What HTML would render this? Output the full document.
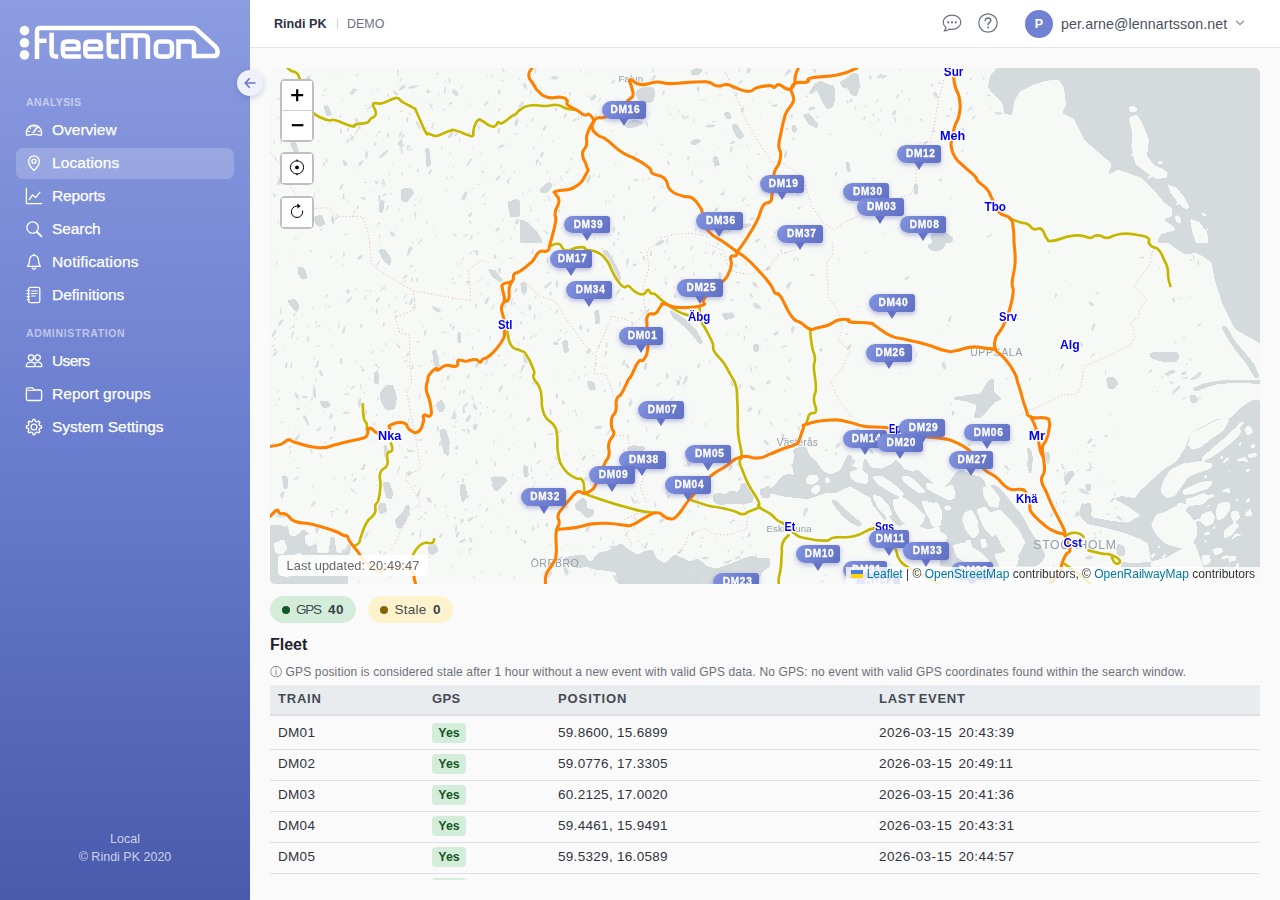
<!DOCTYPE html>
<html lang="en"><head><meta charset="utf-8"><title>FleetMon - Locations</title>
<style>
*{box-sizing:border-box}
html,body{margin:0;padding:0}
body{width:1280px;height:900px;overflow:hidden;background:#fafafa;font-family:"Liberation Sans",sans-serif;position:relative;color:#333}
.abs{position:absolute}
#sidebar{position:absolute;left:0;top:0;width:250px;height:900px;background:linear-gradient(180deg,#8c9ce1 0%,#6a7dce 50%,#4a5aad 100%)}
.sec{position:absolute;left:26px;font-size:10.5px;font-weight:bold;letter-spacing:1.05px;color:rgba(255,255,255,.55);line-height:12px;white-space:nowrap}
.nav{position:absolute;left:16px;width:218px;height:31px;border-radius:7px;color:#fff;font-size:15.5px;line-height:31px;white-space:nowrap}
.nav.active{background:rgba(255,255,255,.2)}
.nav svg{position:absolute;left:9px;top:6.5px;width:18px;height:18px;fill:none;stroke:#fff;stroke-width:1.3;stroke-linecap:round;stroke-linejoin:round}
.nav span{position:absolute;left:36px;top:-1px;-webkit-text-stroke:.25px #fff}
.foot{position:absolute;left:0;width:250px;text-align:center;font-size:12.5px;color:rgba(255,255,255,.72);line-height:14px}
#collapse{position:absolute;left:237px;top:70px;width:26px;height:26px;border-radius:50%;background:#eef0fb;box-shadow:0 2px 6px rgba(60,70,140,.25)}
#header{position:absolute;left:250px;top:0;width:1030px;height:48px;background:#fff;border-bottom:1px solid #e2e5ef}
#header .t{position:absolute;white-space:nowrap;line-height:16px;top:16px;font-size:13.5px}
#map{position:absolute;left:270px;top:68px;width:990px;height:516px;border-radius:5px;overflow:hidden;background:#f7f9f7}
#map svg.base{position:absolute;left:0;top:0}
.mk{position:absolute;height:17.6px;border-radius:9px 3px 3px 9px;background:linear-gradient(120deg,#8293de 0%,#6f7fd1 50%,#6070c4 100%);box-shadow:0 2px 5px rgba(70,80,170,.38);color:#fff;font-weight:bold;font-size:10.1px;line-height:18.4px;text-align:center;letter-spacing:.7px;padding-left:3.2px;-webkit-text-stroke:.3px #fff}
.mk:after{content:"";position:absolute;left:50%;top:17.3px;margin-left:-5px;border-left:5.3px solid transparent;border-right:5.3px solid transparent;border-top:8px solid #6473c7}
.lbar{position:absolute;left:10.3px;width:33.6px;border:2px solid rgba(0,0,0,.25);border-radius:5px;background-clip:padding-box;background:#fff}
.lbar div{width:29.6px;height:29px;position:relative;background:#fff;overflow:hidden}
</style><style>
.th{position:absolute;top:5.8px;font-size:13px;font-weight:bold;letter-spacing:1px;color:#454b54;line-height:16px;white-space:nowrap}
.td{position:absolute;font-size:13.5px;line-height:16px;color:#30343c;white-space:nowrap;letter-spacing:.3px}
.row{position:absolute;left:0;width:990px;height:31px;border-bottom:1px solid #dcdfe4}
.yes{position:absolute;left:162px;top:4.4px;width:34px;height:20px;border-radius:4px;background:#d4edda;color:#155724;font-weight:bold;font-size:12.4px;line-height:20px;text-align:center}
</style></head><body>
<div id="sidebar">
<svg class="abs" style="left:0;top:0" width="250" height="80" viewBox="0 0 250 80"><g fill="#fff"><circle cx="24.5" cy="30.6" r="4.8"/><circle cx="24.5" cy="42.8" r="4.8"/><circle cx="24.5" cy="54.9" r="4.8"/></g>
<g fill="none" stroke="#fff" stroke-width="4.5" stroke-linejoin="round">
<path d="M37,58.9 V31.4 Q37,28.1 40.3,28.1 H193 Q195.2,28.1 196.8,29.6 L215.4,46.6 Q217.5,48.5 217.5,51.2 V52.6 Q217.5,56.1 214,56.1 H194"/>
<path d="M37,40.8 H46.6"/>
<path d="M51.6,32.8 V52.6 Q51.6,56.6 55.6,56.6 H58.2"/>
<path d="M80.9,56.5 H67 Q62.9,56.5 62.9,52.4 V45.6 Q62.9,41.5 67,41.5 H74.4 Q78.5,41.5 78.5,45.6 V48.9 H63"/>
<path d="M103.3,56.5 H89.4 Q85.3,56.5 85.3,52.4 V45.6 Q85.3,41.5 89.4,41.5 H96.8 Q100.9,41.5 100.9,45.6 V48.9 H85.4"/>
<path d="M108.8,32.8 V52.6 Q108.8,56.6 112.8,56.6 H118.8 M108.8,41.4 H118.8"/>
<path d="M123.3,58.9 V35.5 H143.8 Q147.9,35.5 147.9,39.6 V58.9 M135.6,35.5 V58.9" stroke-linejoin="miter"/>
<rect x="155.9" y="41.5" width="16.1" height="15.1" rx="4"/>
<path d="M178.5,58.9 V41.5 H189.9 Q194,41.5 194,45.6 V58.35" stroke-linejoin="miter"/>
</g></svg>
<div class="sec" style="top:96px;letter-spacing:.4px">ANALYSIS</div>
<div class="sec" style="top:327px;letter-spacing:.65px">ADMINISTRATION</div>
<div class="nav" style="top:114.5px"><svg viewBox="0 0 18 18"><path d="M1.6,13.6 A7.6,7.6 0 1 1 16.4,13.6 Q16.2,14.6 15.2,14.3 Q9,12.6 2.8,14.3 Q1.8,14.6 1.6,13.6Z"/><path d="M9,4.6v1.3M4.6,6.4l.9,.9M13.4,6.4l-.5,.5M3.2,10.4h1.3M13.5,10.4h1.3" stroke-width="1.2"/><path d="M8.3,11.6 L12,6.6" stroke-width="1.6"/></svg><span style="letter-spacing:0px">Overview</span></div>
<div class="nav active" style="top:147.5px"><svg viewBox="0 0 18 18"><path d="M9,16.6 C9,16.6 3.6,11.6 3.6,7.3 A5.4,5.4 0 0 1 14.4,7.3 C14.4,11.6 9,16.6 9,16.6Z"/><circle cx="9" cy="7.2" r="2.1"/></svg><span style="letter-spacing:0.11px">Locations</span></div>
<div class="nav" style="top:180.5px"><svg viewBox="0 0 18 18"><path d="M1.4,1.2 V16.6 H16.8"/><path d="M4.2,12.6 L7.6,8 L10.6,10.6 L15,5.2"/></svg><span style="letter-spacing:-0.16px">Reports</span></div>
<div class="nav" style="top:213.5px"><svg viewBox="0 0 18 18"><circle cx="7.6" cy="7.6" r="5.7"/><path d="M11.9,11.9 L16.4,16.4" stroke-width="2"/></svg><span style="letter-spacing:-0.08px">Search</span></div>
<div class="nav" style="top:246.5px"><svg viewBox="0 0 18 18"><path d="M9,2.3 C5.9,2.3 4.5,4.7 4.5,7.6 C4.5,10.6 3.5,12.1 2.6,13.3 H15.4 C14.5,12.1 13.5,10.6 13.5,7.6 C13.5,4.7 12.1,2.3 9,2.3Z"/><path d="M9,1.2v1"/><path d="M7.3,14.9 A1.75,1.75 0 0 0 10.7,14.9" /></svg><span style="letter-spacing:0.18px">Notifications</span></div>
<div class="nav" style="top:279.5px"><svg viewBox="0 0 18 18"><rect x="3.6" y="1.4" width="11.2" height="15.2" rx="1.7"/><path d="M6.6,5h5.6M6.6,7.5h5.6M6.6,10h3.6" stroke-width="1.1"/><path d="M2,4.6h2.4M2,7.6h2.4M2,10.6h2.4M2,13.6h2.4" stroke-width="1.2"/></svg><span style="letter-spacing:0px">Definitions</span></div>
<div class="nav" style="top:345.5px"><svg viewBox="0 0 18 18"><circle cx="6" cy="5.6" r="2.7"/><circle cx="12.6" cy="5.6" r="2.7"/><path d="M1.2,14.6 C1.2,11.6 3.2,10.2 6,10.2 C8.8,10.2 10.2,11.8 10.2,14.6Z"/><path d="M10.6,10.6 C11.2,10.3 11.9,10.2 12.6,10.2 C15.4,10.2 16.9,11.6 16.9,14.6 H11.8"/></svg><span style="letter-spacing:-0.64px">Users</span></div>
<div class="nav" style="top:378.5px"><svg viewBox="0 0 18 18"><path d="M1.4,5 V13.9 Q1.4,15.5 3,15.5 H15 Q16.6,15.5 16.6,13.9 V6.6 Q16.6,5 15,5 H9.2 L7.6,2.9 H3 Q1.4,2.9 1.4,4.5Z"/><path d="M1.4,5.4 H9" stroke-width="1"/></svg><span style="letter-spacing:0.04px">Report groups</span></div>
<div class="nav" style="top:411.5px"><svg viewBox="0 0 18 18"><path d="M7.71,3.24 L8.01,1.46 L9.99,1.46 L10.29,3.24 L12.16,4.02 L13.63,2.97 L15.03,4.37 L13.98,5.84 L14.76,7.71 L16.54,8.01 L16.54,9.99 L14.76,10.29 L13.98,12.16 L15.03,13.63 L13.63,15.03 L12.16,13.98 L10.29,14.76 L9.99,16.54 L8.01,16.54 L7.71,14.76 L5.84,13.98 L4.37,15.03 L2.97,13.63 L4.02,12.16 L3.24,10.29 L1.46,9.99 L1.46,8.01 L3.24,7.71 L4.02,5.84 L2.97,4.37 L4.37,2.97 L5.84,4.02Z"/><circle cx="9" cy="9" r="2.9"/></svg><span style="letter-spacing:-0.03px">System Settings</span></div>
<div class="foot" style="top:832px">Local</div><div class="foot" style="top:850px">&copy; Rindi PK 2020</div>
</div>
<div id="collapse"><svg width="26" height="26" viewBox="0 0 26 26" fill="none" stroke="#6675c9" stroke-width="1.6" stroke-linecap="round" stroke-linejoin="round"><path d="M18,13 H8.5 M12.3,8.8 L8.2,13 L12.3,17.2"/></svg></div>
<div id="header">
<div class="t" style="left:24px;font-weight:bold;color:#2b3245;font-size:12.6px;letter-spacing:0" id="h1">Rindi PK</div>
<div class="abs" style="left:86.5px;top:17.5px;width:1px;height:11.5px;background:#cdd1e2"></div>
<div class="t" style="left:97px;color:#6b7083;font-size:12.5px;letter-spacing:0" id="h2">DEMO</div>
<svg class="abs" style="left:691px;top:12px" width="22" height="22" viewBox="0 0 22 22" fill="none" stroke="#6b7280" stroke-width="1.25" stroke-linejoin="round"><path d="M11,3.2 C5.9,3.2 2.2,6.3 2.2,10.2 C2.2,12.3 3.3,14.1 5,15.4 C4.8,16.9 4.1,18.1 3.2,19 C5.1,18.9 6.8,18.3 8,17.1 C9,17.3 10,17.4 11,17.4 C16.1,17.4 19.8,14.2 19.8,10.2 C19.8,6.3 16.1,3.2 11,3.2Z"/><g fill="#6b7280" stroke="none"><circle cx="7.2" cy="10.4" r="1.05"/><circle cx="11" cy="10.4" r="1.05"/><circle cx="14.8" cy="10.4" r="1.05"/></g></svg>
<svg class="abs" style="left:727px;top:12px" width="22" height="22" viewBox="0 0 22 22" fill="none" stroke="#6b7280" stroke-width="1.25"><circle cx="11" cy="11" r="9.2"/><path d="M8.3,8.6 C8.3,6.9 9.5,6 11,6 C12.6,6 13.8,7 13.8,8.4 C13.8,10.3 11.1,10.5 11.1,12.8" stroke-width="1.5" stroke-linecap="round"/><circle cx="11.1" cy="15.6" r="1" fill="#6b7280" stroke="none"/></svg>
<div class="abs" style="left:775px;top:9.5px;width:28px;height:28px;border-radius:50%;background:#7080d2;color:#fff;font-weight:bold;font-size:12.5px;line-height:28px;text-align:center">P</div>
<div class="t" style="left:811px;color:#4b4f5c;font-size:14.2px;letter-spacing:.12px" id="h3">per.arne@lennartsson.net</div>
<svg class="abs" style="left:985px;top:18px" width="10" height="10" viewBox="0 0 10 10" fill="none" stroke="#7a7f8c" stroke-width="1.1" stroke-linecap="round" stroke-linejoin="round"><path d="M1.5,3.2 L5,6.6 L8.5,3.2"/></svg>
</div>
<div id="map">
<svg class="base" width="990" height="516" viewBox="270 68 990 516">
<rect x="270" y="68" width="990" height="516" fill="#f7f9f7"/>
<defs><filter id="goo" x="-2%" y="-2%" width="104%" height="104%" color-interpolation-filters="sRGB"><feGaussianBlur in="SourceGraphic" stdDeviation="1.1" result="b"/><feColorMatrix in="b" mode="matrix" values="1 0 0 0 0  0 1 0 0 0  0 0 1 0 0  0 0 0 14 -6.5"/></filter></defs>
<g fill="#d5dadd" stroke="none" filter="url(#goo)">
<path d="M1020,68 L1260,68 L1260,345 L1256,340.7 L1244.6,334.8 L1234.8,328.9 L1223.1,305.5 L1215.3,282.1 L1211.4,262.5 L1203.6,256.7 L1195.8,252.8 L1186,254.7 L1176.3,248.9 L1168.4,243 L1156.7,243 L1160.6,234 L1176.3,230.1 L1170.4,224.3 L1162.6,219.4 L1172.3,216.4 L1172.3,208.6 L1164.5,202.8 L1152.8,189.1 L1141,177.4 L1129.4,173.5 L1117.7,169.6 L1107.9,175.4 L1111.8,163.7 L1098,152 L1084.5,140.3 L1078.6,128.5 L1073.7,118.8 L1062,113 L1066,105 L1064,87.5 L1059,79.7 L1045.4,80.7 L1031.7,85.6 L1020,91.4 L1014.1,101.2 L1012.2,114.9 L1004.4,113.9 L1002.4,103.2 L994.6,95.3 L987.8,87.5 L990,76 L996.6,68Z"/>
<path d="M1030,420 L1060,430 L1100,500 L1150,560 L1200,620 L1228,690 L1200,690 L1160,620 L1110,560 L1070,500 L1040,450Z" transform="translate(1020,243) scale(0.19531)"/>
<path d="M880,745 L940,720 L1010,705 L1100,700 L1240,700 L1240,722 L1100,716 L1010,723 L950,741 L900,762Z" transform="translate(1020,243) scale(0.19531)"/>
<path d="M660,565 L700,555 L760,560 L800,555 L820,580 L800,610 L750,612 L700,600 L670,590Z" transform="translate(1020,243) scale(0.19531)"/>
<path d="M870,775 L900,780 L915,805 L890,825 L870,810Z" transform="translate(1020,243) scale(0.19531)"/>
<path d="M440,690 L480,685 L505,720 L480,750 L450,745Z" transform="translate(1020,243) scale(0.19531)"/>
<path d="M195,130 L230,80 L260,65 L300,85 L330,90 L335,160 L320,205 L290,210 L260,160 L240,110 L215,135Z" transform="translate(770,68) scale(0.19531)"/>
<path d="M355,70 L390,55 L420,25 L455,30 L460,100 L445,145 L415,140 L400,105 L370,100Z" transform="translate(770,68) scale(0.19531)"/>
<path d="M165,240 L200,230 L250,290 L240,310 L200,290Z" transform="translate(770,68) scale(0.19531)"/>
<path d="M110,295 L130,288 L140,320 L125,335 L110,320Z" transform="translate(770,68) scale(0.19531)"/>
<path d="M385,480 L405,478 L415,530 L395,535Z" transform="translate(770,68) scale(0.19531)"/>
<path d="M735,600 L755,590 L760,640 L740,655Z" transform="translate(770,68) scale(0.19531)"/>
<path d="M820,850 L900,840 L940,870 L930,896 L830,896Z" transform="translate(770,68) scale(0.19531)"/>
<path d="M590,120 L620,100 L680,95 L695,130 L680,175 L640,180 L600,160Z" transform="translate(520,68) scale(0.19531)"/>
<path d="M530,300 L560,270 L600,265 L640,280 L600,300 L560,310Z" transform="translate(520,68) scale(0.19531)"/>
<path d="M0,770 L40,790 L90,840 L120,896 L0,896Z" transform="translate(520,68) scale(0.19531)"/>
<path d="M870,15 L900,0 L940,5 L920,35 L880,40Z" transform="translate(520,68) scale(0.19531)"/>
<path d="M1040,230 L1070,220 L1085,260 L1060,265Z" transform="translate(520,68) scale(0.19531)"/>
<path d="M1080,290 L1110,285 L1150,350 L1120,370 L1095,330Z" transform="translate(520,68) scale(0.19531)"/>
<path d="M870,375 L900,362 L935,370 L900,395 L875,392Z" transform="translate(520,68) scale(0.19531)"/>
<path d="M100,620 L150,580 L170,600 L140,640 L105,640Z" transform="translate(520,68) scale(0.19531)"/>
<path d="M985,455 L1010,450 L1025,500 L995,505Z" transform="translate(520,68) scale(0.19531)"/>
<path d="M270,190 L300,195 L320,245 L290,250Z" transform="translate(270,68) scale(0.19531)"/>
<path d="M795,410 L815,405 L825,500 L800,510Z" transform="translate(270,68) scale(0.19531)"/>
<path d="M670,620 L720,610 L740,640 L700,690 L670,680Z" transform="translate(270,68) scale(0.19531)"/>
<path d="M560,680 L585,675 L580,740 L560,745Z" transform="translate(270,68) scale(0.19531)"/>
<path d="M225,760 L265,750 L285,800 L255,815 L230,800Z" transform="translate(270,68) scale(0.19531)"/>
<path d="M1215,690 L1260,670 L1280,680 L1280,760 L1230,765Z" transform="translate(270,68) scale(0.19531)"/>
<path d="M100,380 L130,375 L150,430 L125,440Z" transform="translate(270,68) scale(0.19531)"/>
<path d="M560,770 L590,730 L630,725 L650,790 L640,850 L600,860 L570,820Z" transform="translate(270,243) scale(0.19531)"/>
<path d="M830,550 L850,540 L865,600 L870,640 L845,640 L835,600Z" transform="translate(270,243) scale(0.19531)"/>
<path d="M140,120 L175,125 L195,180 L165,190 L145,160Z" transform="translate(270,243) scale(0.19531)"/>
<path d="M85,295 L130,285 L150,320 L140,360 L110,330Z" transform="translate(270,243) scale(0.19531)"/>
<path d="M550,35 L590,30 L620,80 L615,120 L585,95Z" transform="translate(270,243) scale(0.19531)"/>
<path d="M1110,130 L1150,140 L1195,190 L1180,205 L1140,175Z" transform="translate(270,243) scale(0.19531)"/>
<path d="M850,820 L880,800 L900,840 L880,870 L860,860Z" transform="translate(270,243) scale(0.19531)"/>
<path d="M250,805 L300,810 L315,840 L270,845Z" transform="translate(270,243) scale(0.19531)"/>
<path d="M530,660 L555,655 L560,720 L535,725Z" transform="translate(270,243) scale(0.19531)"/>
<path d="M960,455 L975,450 L980,510 L960,520Z" transform="translate(270,243) scale(0.19531)"/>
<path d="M420,30 L450,40 L480,90 L510,150 L520,195 L500,190 L470,140 L440,90Z" transform="translate(520,243) scale(0.19531)"/>
<path d="M760,335 L800,360 L860,400 L900,440 L940,510 L920,520 L880,470 L830,420 L780,380Z" transform="translate(520,243) scale(0.19531)"/>
<path d="M0,200 L30,205 L40,250 L10,260Z" transform="translate(520,243) scale(0.19531)"/>
<path d="M215,500 L245,495 L250,560 L225,565Z" transform="translate(520,243) scale(0.19531)"/>
<path d="M340,705 L380,710 L390,750 L355,755Z" transform="translate(520,243) scale(0.19531)"/>
<path d="M380,345 L405,340 L410,410 L385,420Z" transform="translate(520,243) scale(0.19531)"/>
<path d="M1195,515 L1225,520 L1220,560 L1195,555Z" transform="translate(520,243) scale(0.19531)"/>
<path d="M1030,360 L1090,355 L1105,380 L1050,395Z" transform="translate(520,243) scale(0.19531)"/>
<path d="M930,790 L1000,780 L1080,770 L1100,730 L1130,690 L1150,700 L1145,760 L1190,800 L1150,815 L1120,850 L1080,896 L1040,896 L1060,830 L1000,810 L940,800Z" transform="translate(770,243) scale(0.19531)"/>
<path d="M805,10 L840,0 L900,0 L890,30 L850,45 L815,35Z" transform="translate(770,243) scale(0.19531)"/>
<path d="M0,545 L60,550 L100,570 L140,600 L170,570 L210,600 L240,650 L240,690 L300,690 L310,610 L330,605 L340,690 L380,690 L400,640 L420,650 L400,720 L400,850 L0,850Z" transform="translate(270,418) scale(0.19531)"/>
<path d="M575,330 L610,325 L630,380 L625,420 L595,410Z" transform="translate(270,418) scale(0.19531)"/>
<path d="M550,440 L590,430 L600,480 L560,495Z" transform="translate(270,418) scale(0.19531)"/>
<path d="M640,520 L680,480 L700,440 L720,450 L700,520 L670,570 L645,560Z" transform="translate(270,418) scale(0.19531)"/>
<path d="M865,60 L900,55 L920,120 L915,200 L890,180Z" transform="translate(270,418) scale(0.19531)"/>
<path d="M970,340 L1000,335 L1010,400 L985,440 L975,400Z" transform="translate(270,418) scale(0.19531)"/>
<path d="M1130,300 L1200,300 L1220,320 L1160,380 L1140,360Z" transform="translate(270,418) scale(0.19531)"/>
<path d="M810,650 L850,645 L865,680 L830,705 L810,690Z" transform="translate(270,418) scale(0.19531)"/>
<path d="M60,290 L90,300 L95,360 L70,370Z" transform="translate(270,418) scale(0.19531)"/>
<path d="M580,140 L600,135 L605,200 L585,205Z" transform="translate(270,418) scale(0.19531)"/>
<path d="M215,720 L260,705 L330,700 L360,740 L400,690 L450,680 L480,660 L520,640 L540,660 L600,700 L640,680 L680,675 L700,720 L740,745 L790,700 L830,715 L870,735 L910,720 L960,760 L1010,770 L1080,745 L1140,720 L1190,705 L1230,720 L1280,715 L1280,760 L1240,790 L1215,850 L500,850 L490,790 L420,780 L370,775 L340,760 L300,770 L250,750Z" transform="translate(520,418) scale(0.19531)"/>
<path d="M985,400 L1010,380 L1050,390 L1080,370 L1120,380 L1130,340 L1160,330 L1180,370 L1200,400 L1190,435 L1140,440 L1080,440 L1020,445 L990,430Z" transform="translate(520,418) scale(0.19531)"/>
<path d="M1225,380 L1260,350 L1280,345 L1280,410 L1240,410Z" transform="translate(520,418) scale(0.19531)"/>
<path d="M280,440 L320,405 L345,430 L340,460 L380,470 L375,500 L340,515 L310,480 L285,470Z" transform="translate(520,418) scale(0.19531)"/>
<path d="M545,150 L580,140 L640,145 L640,165 L590,170 L555,175Z" transform="translate(520,418) scale(0.19531)"/>
<path d="M15,240 L40,245 L45,300 L20,310Z" transform="translate(520,418) scale(0.19531)"/>
<path d="M0,300 L60,312 L100,270 L140,222 L190,210 L215,232 L200,160 L215,110 L205,60 L250,40 L290,45 L310,100 L350,130 L390,190 L440,215 L500,190 L540,110 L555,85 L580,110 L570,160 L640,190 L650,110 L670,130 L690,170 L760,180 L820,150 L850,120 L880,150 L900,180 L960,200 L980,180 L1010,210 L1060,250 L1100,290 L1150,330 L1200,350 L1250,340 L1250,560 L1150,530 L1050,560 L1000,540 L930,510 L870,540 L840,520 L800,470 L760,440 L720,400 L690,360 L650,340 L600,310 L560,290 L520,310 L480,330 L420,330 L370,345 L300,370 L200,360 L130,350 L60,330 L0,340Z" transform="translate(760,440) scale(0.16000)"/>
<path d="M440,370 L480,380 L540,440 L600,490 L640,520 L625,545 L570,520 L520,480 L470,420Z" transform="translate(760,440) scale(0.16000)"/>
<path d="M690,365 L715,375 L760,440 L795,495 L780,505 L740,450 L700,400Z" transform="translate(760,440) scale(0.16000)"/>
<path d="M0,330 L20,300 L60,260 L100,200 L130,185 L200,215 L250,230 L280,260 L290,300 L330,280 L360,290 L400,330 L440,380 L470,420 L500,450 L530,500 L560,560 L600,620 L640,680 L660,720 L640,760 L600,790 L0,790Z" transform="translate(940,440) scale(0.16000)"/>
<path d="M655,75 L680,70 L690,120 L670,145 L655,120Z" transform="translate(940,440) scale(0.16000)"/>
<path d="M540,40 L570,60 L580,110 L575,190 L560,220 L545,160 L550,100Z" transform="translate(940,440) scale(0.16000)"/>
<path d="M780,230 L830,190 L845,210 L800,270 L780,290Z" transform="translate(940,440) scale(0.16000)"/>
<path d="M870,430 L900,400 L940,390 L950,440 L930,490 L890,500Z" transform="translate(940,440) scale(0.16000)"/>
<path d="M905,275 L940,270 L945,310 L915,320Z" transform="translate(940,440) scale(0.16000)"/>
<path d="M978,0 L940,0 L880,40 L830,90 L760,95 L700,130 L640,160 L615,230 L570,300 L500,345 L440,400 L390,445 L365,480 L300,470 L262,482 L330,520 L395,565 L425,605 L430,700 L445,790 L520,770 L600,725 L660,700 L700,815 L700,900 L978,900Z" transform="translate(1060,400) scale(0.20450)"/>
<path d="M395,565 L330,600 L250,590 L160,575 L125,515 L105,500 L95,560 L130,605 L220,625 L300,645 L380,675 L430,700 L425,605Z" transform="translate(1060,400) scale(0.20450)"/>
<path d="M280,700 L315,715 L320,760 L285,765 L275,730Z" transform="translate(1060,400) scale(0.20450)"/>
<path d="M300,790 L360,800 L445,790 L445,900 L300,900Z" transform="translate(1060,400) scale(0.20450)"/>
<path d="M20,370 L50,345 L70,350 L45,400 L25,420Z" transform="translate(1060,400) scale(0.20450)"/>
<path d="M130,415 L150,412 L152,445 L132,448Z" transform="translate(1060,400) scale(0.20450)"/>
</g>
<g fill="#d9dee0" stroke="none"><path d="M445.3,331.2 L444.5,332.3 L442.8,333.2 L441.3,333.1 L442.0,331.9 L444.0,330.9Z M575.6,371.8 L575.4,372.5 L574.5,373.4 L573.7,373.6 L574.0,372.7 L575.0,371.8Z M565.8,185.8 L565.2,187.3 L564.5,188.4 L563.3,189.4 L563.7,188.0 L564.7,186.3Z M640.6,105.9 L641.1,105.8 L641.7,107.3 L641.3,108.6 L641.1,110.1 L640.6,108.5 L640.2,107.5 L640.2,105.8Z M822.7,579.5 L822.9,580.2 L822.6,581.7 L821.7,582.5 L821.2,582.2 L821.5,581.0 L822.1,580.0Z M442.3,146.4 L442.5,147.8 L442.2,149.6 L441.5,150.4 L441.1,150.2 L441.1,149.1 L441.4,147.4Z M507.7,447.9 L508.4,447.8 L510.0,449.0 L510.4,450.1 L509.1,449.5 L508.0,448.6Z M654.0,196.2 L654.9,196.8 L654.6,198.6 L653.5,199.1 L652.9,198.2 L653.2,196.6Z M405.1,86.3 L405.6,87.4 L403.6,89.0 L401.4,89.9 L398.8,90.7 L398.4,89.4 L400.2,87.7 L401.8,85.0 L405.1,84.4Z M392.9,561.6 L392.7,562.7 L392.7,563.2 L392.3,563.8 L391.8,564.6 L391.6,564.3 L391.8,563.6 L392.0,563.0 L392.3,562.5Z M378.8,199.8 L379.6,200.6 L380.0,202.4 L379.6,203.0 L379.0,202.4 L378.2,200.7Z M377.7,467.4 L377.5,468.7 L377.0,469.8 L376.1,471.4 L375.7,470.9 L376.1,469.5 L376.9,467.7Z M576.3,409.9 L576.3,410.5 L576.0,411.4 L575.0,412.6 L574.7,411.9 L574.6,411.4 L574.6,410.2 L575.9,409.3Z M376.6,308.4 L377.5,309.1 L377.8,311.3 L377.4,312.9 L376.8,314.5 L376.2,312.9 L375.6,311.4 L375.8,309.3Z M534.3,249.3 L534.2,250.3 L533.3,251.7 L532.0,253.7 L531.1,253.7 L530.8,252.8 L532.0,250.7 L533.8,248.8Z M714.8,162.1 L714.0,162.2 L712.8,162.1 L711.7,161.5 L710.8,160.8 L712.2,161.0 L713.1,160.9 L714.3,161.5Z M480.3,278.9 L480.5,279.3 L480.2,280.3 L479.8,281.3 L479.2,281.7 L479.1,281.0 L479.3,280.0 L479.8,279.4Z M1117.2,507.0 L1117.1,507.8 L1117.1,508.6 L1116.4,508.9 L1115.6,509.5 L1115.8,508.6 L1116.0,507.9 L1116.6,506.9Z M405.6,143.5 L404.3,145.8 L401.6,148.1 L399.1,148.8 L400.3,146.5 L402.9,144.7Z M750.2,531.4 L750.4,533.1 L750.2,535.7 L748.8,537.3 L747.7,537.5 L747.8,534.9 L749.0,532.7Z M277.8,261.2 L277.3,262.7 L276.5,264.2 L275.6,264.5 L275.3,263.7 L276.7,261.6Z M522.4,310.5 L522.5,311.4 L522.6,312.2 L522.1,313.0 L521.6,313.7 L521.0,314.0 L520.6,313.1 L521.4,311.9 L521.8,311.2Z M282.1,214.1 L282.8,214.2 L283.6,215.0 L283.6,215.8 L283.8,216.7 L283.2,216.8 L282.4,215.8 L282.0,214.8Z M472.1,345.6 L472.8,346.8 L473.2,347.9 L473.6,349.6 L472.9,349.5 L472.3,349.9 L471.8,348.2 L472.1,347.1Z M494.8,440.2 L495.2,440.6 L494.6,442.0 L494.3,443.1 L493.7,443.5 L493.1,443.8 L493.4,442.6 L493.6,441.4 L494.3,440.5Z M1017.5,314.6 L1018.1,315.2 L1018.1,316.6 L1018.0,319.0 L1016.8,320.7 L1015.7,320.3 L1016.0,317.7 L1016.2,316.3 L1016.6,313.6Z M701.7,460.0 L701.4,461.2 L700.9,462.4 L700.0,463.0 L700.1,461.9 L700.7,460.9Z M426.1,329.0 L426.3,330.6 L426.5,332.1 L425.7,334.1 L424.7,336.2 L424.2,335.0 L424.2,333.4 L424.1,331.4 L425.2,330.4Z M772.6,258.9 L772.7,259.3 L772.0,260.1 L771.3,260.2 L771.5,259.4 L772.2,258.5Z M1199.8,394.5 L1200.3,397.3 L1200.4,400.6 L1200.0,401.4 L1199.5,400.3 L1199.4,397.1Z M360.1,197.3 L362.1,197.4 L363.3,196.9 L365.4,197.7 L365.2,198.7 L366.4,200.1 L364.1,199.7 L362.5,199.6 L361.6,198.6Z M730.2,379.6 L731.7,380.3 L733.6,382.1 L734.3,385.1 L733.3,386.0 L732.0,386.5 L730.5,383.6 L730.3,381.6Z M499.9,90.2 L501.2,90.0 L500.6,92.3 L499.7,93.9 L498.3,95.2 L498.2,93.1 L498.1,91.5 L499.0,89.3Z M1030.8,376.8 L1030.7,378.3 L1030.0,380.4 L1029.2,381.0 L1028.9,380.0 L1029.7,377.4Z M541.9,134.9 L542.2,135.6 L541.5,136.4 L541.0,136.8 L540.2,137.0 L540.4,135.9 L541.2,134.9Z M308.6,100.0 L308.9,100.3 L309.2,101.1 L309.0,102.2 L308.7,102.8 L308.4,102.1 L308.2,101.1 L308.4,100.3Z M340.9,128.3 L341.6,129.0 L342.0,132.3 L341.4,134.0 L340.8,134.5 L340.2,132.2 L340.1,128.7Z M670.0,257.0 L669.9,258.0 L669.8,259.1 L668.9,259.8 L668.3,260.6 L667.5,261.0 L667.8,259.7 L668.4,258.4 L669.2,257.5Z M472.9,403.6 L474.2,403.0 L476.2,405.7 L477.2,407.8 L477.1,409.4 L475.8,410.3 L473.3,407.7 L472.9,405.3Z M607.2,255.7 L607.7,256.2 L608.2,257.0 L608.3,257.9 L608.0,258.1 L607.6,258.3 L607.1,257.4 L607.1,256.5Z M294.3,329.8 L293.8,332.5 L293.4,334.3 L292.4,337.2 L290.9,338.4 L291.4,335.5 L291.5,333.6 L292.8,331.9Z M477.0,459.0 L477.4,460.1 L477.5,462.0 L477.0,464.1 L476.2,464.8 L475.5,464.1 L475.8,461.8 L476.1,459.5Z M407.6,448.5 L408.1,448.9 L408.1,449.9 L407.7,450.3 L407.2,450.2 L407.1,448.9Z M972.4,77.6 L972.3,78.3 L971.4,79.5 L969.8,80.4 L969.4,80.0 L969.6,79.3 L970.5,78.3 L971.7,77.7Z M1097.0,536.2 L1096.6,537.5 L1095.7,538.8 L1094.7,539.7 L1094.4,539.1 L1094.5,538.1 L1095.9,536.7Z M493.3,74.1 L493.7,74.7 L492.8,76.1 L491.9,77.6 L491.3,77.1 L491.9,75.6 L492.5,74.1Z M848.2,333.3 L848.1,334.0 L846.9,335.2 L845.9,335.1 L845.1,334.9 L846.1,333.8 L848.0,332.5Z M356.6,491.8 L356.9,492.2 L356.9,493.2 L356.6,494.5 L356.1,494.7 L356.1,493.7 L356.1,493.0 L356.3,492.3Z M546.8,124.2 L546.8,125.8 L546.1,128.2 L544.3,130.4 L542.9,131.1 L542.9,129.8 L542.9,128.8 L543.7,127.0 L544.9,126.1Z M559.7,208.2 L560.1,209.3 L560.1,211.8 L559.0,213.2 L558.7,211.1 L558.9,208.8Z M1049.1,372.3 L1049.1,373.0 L1049.0,373.5 L1048.8,373.9 L1048.5,374.5 L1048.2,374.3 L1048.0,373.9 L1048.3,373.1 L1048.6,372.5Z M499.7,573.9 L500.0,574.1 L500.0,574.7 L499.7,575.4 L499.1,575.8 L498.8,575.5 L498.9,574.8 L498.9,574.1 L499.4,573.5Z M779.8,249.1 L780.7,249.7 L781.8,250.3 L782.2,251.7 L781.2,251.6 L780.3,251.3 L779.7,250.1Z M581.9,115.5 L582.3,115.9 L582.1,117.5 L581.5,118.2 L580.7,119.0 L581.0,117.2 L581.3,115.5Z M609.2,457.0 L609.9,457.1 L610.4,458.5 L610.0,459.4 L609.4,459.8 L608.6,458.8 L608.9,457.7Z M457.7,308.5 L458.0,308.9 L457.4,310.1 L456.7,311.0 L456.6,310.4 L456.5,309.7 L457.2,308.9Z M1163.5,375.7 L1163.3,376.6 L1163.2,377.5 L1162.3,378.4 L1161.4,378.8 L1161.5,378.0 L1161.6,377.4 L1161.8,376.4 L1162.6,376.2Z M752.4,281.9 L754.2,282.1 L756.3,283.3 L757.3,285.6 L758.1,287.7 L756.4,287.4 L755.2,287.0 L753.5,285.8 L752.4,283.8Z M640.2,95.1 L640.7,96.0 L640.7,97.3 L640.2,97.6 L639.7,97.2 L639.7,96.0Z M424.6,402.0 L425.0,402.3 L424.9,403.2 L424.2,403.1 L423.8,403.0 L423.8,402.4 L424.2,401.9Z M640.8,251.5 L641.1,252.1 L641.7,252.4 L641.4,253.1 L640.8,253.1 L640.3,253.2 L639.7,253.0 L639.7,252.2 L640.4,252.1Z M665.2,517.5 L664.9,519.2 L662.3,522.2 L659.7,522.7 L659.1,521.8 L660.6,519.6 L663.9,516.8Z M552.5,543.5 L551.8,544.4 L550.9,545.3 L550.2,545.3 L550.6,544.7 L551.7,543.5Z M353.2,214.7 L353.4,215.6 L353.6,216.5 L352.9,217.1 L352.2,217.2 L352.2,216.1 L352.7,215.5Z M721.9,84.5 L722.5,85.4 L721.5,87.8 L719.6,89.1 L719.0,88.0 L718.9,86.2 L720.8,83.8Z M512.2,346.3 L513.3,347.0 L513.8,349.3 L513.6,350.3 L512.8,349.5 L512.0,347.7Z M674.8,294.1 L675.8,295.1 L676.6,296.2 L676.5,297.9 L675.3,298.4 L674.0,297.0 L673.7,295.1Z M746.0,262.9 L746.4,262.9 L746.4,263.8 L746.1,264.7 L745.7,266.0 L745.4,264.9 L745.1,264.6 L745.1,263.5 L745.6,262.3Z M406.8,302.3 L407.4,302.8 L407.0,303.8 L406.2,304.2 L405.4,304.1 L404.9,303.5 L405.5,302.6 L406.2,302.3Z M382.8,507.4 L383.0,507.7 L382.6,508.5 L382.0,508.6 L381.6,508.5 L381.7,507.8 L382.4,507.0Z M637.8,499.8 L637.9,500.9 L637.1,502.6 L635.7,503.9 L635.2,503.1 L635.7,501.6 L636.8,500.0Z M441.3,318.8 L441.2,319.3 L440.9,319.9 L440.3,320.1 L439.8,319.9 L439.7,319.5 L440.3,319.1 L440.7,318.9Z M326.2,442.9 L326.1,443.5 L325.2,443.5 L324.6,443.3 L323.8,443.0 L324.0,442.4 L324.7,442.2 L325.4,442.0 L326.0,442.4Z M447.5,333.1 L447.0,333.6 L446.0,333.6 L445.1,333.4 L445.1,332.9 L445.8,332.4 L447.2,332.5Z M768.3,299.3 L768.6,299.5 L769.0,300.3 L768.8,301.2 L768.4,301.4 L767.9,300.5 L768.1,299.5Z M356.5,288.0 L356.2,288.7 L356.1,289.3 L355.3,289.6 L354.5,290.1 L354.5,289.6 L354.5,289.1 L355.2,288.4 L356.0,287.9Z M1115.6,482.5 L1114.6,482.3 L1113.2,481.7 L1113.1,481.1 L1113.6,480.9 L1115.3,481.8Z M706.9,235.7 L707.5,235.6 L707.8,236.5 L707.9,237.3 L707.5,237.9 L706.7,238.0 L706.5,236.9 L706.4,235.9Z M625.5,534.5 L626.3,534.9 L626.9,535.7 L627.1,536.5 L626.9,536.9 L626.1,536.4 L625.3,535.1Z M276.9,349.8 L276.3,350.6 L275.4,350.9 L273.7,351.4 L273.7,350.3 L273.9,349.4 L275.1,349.1 L276.2,349.2Z M421.0,238.6 L421.6,239.0 L422.1,240.0 L422.2,241.3 L422.2,242.7 L421.5,242.2 L421.1,241.5 L420.8,240.4 L420.7,239.3Z M1077.1,515.2 L1077.1,515.8 L1076.2,516.0 L1075.2,516.2 L1074.9,515.6 L1074.2,515.2 L1075.3,514.9 L1076.1,514.6 L1076.7,514.9Z M1186.1,397.2 L1185.9,397.9 L1184.9,398.7 L1183.5,399.8 L1182.1,400.1 L1182.4,399.1 L1184.3,397.9 L1185.8,396.7Z M935.5,130.7 L934.9,131.6 L932.8,131.4 L931.8,130.4 L933.3,130.0 L934.5,130.2Z M680.4,514.1 L680.5,514.8 L679.3,515.8 L678.6,516.3 L678.3,516.0 L678.3,515.2 L679.5,514.5Z M726.3,131.4 L726.1,131.7 L725.4,132.0 L724.5,132.1 L724.0,131.9 L724.2,131.7 L724.6,131.4 L725.3,131.0 L726.0,131.2Z M344.0,159.9 L345.3,161.1 L346.8,162.3 L347.4,165.0 L346.0,166.0 L344.8,166.1 L343.6,165.2 L343.0,163.3 L342.5,160.6Z M804.1,549.3 L803.4,551.1 L801.6,553.8 L800.5,553.7 L800.3,552.5 L802.7,549.2Z M330.9,255.2 L331.7,256.0 L332.1,257.2 L331.3,257.6 L330.3,257.4 L330.3,256.1Z M281.8,139.2 L282.0,140.4 L281.5,142.3 L280.7,143.5 L279.8,145.0 L279.5,143.9 L280.2,141.9 L280.9,140.4Z M439.7,93.2 L439.6,93.8 L439.4,94.5 L438.8,94.9 L438.5,94.6 L438.5,93.9 L439.1,93.0Z M463.3,519.3 L464.2,520.1 L463.2,521.5 L462.2,522.7 L460.8,523.0 L460.0,522.1 L460.9,520.8 L461.2,519.7 L462.4,518.5Z M1091.6,466.7 L1091.5,467.6 L1090.5,468.7 L1089.4,469.3 L1088.7,469.4 L1089.1,468.5 L1089.4,467.5 L1090.6,466.9Z M629.5,185.1 L629.9,185.6 L629.7,187.4 L629.2,189.7 L628.7,189.8 L628.2,190.3 L627.8,189.5 L628.4,187.1 L629.0,185.9Z M331.0,514.2 L331.7,514.0 L332.7,515.4 L333.1,516.2 L333.0,516.8 L331.9,516.3 L330.8,514.8Z M339.3,319.7 L339.5,322.5 L339.5,325.1 L339.0,328.7 L338.3,328.7 L338.4,324.9 L338.7,322.3Z M660.9,382.6 L660.4,383.9 L658.5,385.2 L656.8,386.4 L656.0,386.1 L656.8,384.9 L657.6,383.8 L659.1,383.1Z M380.5,550.9 L380.5,551.8 L380.1,552.4 L379.4,552.7 L379.0,552.2 L378.8,551.4 L379.6,550.9Z M742.8,549.2 L742.8,551.2 L743.2,552.4 L742.3,553.5 L741.4,554.3 L741.1,553.2 L741.1,551.9 L741.8,550.7Z M887.0,77.1 L886.5,77.2 L885.8,76.9 L884.8,76.4 L884.9,75.7 L885.7,75.9 L886.5,75.9 L887.0,76.6Z M467.8,474.0 L466.9,474.8 L465.8,475.1 L465.1,474.9 L465.3,474.2 L466.7,473.7Z M877.9,99.5 L878.1,100.4 L877.4,102.0 L876.6,102.2 L876.0,102.4 L876.3,101.2 L877.1,99.9Z M474.7,575.5 L475.1,576.3 L474.9,577.2 L474.3,577.9 L473.8,577.6 L473.6,576.8 L474.1,576.1Z M359.6,580.5 L360.2,580.6 L360.1,581.5 L359.9,582.2 L359.4,582.2 L359.0,582.0 L358.8,581.4 L359.0,580.6Z M697.9,503.6 L698.9,504.7 L699.4,506.2 L698.9,508.1 L697.2,507.1 L696.7,504.7Z M417.5,340.9 L418.0,341.6 L417.7,342.5 L417.0,343.1 L416.4,342.4 L416.7,341.2Z M520.2,375.9 L520.8,376.0 L520.5,377.7 L520.1,378.9 L519.6,378.0 L519.7,376.3Z M478.5,119.2 L478.9,119.8 L479.1,120.5 L479.0,121.3 L478.9,122.2 L478.6,122.0 L478.3,121.4 L478.0,120.5 L478.2,119.6Z M325.3,161.6 L325.5,162.9 L325.0,164.2 L324.5,165.8 L323.5,165.7 L322.7,165.8 L322.8,164.5 L323.2,163.3 L324.1,162.7Z M412.4,148.6 L412.2,149.3 L411.4,150.2 L410.0,150.9 L409.6,150.6 L408.4,150.9 L409.3,149.9 L410.6,149.1 L411.3,149.1Z M623.3,298.1 L623.5,298.8 L623.1,299.5 L622.6,299.9 L622.1,300.1 L621.5,299.8 L622.0,298.8 L622.6,297.9Z M468.7,280.6 L469.7,281.0 L469.7,282.7 L468.4,283.5 L467.5,284.6 L466.8,283.9 L466.6,282.8 L466.7,281.4 L467.8,280.6Z M992.1,234.2 L992.2,234.9 L990.1,236.3 L988.4,237.5 L987.1,237.7 L985.8,237.7 L987.8,236.1 L989.3,234.7 L990.7,234.5Z M514.1,443.3 L514.6,443.3 L515.3,443.4 L515.0,444.0 L514.9,444.5 L514.6,444.8 L514.0,444.7 L513.8,444.1 L513.9,443.7Z M444.9,386.6 L445.3,386.9 L445.9,387.3 L445.6,388.1 L445.0,388.6 L444.5,388.0 L443.9,387.9 L444.2,387.2 L444.5,386.8Z M771.2,380.4 L770.5,381.9 L769.4,383.7 L767.0,384.5 L766.3,383.6 L765.6,382.7 L767.6,381.0 L769.5,380.6Z M503.8,79.8 L504.2,80.0 L503.8,80.9 L503.1,81.1 L502.6,81.2 L502.3,80.9 L502.9,80.1 L503.5,79.8Z M356.8,477.7 L356.9,478.6 L355.8,480.6 L353.8,482.1 L352.6,482.1 L352.8,480.8 L354.0,478.9 L355.8,477.8Z M471.6,394.8 L472.6,396.5 L474.1,399.7 L474.2,402.2 L472.6,399.2 L471.6,396.4Z M677.6,415.0 L678.6,416.5 L678.0,419.0 L677.0,420.9 L676.0,419.3 L676.0,415.7Z M794.2,140.7 L793.1,140.6 L792.5,139.2 L791.9,138.1 L792.4,137.6 L793.5,138.2 L794.2,139.5Z M754.4,559.6 L754.6,560.8 L754.2,562.1 L753.2,563.1 L752.6,562.1 L753.4,559.9Z M896.6,110.1 L896.1,111.9 L895.4,114.4 L893.3,114.9 L891.8,114.7 L892.8,112.1 L894.9,110.3Z M508.0,314.4 L508.1,315.1 L507.7,315.8 L507.0,315.8 L506.5,315.9 L506.6,315.4 L506.7,314.7 L507.4,314.2Z M461.9,86.2 L462.2,86.8 L462.4,88.2 L461.7,89.6 L461.2,88.9 L461.2,87.8 L461.3,86.3Z M624.8,215.2 L625.2,216.4 L624.8,219.2 L623.2,219.4 L623.0,217.7 L623.8,215.8Z M420.7,321.6 L420.8,322.1 L420.5,323.0 L419.8,323.4 L419.7,322.6 L420.1,321.5Z M692.8,258.4 L693.3,259.2 L693.4,260.9 L693.4,262.1 L693.1,262.5 L692.8,261.0 L692.6,259.5Z M516.2,116.4 L516.2,117.1 L515.0,118.1 L513.9,118.2 L513.0,117.9 L513.9,116.5 L515.6,116.0Z M294.7,459.2 L294.9,460.1 L295.1,460.7 L294.9,461.7 L294.5,461.5 L294.3,460.7 L294.4,460.1Z M589.6,153.8 L589.9,154.3 L590.1,155.3 L589.7,156.6 L589.1,156.9 L588.7,156.4 L588.9,155.1 L589.1,153.4Z M646.4,426.3 L646.9,427.1 L647.3,428.7 L647.2,431.0 L646.9,432.1 L646.6,431.3 L646.2,431.0 L646.1,429.0 L646.1,427.0Z M859.3,306.4 L859.4,306.7 L858.7,307.1 L857.9,307.5 L857.3,307.3 L857.5,306.8 L857.7,306.4 L858.4,305.9 L859.0,306.1Z M600.3,97.1 L600.7,98.3 L600.6,100.0 L599.9,101.3 L599.2,101.5 L598.6,101.2 L599.1,99.6 L599.5,98.5Z M420.7,201.7 L421.1,202.5 L420.8,203.4 L420.2,203.9 L419.7,203.7 L419.4,202.9 L420.1,202.4Z M517.3,321.1 L517.7,321.4 L517.8,323.1 L517.7,324.4 L517.4,323.9 L517.1,323.1 L517.0,321.8Z M705.8,422.4 L706.1,423.0 L705.1,424.7 L704.1,425.7 L704.3,424.4 L705.2,422.9Z M532.2,335.6 L532.2,336.5 L531.8,337.5 L531.3,338.9 L530.7,339.0 L530.3,338.9 L530.3,338.1 L530.8,337.0 L531.5,335.6Z M1004.3,537.9 L1004.8,538.3 L1005.2,539.1 L1005.3,539.8 L1005.2,540.3 L1004.8,540.7 L1004.2,539.5 L1004.2,538.7Z M308.0,93.3 L310.2,97.0 L311.4,99.3 L312.4,102.3 L312.8,105.4 L311.0,103.4 L309.5,100.1 L308.3,96.7Z M806.4,451.6 L805.7,452.4 L803.0,451.9 L801.3,450.9 L800.8,449.8 L803.4,449.7 L806.2,450.6Z M467.4,191.6 L466.9,194.7 L465.2,199.5 L461.8,200.6 L461.9,196.9 L464.7,191.8Z M358.6,204.9 L358.6,206.2 L358.9,207.5 L357.9,209.0 L357.1,209.3 L356.5,208.5 L356.8,206.8 L357.7,205.4Z M342.7,183.5 L343.5,184.2 L342.7,186.2 L342.1,188.3 L340.8,189.0 L339.4,189.3 L340.0,186.9 L340.4,184.9 L341.6,184.5Z M659.1,461.2 L659.8,461.3 L659.3,462.7 L658.1,464.1 L657.2,464.1 L656.5,464.0 L656.7,462.8 L657.6,461.4 L658.9,460.4Z M399.8,466.1 L400.0,467.4 L399.3,469.9 L398.4,472.6 L397.3,474.2 L397.2,472.3 L398.0,469.5 L398.9,466.5Z M660.7,143.5 L661.5,143.6 L662.1,143.9 L663.0,144.6 L662.6,145.1 L662.1,145.4 L661.3,144.9 L660.5,144.1Z M407.6,364.8 L408.2,364.9 L408.5,366.0 L408.4,366.7 L408.1,366.9 L407.7,367.4 L407.3,366.3 L407.5,365.6Z M449.4,77.1 L450.0,78.7 L450.6,80.7 L450.1,82.5 L449.7,83.8 L449.1,82.7 L448.7,80.7 L448.7,78.0Z M481.3,182.6 L480.4,183.6 L479.8,184.2 L478.8,185.1 L477.7,185.5 L477.7,184.9 L478.2,184.2 L479.3,183.5 L480.5,182.7Z M568.3,506.6 L568.2,507.3 L567.5,508.1 L566.2,508.5 L566.6,507.3 L567.7,506.1Z M329.2,119.9 L330.2,120.8 L331.0,122.3 L331.0,123.6 L330.6,124.2 L329.6,122.8 L329.1,121.2Z M503.3,218.5 L503.7,219.2 L503.3,220.2 L502.5,221.0 L502.1,220.1 L502.5,218.8Z M656.1,268.7 L656.2,269.3 L655.7,270.2 L654.9,271.0 L654.8,270.3 L654.7,269.6 L655.5,268.6Z M614.2,541.4 L614.4,542.4 L613.5,543.5 L612.3,543.7 L612.3,542.8 L612.4,542.2 L613.2,541.2Z M779.0,332.3 L777.7,333.9 L775.5,335.7 L773.3,335.1 L774.3,333.1 L777.2,331.6Z M822.2,348.2 L822.8,349.0 L822.5,350.5 L821.2,351.7 L820.1,351.7 L820.0,350.7 L819.3,350.0 L820.0,348.6 L821.3,348.1Z M499.2,227.9 L499.8,229.0 L497.6,231.0 L495.3,231.7 L495.6,230.0 L496.4,228.8 L498.2,227.0Z M402.6,172.1 L402.9,172.8 L402.9,173.6 L402.6,174.7 L401.7,174.8 L401.7,173.5 L401.7,172.1Z M658.5,404.0 L658.4,404.9 L657.3,406.4 L656.2,406.9 L655.9,405.9 L657.7,403.8Z M627.7,436.1 L628.2,436.6 L627.9,438.1 L627.3,438.6 L626.8,438.1 L627.1,436.5Z M837.4,172.4 L838.3,172.5 L837.0,174.5 L836.1,176.7 L835.3,176.2 L834.7,176.2 L834.5,175.2 L835.3,173.1 L836.8,171.8Z M320.5,491.8 L320.3,492.5 L319.9,493.0 L319.2,493.4 L319.2,492.7 L319.9,492.0Z M485.4,161.4 L486.0,161.7 L485.9,162.5 L485.4,162.8 L484.9,162.6 L484.8,161.7Z M633.9,312.5 L633.6,313.1 L632.7,313.7 L631.4,313.5 L629.7,313.6 L629.5,312.9 L630.5,312.1 L632.3,312.2 L633.8,311.9Z M518.1,218.8 L519.5,220.4 L518.1,223.3 L516.6,224.5 L514.9,224.6 L515.3,222.0 L516.2,219.7Z M529.5,188.5 L529.9,189.1 L529.7,190.5 L529.2,191.8 L528.9,190.5 L529.1,189.2Z M892.4,510.7 L892.8,511.0 L892.3,511.9 L891.7,512.3 L891.3,512.3 L891.2,511.9 L891.3,511.2 L892.0,510.7Z M1192.6,394.7 L1193.2,395.0 L1192.8,396.4 L1192.5,398.0 L1191.5,399.0 L1190.9,398.4 L1190.7,397.3 L1191.0,395.6 L1192.0,394.4Z M777.2,169.0 L777.8,168.8 L778.9,169.8 L779.2,170.5 L778.5,170.6 L777.0,169.6Z M716.5,121.8 L715.1,122.3 L713.7,122.6 L712.4,122.1 L711.7,121.5 L712.2,120.9 L713.8,120.9 L714.8,121.3Z M774.0,236.9 L773.6,237.3 L773.1,237.7 L772.2,237.9 L771.6,237.8 L771.9,237.4 L772.2,237.1 L772.8,236.7 L773.7,236.6Z M638.8,540.1 L639.2,540.3 L638.9,541.4 L638.2,542.1 L637.7,542.6 L637.6,542.1 L637.5,541.7 L637.8,541.0 L638.3,540.1Z M560.9,265.2 L561.1,265.8 L561.1,267.3 L560.2,268.4 L559.9,267.5 L559.5,266.7 L560.3,265.5Z M687.6,375.0 L687.4,378.6 L686.2,381.8 L684.0,384.4 L683.7,381.4 L685.3,377.1Z M557.1,279.6 L557.7,281.3 L558.4,283.3 L558.1,286.7 L557.0,288.6 L556.3,286.5 L555.5,285.9 L555.8,283.4 L556.1,280.7Z M782.8,229.6 L784.0,230.9 L785.0,232.7 L785.5,234.5 L785.4,236.0 L783.7,233.6 L782.5,230.8Z M613.0,255.7 L613.5,256.6 L611.7,259.1 L609.8,261.2 L608.1,262.1 L606.9,262.1 L608.2,259.8 L609.9,257.6 L612.3,254.9Z M630.9,398.3 L631.2,398.8 L631.2,399.5 L630.5,399.8 L629.9,399.9 L629.5,399.5 L629.3,398.9 L629.8,398.4 L630.3,398.4Z M335.0,423.9 L335.3,426.5 L335.9,428.3 L335.3,431.4 L334.2,431.3 L333.6,430.1 L333.6,428.0 L334.1,426.3Z M1008.4,378.6 L1008.0,378.9 L1007.2,379.3 L1005.9,379.4 L1005.4,379.0 L1006.3,378.6 L1007.0,378.3 L1008.2,378.2Z M436.2,404.5 L436.6,404.9 L436.2,406.3 L435.4,407.3 L434.9,407.5 L434.8,406.8 L435.0,405.7 L435.7,404.7Z M418.0,340.4 L418.4,340.4 L418.9,341.0 L419.3,341.7 L419.9,343.0 L419.1,342.7 L418.5,342.4 L417.9,341.5 L417.6,340.5Z M531.2,466.3 L531.6,465.3 L531.7,468.2 L531.9,470.1 L531.9,472.5 L531.4,472.1 L530.9,470.6 L530.8,468.2 L530.8,466.1Z M461.3,305.6 L462.2,305.3 L461.6,306.8 L460.7,307.8 L460.1,308.1 L459.2,308.6 L459.3,307.5 L460.3,306.2 L461.1,304.9Z M389.2,150.2 L386.2,153.6 L383.8,155.9 L379.6,158.5 L379.5,156.6 L382.1,153.7 L386.2,150.2Z M298.5,467.3 L298.6,467.9 L297.3,468.7 L296.4,468.6 L296.1,468.2 L296.6,467.4 L298.4,466.5Z M614.6,226.6 L615.1,227.5 L614.9,230.2 L614.0,233.0 L613.4,231.7 L612.9,230.0 L613.7,226.3Z M457.7,261.6 L457.9,263.0 L457.8,264.9 L457.3,266.1 L457.0,264.7 L457.1,262.5Z M458.5,481.0 L459.2,481.1 L459.0,482.3 L458.3,483.1 L457.8,482.8 L457.4,482.6 L457.5,481.8 L457.9,481.0Z M338.9,195.0 L339.0,195.4 L338.4,196.0 L337.9,196.2 L337.3,196.5 L337.5,196.0 L337.9,195.4 L338.5,195.0Z M523.0,95.6 L523.2,95.9 L522.8,96.5 L522.6,96.9 L522.2,97.4 L522.1,97.0 L522.0,96.7 L522.3,96.2 L522.7,95.6Z M878.8,118.3 L879.3,119.1 L879.3,120.1 L878.7,121.0 L878.0,120.8 L877.5,119.9 L877.9,118.6Z M318.9,452.8 L319.6,453.4 L320.6,454.1 L322.2,456.6 L322.0,457.4 L322.4,458.9 L320.9,457.2 L319.7,454.9 L318.4,452.7Z M701.9,544.3 L701.4,545.7 L701.3,546.6 L700.5,547.4 L699.5,548.3 L699.4,547.3 L699.3,546.7 L699.9,545.6 L700.8,544.8Z M485.5,193.0 L485.1,194.3 L484.4,195.5 L483.3,196.8 L481.8,198.0 L481.7,196.8 L483.4,194.8 L484.5,193.5Z M518.2,116.4 L518.6,119.3 L518.2,123.0 L516.5,126.6 L515.3,125.8 L514.6,124.8 L514.3,121.8 L516.3,119.7Z M960.7,127.2 L962.1,127.9 L963.5,128.4 L964.8,130.3 L964.7,131.7 L963.0,130.6 L962.0,129.8 L960.4,128.3Z M334.1,529.0 L335.0,528.8 L336.5,532.1 L336.4,533.9 L334.9,532.0 L333.4,529.6Z M434.1,225.3 L433.9,226.6 L433.0,227.6 L432.2,228.3 L432.2,227.4 L433.1,226.4Z M429.2,496.7 L429.9,497.3 L430.5,498.8 L430.3,499.8 L429.9,500.4 L429.3,499.0 L429.3,498.0Z M574.8,248.7 L575.3,249.5 L574.8,250.7 L574.1,250.6 L573.6,250.2 L574.0,249.2Z M314.0,386.2 L314.7,386.1 L315.3,388.1 L315.5,390.0 L314.9,390.4 L314.2,390.0 L313.4,388.5 L313.2,386.3Z M396.1,227.7 L396.1,228.6 L396.1,229.4 L395.7,230.0 L395.4,229.9 L395.3,229.2 L395.5,228.0Z M328.0,294.1 L328.4,294.4 L328.0,295.6 L327.1,296.9 L326.1,297.4 L325.6,297.1 L326.3,295.8 L326.7,294.7 L327.4,294.4Z M815.9,107.9 L813.3,109.6 L810.3,111.1 L808.0,109.5 L809.6,107.2 L813.5,106.2Z M733.7,299.2 L732.8,300.1 L731.5,301.0 L730.1,300.6 L730.1,299.7 L731.0,298.9 L732.4,298.9Z M539.1,523.4 L539.2,524.4 L538.8,527.0 L537.6,528.0 L537.5,526.1 L538.3,523.7Z M634.2,579.5 L634.7,579.8 L634.3,580.4 L634.0,581.0 L633.4,580.8 L633.2,580.3 L633.2,580.0 L633.1,579.4 L633.7,579.0Z M321.0,427.6 L321.0,428.8 L318.8,430.8 L317.1,431.2 L316.5,430.7 L317.4,429.0 L320.0,426.9Z M1079.1,512.0 L1080.1,512.9 L1079.3,515.5 L1077.0,516.2 L1074.6,517.1 L1075.2,514.6 L1076.1,512.6 L1078.2,510.4Z M278.9,350.2 L277.0,353.0 L275.6,355.4 L273.7,355.8 L271.7,356.3 L274.0,353.4 L276.3,351.7Z M1073.5,339.6 L1072.7,341.3 L1069.9,341.9 L1068.9,341.4 L1069.3,340.4 L1071.2,339.7Z M378.7,397.4 L379.0,398.2 L378.8,399.4 L378.2,400.4 L377.6,400.3 L377.7,399.1 L377.9,397.6Z M566.5,171.6 L566.9,172.1 L566.8,173.3 L566.4,174.0 L566.0,174.6 L565.9,173.8 L565.7,173.1 L566.0,171.9Z M742.6,145.1 L742.1,145.2 L741.4,145.0 L740.7,144.7 L740.1,144.3 L740.0,143.9 L740.7,143.9 L741.7,144.4 L742.5,144.8Z M400.2,329.7 L400.2,330.3 L399.5,330.9 L398.8,331.4 L398.6,330.9 L398.9,330.3 L399.5,330.0Z M594.7,118.3 L594.8,118.8 L594.6,119.6 L594.0,119.7 L593.7,119.5 L593.9,119.0 L594.2,118.7Z M286.8,362.1 L287.3,363.2 L287.6,365.3 L286.7,368.3 L285.7,367.9 L284.9,367.5 L285.4,364.9 L285.9,362.3Z M298.8,476.5 L298.1,477.7 L296.4,479.5 L294.7,479.5 L293.2,479.4 L295.5,477.6 L297.7,476.3Z M624.8,359.3 L625.1,360.2 L625.3,362.2 L623.9,364.0 L622.5,366.0 L622.0,364.3 L623.2,361.5 L624.0,359.7Z M808.2,227.8 L809.2,228.7 L807.6,230.7 L805.9,232.2 L804.2,232.6 L803.1,231.8 L804.7,229.9 L805.2,228.2 L806.8,228.0Z M403.4,328.5 L403.6,329.0 L403.0,329.7 L402.4,330.2 L402.0,330.2 L401.8,329.9 L402.3,329.1 L402.9,328.8Z M1196.2,387.2 L1196.5,387.8 L1196.5,388.5 L1195.9,388.9 L1195.3,388.8 L1195.1,388.0 L1195.5,387.4Z M792.0,114.1 L792.5,115.2 L792.7,116.5 L792.6,118.8 L791.4,118.4 L790.4,118.2 L790.6,116.2 L791.1,114.7Z M458.7,531.4 L459.7,532.0 L458.4,535.1 L457.4,537.6 L456.2,538.2 L455.7,537.0 L456.0,534.2 L457.6,531.7Z M573.2,558.1 L573.3,558.7 L572.7,559.3 L571.9,559.6 L571.2,559.6 L570.9,559.2 L570.9,558.5 L571.9,558.0 L572.9,557.7Z M734.9,577.0 L735.2,577.9 L734.2,579.3 L732.7,580.2 L731.3,580.3 L730.1,579.8 L731.0,578.2 L732.7,577.4 L734.4,575.9Z M285.7,96.2 L286.4,96.5 L287.1,97.1 L286.9,97.6 L286.3,97.6 L285.7,96.9Z M845.0,442.7 L845.3,443.1 L845.0,443.5 L844.8,444.2 L844.3,444.1 L844.1,443.7 L843.9,443.3 L844.1,442.7 L844.6,442.7Z M818.4,115.7 L818.7,116.4 L817.7,117.3 L816.8,118.3 L816.3,117.8 L816.2,117.2 L816.9,116.5 L817.5,116.1Z M872.6,123.1 L871.9,123.3 L870.8,123.2 L869.9,122.8 L869.2,122.3 L870.0,122.2 L871.0,122.4 L872.2,122.6Z M456.6,453.4 L457.1,453.8 L456.8,454.4 L456.3,455.1 L455.7,454.5 L455.4,453.8 L455.9,453.1Z M692.1,462.5 L692.5,463.0 L692.7,463.6 L692.3,464.2 L691.8,464.4 L691.3,464.2 L691.5,463.4 L691.6,462.8Z M746.9,144.0 L747.3,144.4 L747.6,145.0 L747.5,145.9 L747.3,146.6 L746.9,146.7 L746.6,145.9 L746.5,145.1 L746.7,144.6Z M638.9,501.2 L639.4,502.2 L639.3,503.5 L639.0,504.5 L638.5,503.7 L638.5,502.3Z M290.6,327.8 L290.8,328.2 L290.7,328.8 L290.1,329.1 L289.7,328.7 L289.6,328.1 L290.1,327.5Z M787.0,196.6 L786.2,197.3 L784.9,197.6 L783.6,197.7 L782.1,197.4 L781.7,196.5 L783.4,196.0 L784.8,195.8 L786.1,196.0Z M1173.2,297.6 L1174.0,298.4 L1174.7,299.1 L1175.1,300.6 L1175.1,302.5 L1173.9,301.4 L1172.8,301.6 L1172.0,299.6 L1172.3,297.8Z M532.3,78.6 L532.6,79.6 L531.9,80.6 L531.1,80.7 L530.6,80.4 L530.4,79.5 L531.3,78.8Z M1188.0,378.0 L1187.2,378.9 L1184.8,378.7 L1182.1,378.7 L1182.9,377.8 L1184.5,377.2 L1187.5,377.1Z M590.4,186.8 L590.7,187.2 L590.5,187.8 L590.0,188.2 L589.4,188.3 L589.4,187.7 L589.5,187.1 L590.0,186.8Z M297.3,336.8 L297.8,337.5 L297.7,339.0 L297.5,340.3 L297.0,340.7 L296.7,339.9 L296.7,338.9 L296.8,337.8Z M613.9,194.8 L614.4,195.4 L614.8,196.0 L614.5,196.6 L614.0,197.3 L613.4,196.9 L613.2,196.0 L613.3,195.2Z M1120.0,543.8 L1120.7,545.4 L1120.6,547.6 L1119.7,547.6 L1118.8,547.4 L1119.3,545.6Z M348.4,547.7 L348.7,548.3 L348.1,549.5 L346.7,549.9 L345.7,550.0 L345.7,549.3 L345.3,548.5 L346.6,547.5 L348.2,546.8Z M489.3,284.0 L489.3,284.5 L489.0,285.1 L488.1,285.5 L487.0,285.9 L486.9,285.3 L487.3,284.6 L488.2,284.0 L488.9,283.9Z M370.2,290.1 L370.9,290.6 L371.3,291.2 L371.0,291.9 L370.4,292.1 L369.9,291.8 L369.4,291.3 L369.7,290.7Z M902.3,90.1 L902.6,90.5 L902.3,91.7 L901.9,93.0 L901.3,93.0 L900.9,92.7 L901.3,91.3 L901.7,89.8Z M365.5,531.1 L363.8,532.3 L362.0,533.3 L359.1,534.1 L359.9,532.9 L361.2,531.7 L364.6,530.3Z M839.6,443.3 L841.1,443.4 L839.7,446.2 L837.8,447.6 L836.6,448.2 L835.0,448.7 L835.6,446.6 L836.7,443.9 L838.4,443.7Z M318.1,524.2 L318.7,526.5 L320.1,528.4 L318.3,530.7 L317.1,532.9 L315.7,532.4 L315.4,530.1 L315.5,527.8 L316.6,526.1Z M427.0,88.6 L428.4,89.7 L429.1,92.1 L428.0,93.7 L426.7,92.2 L426.5,90.4Z M953.0,452.0 L952.2,452.8 L951.4,453.5 L950.0,454.1 L950.4,453.4 L951.0,452.8 L952.1,452.1Z M281.6,156.0 L282.5,156.4 L282.0,158.5 L281.5,160.2 L280.6,160.5 L279.4,160.6 L279.7,157.9 L280.6,155.5Z M704.8,71.3 L705.9,72.1 L706.7,72.4 L707.7,73.8 L707.7,74.4 L707.2,74.2 L706.8,74.3 L705.8,73.3 L704.8,72.0Z M791.4,439.2 L790.9,440.3 L790.3,441.0 L789.4,442.2 L788.6,442.3 L788.8,441.3 L789.4,440.2 L790.3,439.9Z M295.4,313.1 L296.0,313.7 L294.6,315.5 L293.1,316.4 L293.0,315.4 L293.2,314.2 L294.8,312.7Z M554.7,183.2 L555.2,183.2 L555.1,184.1 L555.1,185.0 L554.6,185.6 L554.1,185.6 L553.9,184.8 L553.7,183.9 L554.1,182.9Z M359.4,398.7 L361.0,398.4 L361.1,403.2 L361.0,406.4 L359.9,407.6 L358.6,407.1 L358.0,403.3 L358.4,400.3Z M360.0,384.3 L360.5,383.8 L361.3,386.0 L361.9,388.2 L361.5,389.0 L360.7,388.3 L360.0,386.3 L359.8,384.9Z M347.0,289.2 L348.8,289.3 L349.8,292.1 L348.6,293.7 L346.6,293.4 L346.1,290.6Z M410.3,471.3 L411.6,471.5 L411.2,473.7 L410.1,475.5 L409.0,475.4 L407.6,475.2 L408.3,472.8 L409.3,471.2Z M731.5,464.3 L732.4,465.6 L732.1,468.9 L730.4,470.2 L728.3,471.8 L729.0,467.8 L730.0,464.7Z M339.4,302.9 L339.8,303.2 L340.0,303.9 L339.5,304.6 L339.1,304.2 L338.8,303.7 L338.9,302.8Z M793.6,326.5 L794.9,326.6 L794.0,329.5 L793.3,333.0 L791.4,334.3 L791.4,331.0 L790.7,328.6 L792.4,325.9Z M277.9,265.8 L278.1,266.0 L277.7,266.5 L277.3,266.7 L276.6,267.1 L276.6,266.6 L276.5,266.2 L277.1,265.8 L277.5,265.8Z M403.9,133.9 L404.3,135.0 L403.3,137.8 L402.1,138.6 L401.6,137.2 L402.9,134.2Z M913.6,445.8 L914.9,446.9 L916.6,448.7 L916.5,451.4 L916.0,453.2 L914.4,452.7 L913.2,449.8 L913.0,447.3Z M593.7,545.3 L594.1,545.9 L594.2,547.3 L593.6,548.4 L593.1,548.0 L592.7,547.1 L593.1,545.7Z M1020.5,580.3 L1020.0,581.0 L1019.7,581.4 L1019.0,582.0 L1018.4,581.7 L1018.1,581.2 L1018.7,580.7 L1019.1,580.4 L1019.6,580.3Z M296.4,317.9 L296.7,318.7 L296.5,319.6 L296.1,320.1 L295.7,319.6 L296.0,318.6Z M840.1,258.4 L840.2,258.9 L839.7,259.7 L839.0,260.0 L838.1,260.6 L838.2,259.9 L838.8,258.9 L839.6,258.5Z M729.0,550.1 L729.7,550.8 L728.7,552.0 L728.1,552.7 L727.5,552.5 L727.4,551.5 L728.2,550.3Z M347.0,233.4 L346.8,234.1 L345.5,235.5 L344.4,235.4 L344.5,234.3 L346.4,233.1Z M1064.1,499.9 L1064.8,499.8 L1064.6,502.1 L1063.9,503.3 L1063.2,503.5 L1063.2,501.7 L1063.5,500.2Z M715.7,125.6 L713.8,127.1 L708.4,127.8 L705.0,126.7 L707.3,124.7 L713.4,124.6Z M597.5,176.3 L597.6,176.6 L597.4,177.3 L596.9,177.7 L596.5,177.8 L596.0,178.0 L596.1,177.4 L596.6,176.7 L597.0,176.4Z M941.4,176.8 L941.8,177.1 L941.6,177.8 L941.5,178.5 L941.1,178.2 L940.9,178.0 L940.8,177.6 L940.9,177.0Z M343.5,98.3 L343.9,98.5 L343.4,99.4 L342.9,99.7 L342.3,99.8 L342.6,98.9 L343.2,98.2Z M566.4,454.2 L565.9,454.8 L565.1,454.8 L564.3,454.6 L564.4,454.1 L564.9,453.5 L566.0,453.7Z M311.1,75.6 L310.0,77.4 L309.6,79.2 L307.6,79.7 L305.6,80.2 L306.1,78.5 L307.6,76.8 L309.5,75.6Z M570.0,91.8 L570.6,92.5 L570.7,94.2 L570.1,95.5 L569.4,96.7 L569.0,95.5 L569.0,94.0 L569.3,92.3Z M586.4,476.3 L586.4,478.0 L586.5,479.8 L585.2,482.4 L584.5,481.6 L583.5,481.8 L584.0,479.0 L585.4,477.3Z M1001.2,556.4 L999.6,555.7 L997.8,554.6 L995.8,552.8 L996.5,552.6 L996.7,551.9 L998.9,553.4 L1000.4,555.0Z M453.2,277.0 L453.7,278.1 L452.9,279.8 L451.9,280.7 L451.6,279.8 L451.4,278.9 L452.2,277.7Z M369.4,530.8 L369.9,531.1 L370.1,531.6 L370.3,532.3 L369.7,532.5 L369.2,532.0 L369.0,531.2Z M654.2,533.8 L654.5,534.3 L653.1,534.6 L651.6,534.8 L651.6,534.3 L652.1,533.9 L652.9,533.4 L654.3,533.4Z M500.4,439.0 L500.8,439.2 L500.6,440.0 L500.3,440.5 L500.0,441.0 L499.7,440.6 L499.6,440.2 L499.7,439.7 L500.0,439.1Z M1089.2,462.8 L1089.6,462.6 L1090.8,464.0 L1091.7,466.0 L1092.8,468.4 L1092.2,468.8 L1090.8,467.5 L1089.7,464.9 L1088.5,462.8Z M880.9,109.5 L881.6,109.3 L881.6,110.2 L881.5,110.8 L881.1,111.6 L880.7,110.7 L880.1,110.3 L880.6,109.8Z M754.9,553.0 L755.7,553.9 L756.6,555.8 L757.1,557.7 L757.4,559.6 L756.3,557.7 L755.5,556.1 L754.7,553.8Z M288.2,335.7 L288.6,336.0 L288.7,336.6 L288.3,337.3 L287.7,336.9 L287.7,335.8Z M275.7,194.6 L276.2,194.7 L276.0,195.6 L275.5,196.1 L274.9,196.8 L274.5,196.1 L274.6,195.1 L275.3,194.7Z M305.4,182.9 L306.8,183.7 L307.8,185.1 L307.8,186.1 L306.8,185.8 L305.3,184.3Z M465.3,390.5 L465.1,391.8 L464.5,393.1 L463.1,393.5 L462.6,393.0 L462.0,392.4 L462.8,391.3 L464.1,390.3Z M1038.6,430.8 L1038.1,432.8 L1034.1,432.2 L1032.9,430.0 L1033.3,428.7 L1035.4,427.5 L1038.7,428.9Z M420.4,530.1 L420.8,532.1 L421.0,534.3 L420.9,536.4 L420.7,539.2 L420.2,537.9 L419.6,537.2 L419.9,534.4 L419.9,531.3Z M291.4,439.8 L290.8,440.4 L290.1,440.9 L289.3,440.9 L288.8,440.9 L288.6,440.6 L288.9,440.2 L289.7,439.8 L290.4,439.9Z M673.4,396.8 L672.9,398.1 L672.0,399.6 L670.5,401.5 L669.1,402.2 L669.4,401.1 L669.9,400.0 L670.9,398.7 L672.6,396.6Z M740.6,556.1 L740.4,557.1 L739.1,558.5 L736.7,559.6 L736.2,558.9 L734.9,558.9 L735.3,557.6 L737.7,556.7 L739.3,556.1Z M542.2,302.3 L542.2,303.0 L541.8,303.4 L541.4,303.6 L540.8,303.7 L540.6,303.3 L540.7,302.7 L541.0,302.3 L541.6,302.3Z M900.3,372.6 L900.9,372.8 L901.6,373.0 L901.7,373.7 L901.6,374.3 L901.1,374.4 L900.6,373.8 L899.9,373.1Z M780.2,567.1 L779.9,567.8 L779.5,568.4 L778.8,569.0 L778.2,568.9 L778.1,568.4 L777.9,567.9 L778.8,567.5 L779.3,567.4Z M543.1,152.2 L544.0,152.7 L543.5,154.7 L542.2,156.7 L540.6,157.7 L540.0,156.6 L540.0,155.2 L541.0,153.5 L542.1,152.2Z M1175.2,342.4 L1176.0,342.8 L1176.1,343.8 L1176.0,344.6 L1175.4,344.2 L1174.9,343.2Z M426.8,221.2 L427.5,221.6 L427.9,222.8 L427.5,223.6 L426.9,224.2 L426.1,223.1 L426.1,221.5Z M332.2,537.8 L332.7,537.5 L333.0,539.0 L333.3,540.5 L332.6,539.9 L332.0,539.3 L331.6,537.7Z M624.0,363.5 L624.6,363.9 L623.8,364.9 L623.1,365.3 L622.9,364.5 L623.3,363.3Z M415.0,197.9 L415.1,198.3 L415.2,198.8 L414.7,199.4 L414.3,200.1 L414.0,199.8 L414.2,199.1 L414.3,198.5 L414.7,198.0Z M478.7,250.4 L477.9,251.2 L474.3,251.9 L472.4,251.5 L473.8,250.5 L477.5,249.9Z M470.2,551.5 L470.4,552.2 L470.2,553.5 L469.5,553.6 L468.7,554.1 L469.2,552.8 L469.6,552.1Z M1175.1,371.2 L1175.6,372.8 L1171.5,374.1 L1168.8,375.3 L1165.6,375.5 L1164.5,374.0 L1167.4,372.0 L1170.5,370.0 L1174.2,369.8Z M308.3,324.5 L308.3,325.3 L308.5,326.0 L308.0,326.6 L307.5,327.1 L307.0,327.1 L306.8,326.4 L307.3,325.5 L307.7,325.1Z M766.8,450.4 L767.4,450.9 L768.1,451.6 L767.9,452.8 L767.5,453.2 L767.2,453.3 L766.7,453.0 L766.2,452.0 L766.2,450.8Z M600.5,520.6 L600.9,521.0 L601.0,522.2 L600.8,523.4 L600.2,523.8 L599.8,523.2 L599.8,522.1 L599.9,520.8Z M400.0,444.4 L400.5,444.7 L400.4,445.6 L400.2,446.5 L399.5,446.9 L399.1,446.5 L399.0,445.9 L399.1,445.2 L399.4,444.3Z M867.0,107.0 L866.7,107.3 L865.5,106.8 L864.2,106.3 L864.2,105.8 L864.7,105.6 L865.8,105.9 L867.1,106.5Z M697.4,207.9 L697.1,208.5 L696.3,209.1 L695.7,208.8 L695.8,208.1 L696.7,207.8Z M302.8,314.8 L303.0,315.2 L302.3,316.6 L301.6,317.6 L301.4,317.2 L301.5,316.3 L302.3,314.8Z M1072.9,542.0 L1073.5,541.9 L1074.5,542.9 L1075.3,543.8 L1075.2,544.3 L1075.5,545.3 L1074.5,544.9 L1073.4,543.7 L1072.5,542.4Z M951.3,403.7 L951.7,403.9 L951.6,404.4 L951.7,405.3 L951.0,405.7 L950.4,405.3 L950.5,404.5 L950.2,403.8 L950.9,403.6Z M379.6,194.5 L380.0,195.1 L380.3,195.8 L380.2,197.0 L379.5,197.0 L378.9,196.6 L379.0,195.7 L379.0,194.8Z M427.1,126.8 L427.0,127.8 L426.5,129.4 L425.5,130.5 L425.2,129.9 L425.5,128.7 L426.4,126.6Z M624.8,363.5 L626.1,363.8 L628.1,364.7 L629.3,367.0 L629.0,368.1 L628.0,368.6 L625.7,366.9 L625.4,365.0Z M910.0,98.0 L910.2,99.0 L909.9,100.0 L909.2,100.2 L908.6,100.3 L908.6,99.4 L909.1,98.3Z M740.2,282.7 L739.8,283.5 L738.0,283.2 L736.3,283.2 L735.4,282.3 L736.7,281.7 L738.2,281.4 L739.8,281.9Z M738.2,462.6 L738.2,463.9 L738.3,465.0 L737.5,465.5 L736.9,465.5 L736.7,464.4 L737.4,463.2Z M300.3,540.9 L300.0,541.5 L299.4,542.2 L298.5,542.5 L298.1,542.4 L297.6,542.3 L297.9,541.8 L298.8,541.4 L299.4,541.1Z M295.0,299.6 L294.6,300.0 L294.1,300.2 L293.6,300.3 L293.0,300.2 L292.8,299.8 L293.2,299.3 L293.9,299.1 L294.5,299.2Z M380.7,550.5 L381.2,550.5 L381.1,552.5 L380.7,553.6 L380.3,554.5 L379.9,553.9 L379.7,552.3 L380.2,550.2Z M618.5,231.7 L619.4,232.7 L619.8,234.5 L618.9,235.2 L618.1,235.8 L617.8,234.3 L617.7,232.8Z M631.4,495.7 L632.9,498.0 L634.1,500.4 L634.8,503.8 L633.7,504.1 L632.1,501.2 L631.0,497.5Z M549.0,271.8 L549.3,272.2 L547.8,272.9 L547.0,272.9 L546.6,272.6 L547.5,271.9 L548.6,271.4Z M613.8,106.8 L614.0,107.3 L613.5,108.9 L612.8,110.9 L611.8,112.3 L611.2,112.4 L611.8,110.3 L612.6,108.6 L613.2,107.5Z M351.2,134.8 L351.5,135.1 L351.6,135.7 L351.5,136.4 L350.9,136.6 L350.3,136.2 L350.1,135.4 L350.5,134.6Z M628.8,328.6 L629.3,329.6 L630.0,332.3 L629.5,334.4 L628.9,333.5 L628.2,332.4 L628.4,329.8Z M524.6,539.6 L525.3,540.0 L525.9,541.2 L525.8,542.8 L525.1,543.4 L524.4,543.7 L523.9,542.6 L523.3,541.3 L523.8,540.0Z M937.8,81.3 L938.4,81.2 L939.4,82.1 L940.0,82.8 L940.7,83.8 L940.0,83.9 L939.4,83.9 L938.6,82.9 L938.2,82.2Z M336.6,508.1 L337.1,508.2 L337.7,509.0 L337.6,510.1 L336.9,509.7 L336.3,509.4 L335.9,508.2Z M1088.8,545.0 L1089.7,544.9 L1089.4,546.7 L1089.1,547.9 L1088.4,547.8 L1088.1,546.7 L1088.1,545.2Z M315.2,562.0 L316.3,563.3 L315.4,566.0 L314.0,566.8 L313.5,565.1 L313.6,562.6Z M703.1,451.1 L702.7,451.1 L702.3,449.7 L702.4,448.4 L702.8,448.6 L703.1,448.5 L703.3,449.5 L703.4,450.5Z M1116.0,492.7 L1115.7,493.8 L1115.4,494.7 L1114.8,495.7 L1114.0,496.3 L1113.9,495.7 L1113.7,495.2 L1114.4,493.9 L1115.4,492.6Z M1158.2,391.5 L1157.8,391.7 L1156.9,392.0 L1156.2,391.5 L1156.2,391.0 L1157.1,390.9 L1158.2,390.9Z M939.4,330.3 L939.4,330.7 L938.9,331.0 L938.1,331.2 L938.3,330.7 L938.5,330.2 L939.2,330.0Z M314.2,357.4 L314.8,357.5 L315.1,358.2 L314.9,359.0 L314.4,359.5 L313.8,359.1 L313.3,358.4 L313.8,357.7Z M767.5,338.6 L767.4,339.1 L766.2,340.4 L765.4,340.4 L765.9,339.5 L767.1,338.1Z M472.9,157.5 L470.7,161.5 L468.2,165.2 L465.6,166.6 L467.4,163.2 L469.8,159.2Z M563.4,260.4 L563.8,260.6 L563.2,262.1 L562.7,262.7 L562.1,263.1 L562.6,261.8 L562.9,260.9Z M374.6,442.7 L374.0,442.9 L373.1,442.7 L372.4,442.1 L373.1,441.7 L374.5,442.1Z M454.2,425.8 L454.7,425.8 L454.6,427.0 L454.2,428.0 L453.8,427.9 L453.6,427.6 L453.3,426.8 L453.7,425.5Z M495.8,410.3 L495.4,411.0 L494.6,411.9 L493.3,412.4 L491.9,412.6 L492.4,411.5 L493.8,410.4 L495.0,410.3Z M670.4,494.0 L670.0,495.6 L670.1,496.8 L669.0,498.1 L667.5,499.0 L667.1,497.8 L667.3,496.6 L667.7,495.0 L669.0,494.8Z M636.5,264.0 L636.6,265.2 L634.4,266.5 L632.7,266.1 L632.7,265.2 L633.2,263.7 L635.4,263.5Z M282.1,319.5 L283.8,320.1 L281.2,324.0 L278.9,326.1 L278.3,324.6 L278.8,322.3 L280.6,319.9Z M533.1,348.1 L533.2,348.3 L533.1,348.8 L532.5,349.2 L532.1,349.2 L532.0,349.1 L532.0,348.7 L532.4,348.2 L532.8,348.1Z M456.1,525.1 L456.8,526.6 L456.9,528.6 L457.1,530.5 L456.4,531.6 L455.7,531.2 L454.8,530.7 L455.1,528.5 L455.4,527.0Z M314.7,192.3 L315.1,192.6 L314.9,194.1 L314.3,194.8 L313.9,195.1 L313.5,194.9 L313.8,193.8 L314.1,192.6Z M372.4,114.8 L371.7,115.9 L370.4,117.3 L369.3,117.7 L370.1,116.5 L371.2,115.3Z M642.5,255.7 L644.0,256.1 L645.2,259.2 L645.0,260.7 L643.6,260.5 L642.2,257.3Z M1094.7,323.5 L1095.7,324.5 L1094.3,327.4 L1092.9,330.4 L1091.1,330.8 L1091.7,328.1 L1092.2,326.4 L1093.3,323.1Z M559.2,77.7 L556.2,79.6 L552.1,79.3 L550.8,77.8 L551.8,76.2 L556.3,75.7Z M768.5,345.2 L768.5,345.7 L768.3,346.3 L767.7,346.6 L767.2,346.8 L766.8,346.7 L767.1,346.1 L767.5,345.6 L768.1,345.0Z M275.0,338.0 L275.8,338.5 L275.2,339.5 L274.3,339.8 L273.9,338.9 L274.4,338.1Z M272.0,250.3 L272.4,251.0 L272.6,251.8 L272.1,252.1 L271.6,251.9 L271.3,250.8Z M452.5,233.3 L454.3,233.6 L455.9,235.3 L456.8,236.8 L455.1,236.4 L453.8,235.1Z M715.9,166.5 L715.9,167.4 L715.1,168.3 L714.1,169.0 L714.4,167.9 L715.1,167.1Z M666.5,281.3 L667.2,281.8 L667.5,282.7 L666.7,283.1 L665.8,283.0 L665.7,281.9Z M536.0,67.8 L536.8,68.9 L535.8,71.7 L534.9,73.8 L533.9,73.9 L534.3,71.3 L534.8,68.8Z M678.7,375.0 L680.4,376.2 L681.6,378.8 L681.3,379.8 L680.4,379.3 L679.4,377.5Z M744.1,106.6 L744.3,108.3 L743.7,110.1 L742.5,111.7 L741.1,112.2 L740.4,111.1 L741.6,109.0 L742.7,106.7Z M379.6,222.7 L380.3,223.1 L379.2,224.5 L378.1,224.6 L376.7,225.3 L377.0,224.2 L378.1,223.2 L379.1,222.5Z M552.3,465.5 L552.7,465.7 L552.2,467.4 L551.4,468.5 L551.3,467.7 L551.2,466.9 L551.8,465.8Z M792.9,189.6 L793.5,190.4 L793.5,191.9 L792.3,193.1 L791.3,193.6 L790.7,193.0 L789.9,192.3 L791.2,191.0 L791.9,190.2Z M763.8,190.3 L764.1,190.5 L763.0,191.4 L762.1,192.2 L761.2,192.6 L761.9,191.6 L762.5,190.9 L763.3,190.4Z M474.6,422.4 L474.8,422.9 L474.8,423.4 L474.6,423.9 L474.1,423.9 L474.0,423.3 L474.1,422.5Z M917.0,352.3 L917.5,353.4 L916.4,356.5 L915.6,357.7 L915.1,356.6 L916.1,353.0Z M471.9,212.1 L471.9,213.4 L471.8,215.2 L470.0,217.1 L468.6,217.1 L468.1,215.7 L469.2,213.5 L470.7,212.7Z M1090.2,494.0 L1086.0,494.5 L1080.4,492.0 L1078.8,488.8 L1082.6,488.6 L1086.3,490.8Z M1193.4,254.2 L1194.1,255.4 L1194.3,258.6 L1194.4,261.7 L1193.8,261.5 L1193.2,258.9 L1193.0,255.8Z M655.4,75.2 L656.0,76.4 L654.4,79.2 L652.3,80.8 L651.1,80.2 L652.6,77.6 L654.1,75.1Z M551.8,308.1 L551.6,309.0 L550.3,309.8 L549.2,310.2 L550.0,309.2 L550.8,308.5Z M683.1,549.4 L682.6,550.7 L680.9,552.4 L678.6,554.1 L678.0,553.4 L677.8,552.9 L678.2,552.0 L679.6,551.0 L681.9,549.2Z M1095.6,444.8 L1095.8,445.4 L1094.8,446.3 L1093.6,446.9 L1092.4,447.1 L1091.9,446.5 L1092.3,445.4 L1093.9,444.8 L1095.1,444.4Z M691.0,569.9 L692.0,571.7 L690.8,577.2 L689.5,579.8 L688.6,577.7 L689.4,571.3Z M432.2,306.9 L433.4,305.6 L436.5,307.4 L439.5,308.7 L441.0,310.9 L439.9,312.2 L437.5,312.3 L434.6,310.6 L432.6,308.7Z M329.2,305.5 L329.6,306.1 L328.3,307.9 L327.7,307.9 L327.4,307.4 L328.5,305.7Z M702.2,577.9 L703.3,578.6 L704.0,581.3 L704.3,583.8 L703.3,584.1 L702.2,581.8 L701.8,579.5Z M514.0,257.0 L512.7,257.9 L511.5,258.5 L509.8,259.3 L509.4,258.9 L509.4,258.3 L511.1,257.5 L512.2,257.3Z M777.4,104.9 L777.2,105.5 L776.2,106.7 L773.7,106.7 L772.0,106.5 L771.5,105.6 L773.6,104.7 L775.4,104.3 L777.4,104.1Z M972.2,444.4 L970.8,445.5 L969.0,446.2 L967.1,445.7 L967.2,444.4 L968.6,443.3 L970.5,443.7Z M405.0,275.6 L405.4,276.2 L405.9,276.9 L405.5,277.7 L405.0,277.4 L404.4,277.0 L404.6,276.2Z M319.9,370.3 L321.3,370.4 L322.7,372.9 L322.8,375.4 L322.1,376.4 L320.9,376.0 L319.9,374.0 L319.0,371.4Z M390.5,575.5 L391.1,575.3 L391.0,576.7 L390.6,577.9 L390.0,578.3 L389.9,577.3 L389.8,576.4 L390.2,575.8Z M683.2,114.5 L684.2,115.2 L684.0,117.3 L682.9,117.9 L682.1,117.9 L682.0,116.6 L682.1,114.9Z M662.2,547.9 L662.7,548.3 L663.1,549.3 L662.9,550.2 L662.7,550.8 L662.4,551.2 L661.9,550.7 L661.6,549.5 L661.8,548.5Z M534.1,363.8 L534.0,364.2 L533.3,364.9 L532.2,365.8 L531.6,365.6 L531.3,365.3 L532.1,364.6 L532.7,363.7 L533.5,363.8Z M311.3,250.3 L311.9,250.4 L311.7,251.4 L311.1,252.2 L310.4,252.2 L310.3,251.5 L310.2,250.7 L310.8,250.0Z M724.6,463.5 L723.1,463.6 L721.8,463.2 L721.2,462.2 L722.2,461.9 L723.4,462.5Z M616.2,546.6 L613.9,547.7 L609.6,547.7 L608.7,546.7 L610.1,545.9 L613.9,545.6Z M421.8,83.6 L422.4,84.4 L422.9,85.3 L422.8,85.8 L422.3,85.5 L421.9,84.5Z M481.2,292.7 L481.4,293.2 L480.5,294.7 L479.5,295.4 L479.4,294.9 L479.6,294.0 L480.6,293.0Z M398.2,72.9 L398.9,73.7 L399.2,75.0 L399.0,75.9 L398.7,76.1 L398.2,76.3 L397.7,75.1 L397.7,73.6Z M344.1,264.0 L344.2,264.4 L344.4,265.1 L343.8,265.8 L343.2,266.0 L343.0,265.4 L343.4,264.6 L343.7,264.0Z M578.6,448.8 L579.1,449.6 L579.2,450.3 L578.5,450.8 L577.9,450.2 L578.0,449.5Z M388.9,204.6 L388.6,206.9 L386.9,209.9 L385.3,211.2 L386.0,208.9 L387.2,206.0Z M631.4,400.2 L632.8,400.9 L632.0,404.1 L629.9,406.9 L628.3,405.4 L628.8,402.5 L630.1,400.5Z M786.4,150.5 L787.4,151.8 L787.0,154.8 L786.2,156.6 L785.0,159.0 L784.1,157.2 L784.1,154.3 L785.1,151.7Z M540.3,86.6 L540.7,86.9 L541.2,87.7 L541.2,88.8 L541.2,89.6 L540.9,89.8 L540.4,89.4 L539.9,88.0 L539.9,86.8Z M411.3,246.1 L412.5,248.7 L410.7,252.1 L409.3,254.7 L406.9,255.5 L407.7,251.3 L408.8,247.5Z M406.9,455.7 L406.8,457.1 L405.3,458.2 L404.3,458.6 L403.9,457.7 L405.5,456.4Z M280.4,125.0 L281.9,128.1 L282.9,131.2 L282.7,133.7 L281.9,134.6 L280.4,132.1 L280.1,128.1Z M671.4,112.9 L671.5,113.7 L670.7,114.9 L669.8,115.5 L668.9,115.8 L669.2,114.8 L669.5,113.9 L670.4,113.5Z M1187.4,363.4 L1187.9,363.9 L1187.6,364.8 L1186.9,365.3 L1186.2,365.1 L1186.0,364.2 L1186.8,363.6Z M469.8,133.4 L470.1,133.6 L469.6,134.6 L468.8,135.8 L467.8,136.7 L468.2,135.6 L468.2,135.1 L468.7,134.0 L469.5,133.4Z M418.5,506.7 L418.3,507.5 L417.6,508.3 L417.0,508.4 L417.1,507.7 L417.6,506.9Z M770.2,476.9 L769.7,477.6 L767.9,478.1 L766.1,478.2 L765.5,477.7 L766.8,477.2 L767.8,477.0 L769.1,476.7Z M413.0,298.6 L413.4,299.9 L411.3,303.8 L409.0,305.5 L409.6,302.4 L411.6,298.2Z M465.2,428.6 L465.2,429.7 L465.1,430.9 L464.3,431.8 L463.8,431.8 L463.4,431.3 L463.4,430.2 L464.3,429.1Z M710.9,362.7 L709.8,362.6 L708.8,362.2 L708.6,361.5 L708.1,360.5 L709.5,361.0 L710.3,361.8Z M418.5,85.5 L416.3,87.3 L412.0,88.8 L409.9,88.4 L407.1,88.0 L410.9,85.9 L415.3,85.3Z M552.5,500.5 L552.5,501.1 L551.8,502.0 L550.9,502.6 L550.5,502.1 L551.0,501.2 L551.8,500.5Z M646.0,105.1 L646.3,104.7 L646.7,106.0 L646.9,107.1 L646.8,107.8 L646.6,108.2 L646.1,107.5 L646.0,106.2 L645.7,105.0Z M466.0,538.8 L465.6,540.3 L463.0,542.1 L460.6,543.0 L459.5,542.7 L458.9,541.8 L461.7,540.0 L464.6,538.4Z M349.8,487.1 L352.0,488.4 L354.7,491.4 L354.6,492.7 L353.2,492.2 L351.3,489.7Z M660.8,186.9 L660.8,187.5 L660.0,187.7 L659.0,187.8 L658.8,187.1 L659.6,186.5 L660.4,186.5Z M1099.0,292.1 L1098.7,292.8 L1097.7,293.9 L1096.3,294.5 L1095.4,294.7 L1095.6,294.0 L1096.8,292.6 L1098.7,291.8Z M445.9,189.6 L446.8,189.7 L447.0,190.5 L446.9,191.2 L446.1,191.2 L445.9,190.4Z M652.0,68.5 L652.9,68.4 L654.1,70.7 L653.8,71.7 L653.8,73.2 L652.5,71.3 L651.9,69.6Z M612.8,310.7 L613.0,311.4 L612.9,312.0 L612.6,312.6 L612.0,312.5 L611.8,311.7 L612.1,310.9Z M463.4,233.7 L463.7,234.4 L463.7,235.5 L463.3,235.9 L462.9,235.5 L463.0,234.5Z M422.7,324.5 L422.9,325.2 L422.8,326.3 L422.4,327.3 L421.9,327.5 L422.1,326.1 L422.2,325.0Z M533.0,79.9 L533.7,80.6 L533.7,83.2 L533.0,85.0 L532.5,87.2 L531.6,87.8 L531.2,85.7 L531.8,83.2 L532.3,81.8Z M545.0,573.7 L545.0,574.7 L544.9,575.5 L544.1,575.5 L543.6,575.0 L544.0,573.9Z M419.0,491.1 L419.9,491.4 L419.6,493.8 L418.9,496.0 L417.9,497.2 L417.2,496.3 L417.0,495.1 L417.1,493.2 L418.1,492.5Z M626.1,111.3 L626.3,112.1 L626.3,113.0 L626.1,113.7 L625.9,114.7 L625.6,114.5 L625.4,113.8 L625.4,112.8 L625.7,112.0Z M395.8,314.8 L396.5,315.8 L396.5,317.3 L396.0,318.3 L395.3,317.5 L395.1,315.8Z M725.0,191.9 L724.2,193.7 L722.0,196.0 L720.7,195.3 L720.5,193.8 L723.2,192.0Z M482.2,386.8 L482.6,387.1 L481.8,387.8 L481.1,388.7 L480.3,388.8 L480.2,388.3 L480.2,387.7 L481.0,386.8 L481.7,386.8Z M1117.0,516.7 L1117.3,515.5 L1120.3,516.9 L1122.1,518.9 L1122.9,520.6 L1121.6,521.1 L1118.7,519.3 L1116.0,517.3Z M409.8,165.7 L409.6,166.2 L409.5,166.7 L408.8,167.3 L408.3,167.3 L408.0,167.2 L408.1,166.7 L408.8,166.1 L409.3,165.9Z M632.2,321.3 L632.6,321.4 L633.0,323.4 L633.0,325.9 L632.7,327.5 L632.3,326.5 L631.6,326.5 L631.7,323.6 L631.8,321.5Z M690.9,498.5 L691.2,499.4 L690.7,500.6 L690.0,500.7 L689.7,500.2 L690.2,499.3Z M720.0,271.7 L721.4,273.6 L722.2,277.2 L720.4,280.1 L718.2,280.6 L718.1,276.5 L718.1,273.0Z M739.7,131.7 L738.8,132.5 L738.5,133.2 L737.5,133.3 L736.1,133.9 L735.6,133.4 L736.5,132.4 L737.8,131.8 L738.8,131.6Z M973.2,108.4 L973.4,108.8 L973.5,109.3 L973.2,109.8 L972.8,110.3 L972.4,110.0 L972.1,109.6 L972.4,108.9 L972.8,108.7Z M585.7,455.5 L586.0,457.1 L584.5,459.3 L583.0,461.0 L582.2,460.4 L582.1,458.4 L584.2,455.5Z M867.9,251.7 L866.7,252.5 L866.0,253.1 L864.6,253.4 L863.7,253.2 L864.7,252.5 L865.6,252.0 L867.2,251.4Z M559.7,522.1 L560.2,522.8 L560.5,524.3 L560.0,525.7 L559.2,526.1 L558.7,524.3 L559.1,522.6Z M730.3,472.5 L730.7,472.7 L730.6,473.7 L730.4,474.7 L729.9,474.1 L730.0,472.8Z M933.9,92.1 L935.4,91.5 L937.0,94.1 L938.4,95.9 L938.2,97.5 L937.7,99.2 L935.8,97.2 L933.8,95.9 L933.3,93.6Z M500.5,354.9 L500.1,355.7 L498.8,356.5 L497.5,356.5 L497.1,355.9 L498.0,354.8 L499.7,354.6Z M452.1,175.4 L452.4,176.3 L451.5,177.2 L450.8,177.0 L450.7,176.3 L451.2,175.7Z M786.8,231.3 L786.3,232.5 L785.4,233.9 L784.5,234.1 L784.4,233.2 L785.8,231.4Z M504.7,144.9 L504.6,146.2 L501.6,147.3 L498.6,148.7 L498.1,147.5 L499.3,146.3 L500.6,144.8 L502.8,144.8Z M626.1,263.6 L627.0,264.4 L627.7,265.7 L628.1,267.3 L627.5,267.3 L626.7,266.3 L626.5,265.0Z M550.3,176.9 L550.4,177.7 L550.5,178.5 L550.1,180.0 L549.5,180.8 L549.3,180.1 L549.2,179.5 L549.4,178.3 L549.9,177.1Z M751.8,99.2 L752.2,99.1 L752.9,99.3 L753.5,99.7 L753.5,100.2 L753.4,100.5 L752.9,100.6 L752.4,100.1 L752.2,99.8Z M1114.2,432.1 L1114.0,432.6 L1113.3,432.5 L1112.8,432.2 L1112.5,431.7 L1112.8,431.3 L1113.6,431.5 L1113.9,431.7Z M718.5,147.2 L718.3,148.1 L718.1,148.8 L717.6,149.6 L717.1,149.8 L716.9,149.3 L717.4,148.4 L717.9,147.5Z M338.9,215.7 L338.7,217.1 L336.8,219.0 L335.0,220.0 L334.5,219.4 L335.3,217.7 L337.3,216.6Z M522.3,321.2 L522.5,322.5 L521.6,324.3 L520.3,324.3 L519.9,323.1 L521.0,321.1Z M415.5,450.5 L414.0,451.4 L411.0,452.0 L408.3,451.9 L406.9,451.4 L407.7,450.6 L410.8,450.1 L412.7,450.4Z M481.8,276.4 L482.2,277.1 L482.1,278.6 L482.0,280.2 L481.5,279.5 L481.4,278.5 L481.3,276.8Z M753.3,303.5 L754.4,302.3 L757.7,304.0 L760.4,306.3 L761.6,308.7 L759.1,308.5 L757.8,308.9 L754.7,307.7 L753.1,305.1Z M459.8,138.0 L460.2,139.1 L460.4,140.6 L459.8,141.7 L459.1,141.7 L458.9,140.3 L459.0,138.5Z M530.7,206.9 L531.6,207.0 L531.1,208.2 L530.5,208.8 L530.1,208.4 L529.9,207.8 L530.0,206.5Z M454.7,325.4 L454.6,326.6 L454.9,327.7 L453.7,328.8 L452.7,329.9 L451.8,329.8 L452.3,328.1 L452.5,326.4 L453.8,325.8Z M568.2,412.4 L568.6,412.9 L568.8,413.6 L568.5,414.2 L568.4,414.7 L568.1,414.6 L567.9,414.2 L567.7,413.6 L568.0,413.2Z M731.7,147.7 L732.9,146.6 L732.4,149.7 L731.5,151.7 L730.8,152.5 L730.1,153.0 L729.7,151.7 L730.2,149.2 L731.1,146.5Z M316.4,320.9 L317.2,321.0 L317.1,322.7 L316.6,323.6 L316.0,324.8 L315.6,323.7 L315.1,322.5 L315.8,321.4Z M320.1,344.9 L319.9,345.4 L317.9,346.5 L315.0,347.8 L315.9,346.7 L317.3,345.6 L319.4,344.8Z M747.1,164.8 L747.7,165.5 L748.2,167.1 L748.1,168.4 L748.0,169.8 L747.4,168.5 L746.9,167.4 L746.6,165.4Z M367.8,531.5 L368.1,533.1 L367.1,535.9 L366.1,537.6 L364.9,539.8 L364.1,539.6 L364.6,537.3 L365.1,534.8 L366.4,532.9Z M779.9,187.2 L781.1,189.8 L781.7,192.8 L782.2,196.9 L781.0,197.4 L779.8,193.4 L779.3,189.4Z M389.1,304.0 L389.6,304.9 L389.6,307.0 L389.0,307.8 L388.6,307.9 L388.3,306.8 L388.7,305.6Z M729.6,333.9 L728.4,334.8 L726.6,335.3 L725.3,335.3 L726.5,334.5 L728.0,334.0Z M488.4,100.9 L489.1,101.4 L487.3,103.6 L485.0,105.4 L483.9,105.4 L483.7,104.4 L485.9,102.2 L487.7,100.7Z M433.4,103.1 L433.0,103.9 L433.0,104.4 L432.4,105.1 L431.8,105.3 L431.3,105.1 L431.5,104.4 L432.2,103.8 L432.7,103.6Z M1159.9,266.8 L1160.1,267.2 L1160.2,267.9 L1159.7,268.6 L1159.3,269.2 L1158.8,269.6 L1159.1,268.4 L1159.3,267.7 L1159.6,266.5Z M654.6,90.4 L654.9,91.0 L654.8,91.7 L654.6,92.5 L654.2,92.1 L653.7,91.7 L654.0,90.7Z M800.1,427.5 L800.2,427.9 L799.9,428.6 L798.9,428.9 L798.4,428.6 L798.4,428.2 L798.2,427.7 L799.1,427.4 L799.7,427.4Z M662.7,457.1 L662.8,459.2 L663.0,461.2 L661.9,463.1 L660.7,465.2 L660.0,463.8 L660.7,460.6 L661.6,457.8Z M318.8,360.5 L318.8,362.6 L318.6,364.4 L317.9,366.4 L316.5,368.2 L315.6,367.3 L315.2,365.7 L316.5,363.8 L317.3,361.1Z M555.3,456.6 L556.4,456.7 L556.9,458.4 L556.7,459.8 L555.4,459.2 L554.4,457.5Z M1077.6,450.2 L1077.9,451.0 L1077.5,452.4 L1076.8,452.3 L1076.6,451.8 L1077.0,450.6Z M784.5,85.1 L785.4,85.0 L788.0,86.5 L790.1,88.1 L789.8,88.5 L789.7,89.0 L787.3,87.7 L785.0,86.1Z M698.3,88.1 L698.8,88.3 L698.8,89.5 L698.5,90.5 L698.0,91.8 L697.4,91.2 L697.1,89.4 L697.8,88.4Z M536.3,295.9 L536.3,296.8 L535.7,298.0 L535.1,298.1 L534.8,297.6 L535.5,296.0Z M695.5,573.3 L696.0,573.5 L696.4,574.1 L696.6,574.8 L696.8,575.5 L696.3,575.4 L695.9,575.4 L695.6,574.6 L695.1,573.6Z M500.2,175.2 L499.9,176.8 L499.3,178.5 L497.7,179.7 L495.7,181.7 L495.6,180.3 L495.9,178.8 L497.4,177.2 L498.9,175.5Z M454.0,573.0 L454.4,573.0 L454.3,573.7 L454.2,574.4 L453.8,574.8 L453.5,574.3 L453.4,573.6 L453.6,573.0Z M1200.7,371.7 L1201.8,373.1 L1199.1,377.2 L1196.8,378.4 L1194.7,378.8 L1195.7,375.1 L1198.7,372.3Z M444.1,108.3 L444.7,108.9 L444.3,109.7 L443.9,110.7 L443.3,110.2 L443.1,109.5 L443.3,108.6Z M318.7,189.2 L319.1,189.7 L319.4,191.2 L319.1,192.1 L318.6,191.6 L318.5,189.8Z M876.6,543.4 L876.5,544.2 L876.6,544.8 L876.0,545.6 L875.4,545.5 L875.2,544.9 L875.6,544.2 L876.0,543.7Z M506.2,364.8 L506.2,365.8 L504.1,367.0 L503.1,366.0 L503.8,364.9 L505.4,364.1Z M321.1,324.8 L320.0,326.3 L317.3,327.3 L315.0,327.7 L317.2,326.2 L319.0,325.2Z M408.3,418.0 L408.9,418.1 L409.3,419.6 L409.6,420.9 L409.3,421.7 L408.9,422.3 L408.4,421.0 L408.0,419.9 L407.9,418.4Z M620.4,288.6 L620.9,290.1 L619.0,292.8 L617.5,294.4 L615.3,296.2 L615.8,293.6 L617.0,291.5 L618.7,289.1Z M1169.6,375.5 L1169.0,376.2 L1167.7,376.3 L1166.8,376.3 L1167.4,375.8 L1168.7,375.3Z M347.8,412.3 L347.9,413.3 L346.2,414.1 L344.6,414.1 L343.3,414.1 L342.7,413.3 L343.8,412.4 L345.4,411.6 L347.1,411.6Z M591.7,284.9 L592.0,285.7 L592.2,287.0 L591.6,288.7 L590.6,289.6 L590.2,288.2 L590.4,286.6 L590.9,284.3Z M590.6,94.7 L590.2,95.8 L588.9,97.1 L587.9,97.5 L587.4,97.4 L588.3,96.3 L589.2,95.5Z M557.9,309.1 L558.0,310.3 L557.3,312.5 L555.9,314.3 L555.7,312.9 L555.8,311.6 L556.8,309.7Z M416.2,120.8 L418.7,123.6 L420.4,126.7 L421.5,130.8 L418.7,128.1 L416.1,123.8Z M425.4,420.7 L425.1,420.9 L424.6,421.0 L424.0,421.0 L423.8,420.7 L423.6,420.4 L424.1,420.1 L424.8,420.1 L425.4,420.3Z M427.0,511.2 L426.8,512.4 L425.8,513.5 L424.7,513.9 L424.2,513.4 L424.8,512.4 L425.9,511.3Z M704.3,537.0 L703.4,537.7 L703.0,538.4 L701.9,538.3 L701.3,538.2 L700.9,537.9 L701.6,537.4 L702.4,537.0 L703.0,537.1Z M697.8,497.2 L698.5,497.6 L698.2,499.2 L698.0,500.5 L697.4,500.8 L696.9,500.2 L696.8,499.0 L697.2,498.1Z M790.4,281.4 L791.7,282.8 L789.8,286.9 L787.8,289.2 L786.7,288.1 L786.2,285.5 L788.5,282.7Z M566.3,296.7 L565.9,297.6 L564.4,298.6 L563.2,298.5 L563.6,297.4 L565.3,296.6Z M564.7,92.2 L565.6,92.0 L565.8,93.3 L565.1,93.7 L564.3,93.5 L564.3,92.7Z M440.8,98.4 L441.0,98.8 L440.9,99.6 L440.4,99.8 L440.1,99.7 L440.1,99.2 L440.4,98.5Z M407.4,292.4 L406.8,294.8 L405.2,298.1 L404.3,298.5 L403.9,297.6 L405.8,294.3Z M295.6,238.3 L296.2,238.4 L296.8,238.8 L296.8,239.7 L296.1,240.1 L295.5,239.9 L295.3,239.3 L294.9,238.6Z M384.3,179.7 L384.2,181.0 L382.7,183.2 L381.1,184.9 L380.8,184.1 L381.8,182.3 L383.1,180.2Z M615.0,79.9 L615.2,80.7 L614.1,82.1 L612.5,83.9 L611.8,83.2 L611.0,82.6 L612.7,80.7 L614.4,79.2Z M560.5,463.0 L559.7,463.8 L557.7,464.2 L556.5,463.9 L557.6,463.1 L559.4,462.7Z M756.1,366.1 L756.7,366.6 L756.5,367.9 L756.0,369.2 L755.4,368.6 L754.9,367.8 L755.4,366.5Z M368.6,112.0 L368.4,112.5 L367.6,112.7 L367.1,112.3 L366.4,111.9 L366.7,111.4 L367.6,111.5 L368.4,111.5Z M557.2,393.2 L557.7,394.1 L558.0,395.5 L557.9,397.0 L557.4,399.0 L556.3,399.6 L555.8,397.3 L555.7,395.2 L556.3,393.3Z M642.5,178.0 L643.0,178.7 L643.5,179.2 L643.4,180.2 L643.1,180.6 L642.7,180.5 L642.3,180.1 L642.3,179.4 L642.3,178.7Z M399.3,84.7 L399.7,84.8 L399.5,85.8 L399.1,86.2 L398.7,86.4 L398.7,85.6 L398.9,84.8Z M1107.6,434.6 L1107.5,435.5 L1106.3,436.7 L1104.9,437.1 L1104.1,436.5 L1105.2,435.2 L1106.9,434.2Z M584.9,365.7 L585.7,366.1 L585.4,367.9 L584.7,368.3 L584.1,367.9 L584.3,366.4Z M689.8,458.9 L691.3,460.9 L690.3,466.5 L687.9,467.3 L686.9,464.8 L687.3,459.3Z M571.3,225.9 L571.8,226.7 L572.2,228.0 L571.7,228.9 L571.1,228.7 L570.9,227.8 L570.7,226.4Z M739.3,333.7 L739.4,334.1 L739.2,334.6 L738.8,335.1 L738.1,335.5 L737.7,334.9 L737.5,334.2 L738.4,333.9 L738.9,333.1Z M760.3,408.8 L760.7,410.8 L759.8,413.7 L758.4,415.7 L757.9,413.6 L758.8,410.1Z M442.3,440.0 L442.6,440.7 L441.3,441.9 L440.4,442.6 L439.0,442.9 L440.2,441.1 L441.4,440.2Z M326.4,88.0 L326.2,89.1 L325.5,90.3 L324.5,92.0 L324.0,91.8 L324.0,91.0 L324.5,89.6 L325.7,88.2Z M516.7,302.4 L516.1,303.2 L514.0,304.1 L512.7,304.7 L511.0,305.3 L510.3,305.1 L511.8,304.0 L513.7,303.3 L515.9,302.3Z M698.4,294.0 L698.8,294.5 L699.2,295.3 L698.8,296.2 L698.5,297.7 L698.0,296.7 L697.1,296.7 L697.1,295.0 L697.6,293.7Z M825.7,574.8 L825.8,575.1 L825.6,575.7 L824.9,576.1 L824.2,576.5 L824.2,576.2 L824.3,575.7 L824.8,574.9 L825.4,574.8Z M413.4,364.9 L413.6,365.8 L413.4,367.4 L412.4,368.9 L411.8,369.0 L410.9,369.0 L411.9,366.8 L412.8,364.3Z M576.2,413.2 L576.8,413.7 L577.3,415.3 L577.3,416.8 L576.7,416.5 L576.1,415.5 L575.7,413.7Z M442.1,379.7 L442.4,380.1 L442.6,381.4 L442.4,382.4 L442.1,382.7 L441.6,381.6 L441.6,379.7Z M456.4,432.5 L456.5,433.0 L455.9,433.5 L455.3,433.7 L455.0,433.6 L454.5,433.5 L454.8,433.1 L455.3,432.7 L455.8,432.5Z M282.8,495.0 L283.7,495.3 L283.5,497.3 L282.4,498.8 L281.5,498.3 L281.1,496.8 L282.0,495.2Z M509.4,200.6 L509.8,201.1 L509.8,202.2 L508.8,202.2 L508.4,201.4 L508.9,200.8Z M590.3,72.4 L589.7,73.0 L589.0,73.5 L588.1,73.8 L587.5,73.7 L588.1,73.2 L588.6,72.8 L589.5,72.4Z M455.0,409.1 L455.4,412.9 L456.7,414.8 L455.8,419.2 L454.0,419.5 L452.9,419.1 L451.1,418.6 L452.5,414.6 L453.5,412.6Z M603.6,248.1 L603.6,249.0 L602.6,249.6 L601.7,249.7 L601.5,248.7 L602.8,248.1Z M533.7,485.5 L534.3,485.7 L533.7,486.7 L533.3,487.3 L532.7,488.1 L532.5,487.6 L532.2,487.1 L532.6,486.2 L533.2,485.1Z M317.2,206.2 L317.1,207.7 L316.7,208.9 L316.1,210.1 L316.1,208.9 L316.5,207.1Z M327.9,123.4 L328.1,123.6 L328.1,124.1 L328.2,124.8 L327.9,125.3 L327.6,124.9 L327.5,124.5 L327.4,124.0 L327.5,123.3Z M850.7,167.5 L850.6,168.3 L849.7,169.4 L848.8,169.7 L848.5,169.2 L848.9,168.4 L849.8,167.7Z M453.0,282.2 L453.7,282.3 L454.6,282.6 L455.5,283.7 L455.4,284.5 L454.5,284.3 L453.7,283.5 L452.6,282.7Z M649.6,177.3 L650.4,177.1 L649.6,178.5 L649.1,179.9 L648.4,179.9 L648.0,179.8 L648.2,178.9 L648.5,177.8 L649.2,177.5Z M1091.8,438.9 L1093.1,439.5 L1090.3,442.8 L1088.1,443.6 L1086.3,443.7 L1088.4,440.7 L1090.8,438.3Z M562.5,345.2 L562.5,345.6 L562.3,346.0 L562.0,346.4 L561.6,346.5 L561.5,346.3 L561.4,346.0 L561.8,345.5 L562.3,344.9Z M664.6,89.8 L664.8,91.3 L664.2,93.7 L662.6,95.7 L662.1,93.5 L663.3,90.4Z M469.3,374.5 L470.0,374.6 L468.9,377.4 L467.5,378.5 L465.9,380.5 L466.8,378.1 L467.3,376.5 L468.9,373.9Z M501.6,67.5 L503.4,69.6 L505.3,72.0 L504.3,72.8 L503.2,72.5 L502.0,70.0Z M326.8,104.3 L327.5,104.5 L328.2,104.9 L328.4,105.6 L328.4,106.0 L327.9,106.0 L327.4,105.6 L326.9,105.0Z M534.7,441.1 L535.8,442.5 L536.2,447.0 L535.4,449.2 L534.3,447.4 L534.0,442.8Z M719.0,207.5 L718.3,209.2 L717.1,211.2 L715.2,211.2 L714.3,211.1 L714.2,210.3 L715.0,208.6 L717.5,207.3Z M590.3,525.1 L590.3,526.9 L588.9,529.7 L587.2,530.5 L585.2,532.2 L585.5,530.3 L586.6,528.0 L588.6,525.6Z M485.8,202.7 L485.9,203.2 L485.1,204.5 L484.0,204.9 L483.5,204.8 L483.7,204.2 L484.2,203.5 L485.0,202.8Z M552.9,281.4 L550.0,284.8 L546.1,288.2 L543.3,288.3 L545.4,285.5 L548.9,282.6Z M476.1,418.1 L476.2,419.3 L476.0,420.2 L475.6,420.6 L475.1,420.4 L475.6,419.1Z M494.1,253.7 L495.3,255.1 L496.4,256.1 L496.5,258.1 L495.8,258.7 L495.2,259.0 L494.2,258.9 L493.2,256.9 L494.1,255.9Z M413.2,265.8 L413.3,266.6 L411.4,267.1 L410.0,267.1 L409.3,266.7 L409.8,266.0 L411.0,265.0 L412.8,265.2Z M379.0,196.1 L379.8,196.1 L380.4,198.3 L380.0,200.1 L380.1,202.9 L379.2,201.2 L378.6,200.3 L378.2,198.6 L377.9,195.8Z M316.8,530.3 L317.4,531.3 L317.9,532.2 L317.9,533.0 L317.6,533.2 L316.9,532.7 L316.7,531.3Z M354.5,386.2 L354.7,386.5 L354.9,387.1 L354.6,387.7 L354.3,387.9 L354.0,387.8 L353.9,387.0 L354.1,386.3Z M493.8,304.0 L494.0,304.9 L493.5,306.8 L492.6,307.9 L491.7,309.7 L491.1,309.7 L491.6,307.8 L492.3,306.5 L493.1,304.4Z M553.4,433.5 L553.5,434.1 L550.4,435.0 L547.1,435.5 L548.1,434.5 L549.8,433.5 L553.1,432.9Z M1066.7,471.4 L1066.0,472.6 L1065.2,473.5 L1064.0,474.7 L1063.5,474.4 L1063.6,473.7 L1064.3,472.5 L1065.7,471.4Z M300.4,408.8 L299.6,410.1 L297.1,410.3 L295.5,409.8 L295.9,408.9 L296.9,408.1 L299.3,407.8Z M301.8,212.7 L302.2,213.0 L302.0,214.2 L301.3,215.5 L300.4,216.4 L300.2,215.7 L299.9,215.0 L300.6,213.5 L301.4,212.6Z M1169.8,371.5 L1169.6,372.0 L1169.4,372.5 L1168.8,372.6 L1168.4,372.3 L1168.3,371.9 L1168.5,371.5 L1168.9,371.3 L1169.5,370.9Z M667.1,373.2 L668.1,373.1 L668.2,375.6 L667.8,378.7 L666.6,379.4 L665.8,377.9 L666.0,375.4 L666.0,372.2Z M698.5,86.6 L699.7,87.1 L699.7,89.3 L699.0,91.5 L697.4,91.4 L696.8,89.2 L696.9,86.3Z M490.9,335.6 L491.1,336.4 L490.7,338.0 L490.0,339.4 L489.3,340.3 L488.4,341.1 L489.2,338.9 L489.5,337.7 L490.2,335.9Z M751.0,366.6 L751.7,368.1 L751.8,370.0 L751.7,371.9 L751.1,372.1 L750.6,371.6 L750.2,370.0 L750.2,367.4Z M586.4,373.7 L586.4,374.3 L585.8,375.6 L584.9,376.7 L584.6,376.6 L584.3,376.3 L584.9,375.1 L585.7,374.3Z M801.1,206.8 L800.6,208.3 L798.8,209.7 L797.8,208.7 L797.6,207.5 L799.5,206.9Z M786.7,418.7 L786.9,419.0 L786.4,419.9 L785.8,420.8 L785.5,420.5 L785.0,420.8 L785.0,420.2 L785.6,419.2 L786.2,418.8Z M287.1,214.9 L287.4,215.8 L287.5,216.7 L287.3,218.0 L286.7,217.6 L286.5,216.7 L286.7,215.7Z M968.1,92.6 L967.7,93.4 L967.0,94.3 L965.9,94.3 L965.9,93.6 L966.1,92.8 L967.3,92.2Z M812.8,68.4 L814.2,69.1 L815.7,69.6 L816.2,71.4 L816.1,72.6 L815.0,73.3 L813.6,71.3 L813.1,69.9Z M808.4,95.9 L808.1,96.8 L807.0,96.9 L805.7,96.9 L806.4,95.8 L807.7,95.3Z M376.2,142.7 L376.7,143.6 L376.5,145.0 L375.4,145.9 L374.5,145.5 L373.8,144.8 L374.5,143.7 L375.2,142.0Z M465.7,508.2 L466.2,508.8 L466.2,509.6 L466.4,510.6 L465.7,510.7 L465.3,510.8 L464.8,510.4 L464.7,509.5 L465.2,509.0Z M361.8,365.9 L362.2,366.6 L361.9,367.7 L360.8,367.9 L360.5,366.9 L360.8,365.8Z M546.6,243.6 L546.9,244.4 L546.6,246.1 L546.2,247.2 L546.0,246.1 L546.1,244.2Z M776.9,317.3 L776.5,317.6 L775.8,317.8 L775.1,317.5 L775.0,317.1 L775.2,316.8 L775.9,316.7 L776.6,317.0Z M479.5,329.4 L479.5,330.2 L479.5,330.8 L479.2,331.5 L478.6,331.9 L478.3,331.6 L478.4,331.0 L478.4,330.3 L478.9,329.6Z M278.0,176.0 L278.1,176.4 L278.2,177.0 L278.1,177.9 L277.9,178.4 L277.7,178.7 L277.3,178.3 L277.4,176.8 L277.7,176.1Z M495.6,269.1 L496.3,270.2 L496.6,272.1 L496.3,274.6 L495.1,274.7 L494.3,272.4 L494.8,269.9Z M1201.0,323.5 L1201.3,324.4 L1200.0,325.5 L1199.0,326.2 L1197.8,326.4 L1198.4,325.1 L1198.7,324.0 L1199.9,323.7Z M534.5,480.6 L535.2,481.8 L535.4,483.3 L535.2,484.0 L534.7,483.9 L534.5,482.2Z M524.7,355.0 L526.3,353.7 L526.6,357.7 L527.0,360.6 L526.6,364.3 L524.9,362.4 L523.4,361.2 L523.3,358.0 L523.0,354.1Z M469.5,494.7 L469.7,495.4 L469.0,496.7 L468.1,498.3 L467.0,499.2 L466.8,498.4 L466.5,497.6 L467.6,495.5 L468.8,495.0Z M514.6,170.8 L515.1,170.8 L515.3,171.7 L515.2,172.5 L514.7,172.7 L514.3,172.5 L514.1,171.7 L514.1,170.8Z M1189.5,295.9 L1190.1,296.5 L1190.3,296.9 L1190.7,297.4 L1190.5,297.8 L1190.4,298.3 L1189.8,297.8 L1189.5,297.2 L1189.5,296.6Z M683.3,382.4 L684.0,382.5 L683.8,384.7 L683.1,385.5 L682.7,384.2 L682.5,382.5Z M749.7,386.6 L751.5,385.7 L753.7,387.5 L755.8,389.6 L753.3,390.4 L750.4,388.4Z M472.9,547.1 L471.9,548.5 L470.7,549.9 L468.6,551.2 L467.8,550.7 L469.6,548.7 L471.6,547.3Z M342.7,74.5 L342.9,75.3 L342.6,76.4 L342.1,76.4 L342.0,76.0 L342.2,75.3Z M690.3,509.6 L690.0,511.0 L689.4,512.3 L688.4,512.8 L688.6,511.6 L689.3,509.9Z M478.0,361.9 L478.4,363.2 L477.8,364.7 L477.1,365.8 L476.4,365.8 L475.6,365.6 L476.0,363.9 L476.9,362.5Z M650.3,78.8 L650.7,79.1 L650.4,80.2 L650.0,81.1 L649.5,81.2 L649.3,80.7 L649.5,79.9 L649.8,79.3Z M726.6,72.1 L726.7,73.0 L725.7,74.1 L724.5,75.7 L724.4,74.7 L724.9,73.6 L725.8,72.0Z M313.0,395.8 L312.9,398.1 L312.6,400.2 L311.4,401.5 L311.3,399.6 L311.8,397.0Z M385.2,286.1 L385.1,287.1 L383.2,289.1 L381.6,290.7 L380.7,291.0 L380.2,290.6 L382.3,288.3 L384.2,286.2Z M303.2,376.8 L303.6,377.3 L303.8,378.0 L303.7,378.7 L303.3,379.0 L302.9,378.7 L302.6,378.1 L302.9,377.6Z M407.3,274.7 L408.4,274.8 L406.3,276.9 L404.4,278.4 L402.9,279.0 L402.9,277.8 L405.1,275.6 L406.9,274.1Z M793.3,257.7 L794.3,258.2 L794.7,260.8 L794.5,262.5 L793.6,260.6 L792.8,258.7Z M274.0,344.5 L274.6,345.2 L273.6,347.0 L272.5,347.9 L272.4,346.5 L273.1,345.0Z M872.9,453.4 L871.9,453.9 L869.7,451.1 L868.7,448.2 L870.3,448.7 L871.8,450.3 L874.0,453.0Z M1170.6,273.6 L1169.7,274.6 L1166.2,275.5 L1165.6,274.5 L1165.7,273.3 L1169.4,273.0Z M379.5,296.7 L379.7,298.7 L378.6,300.7 L377.0,302.5 L375.9,301.7 L376.3,299.5 L377.8,298.1Z M347.0,508.9 L347.4,510.4 L347.4,512.2 L346.5,513.5 L345.8,513.5 L345.2,513.1 L345.2,511.6 L346.0,510.3Z M705.5,292.9 L704.6,293.0 L703.6,292.6 L703.4,292.0 L703.8,291.6 L705.3,292.0Z M469.2,220.4 L470.5,221.3 L471.5,222.9 L471.6,224.2 L470.4,223.4 L469.0,221.8Z M481.2,170.5 L481.9,170.3 L483.3,171.2 L484.7,172.2 L485.4,173.5 L483.8,172.9 L482.6,172.3 L481.2,171.2Z M401.5,138.3 L402.4,140.7 L402.5,143.9 L400.7,146.9 L399.1,145.6 L397.9,144.9 L397.6,142.2 L399.6,141.0Z M529.8,417.5 L530.1,418.1 L530.3,419.5 L528.6,420.9 L527.0,421.9 L526.4,420.8 L527.2,419.2 L527.9,417.7 L529.3,416.6Z M635.6,517.2 L635.5,518.4 L635.1,520.2 L634.4,520.5 L634.5,519.3 L634.8,518.1Z M366.2,428.3 L366.5,427.8 L367.0,429.4 L367.8,431.0 L367.3,431.0 L366.9,430.9 L366.2,429.8 L366.0,428.6Z M402.1,77.8 L401.8,79.3 L401.6,80.1 L400.9,81.4 L400.3,81.1 L400.0,80.6 L400.2,79.4 L401.1,78.4Z M770.3,421.5 L770.8,421.5 L772.4,423.7 L773.3,425.7 L772.5,425.4 L771.3,424.6 L769.9,421.9Z M378.3,484.2 L378.2,485.0 L377.1,486.1 L376.2,486.5 L375.7,486.3 L376.2,485.3 L377.4,484.5Z M739.5,525.4 L738.9,525.4 L738.3,525.4 L738.0,524.8 L737.7,524.3 L738.3,524.2 L738.9,524.4 L739.3,524.9Z M418.3,168.2 L418.8,169.6 L418.3,171.7 L417.3,172.4 L416.6,171.3 L417.2,169.3Z M602.6,366.6 L603.2,367.1 L603.8,368.1 L603.7,368.8 L602.9,368.7 L602.3,367.3Z M403.5,110.8 L402.3,111.5 L401.2,112.1 L399.7,111.8 L400.1,111.0 L401.1,110.5 L402.2,110.5Z M1144.7,257.7 L1143.8,258.3 L1141.7,258.5 L1140.1,257.8 L1138.4,257.2 L1140.4,256.9 L1141.8,256.8 L1143.5,257.1Z M408.4,471.0 L409.0,471.3 L408.1,473.3 L406.9,474.7 L405.6,475.5 L406.0,473.8 L406.5,472.2 L407.6,471.4Z M364.8,463.7 L365.5,464.6 L365.2,466.2 L364.8,468.0 L363.6,469.9 L362.2,469.7 L362.6,467.1 L362.7,465.3 L363.8,464.3Z M900.6,470.1 L900.2,472.6 L898.9,475.8 L897.0,477.0 L896.5,476.0 L896.3,474.2 L898.7,470.9Z M567.6,170.9 L568.3,171.5 L568.5,172.6 L568.1,173.6 L567.4,173.2 L566.7,172.7 L566.8,171.6Z M624.0,459.8 L624.6,460.0 L624.7,460.7 L624.7,461.5 L624.2,462.0 L623.7,461.5 L623.0,461.3 L623.1,460.6 L623.6,460.2Z M586.2,488.9 L586.7,489.8 L586.7,491.2 L586.4,492.4 L586.0,491.3 L586.0,490.2Z M1079.6,340.8 L1081.1,342.3 L1082.7,344.7 L1082.5,346.7 L1081.9,348.1 L1080.5,345.2 L1078.9,342.4Z M543.6,230.2 L545.6,231.0 L547.4,232.1 L549.2,234.1 L547.8,234.2 L546.2,233.4 L544.7,232.0Z M482.0,525.7 L482.7,526.0 L482.9,526.7 L482.7,527.5 L482.0,527.7 L481.5,527.0 L481.5,526.3Z M476.7,250.7 L477.8,251.2 L478.3,253.6 L477.5,255.0 L476.9,256.3 L476.2,255.2 L475.8,253.6 L475.7,251.4Z M787.5,345.3 L786.0,346.7 L783.7,347.8 L781.6,348.6 L781.2,348.2 L781.0,347.6 L783.2,346.6 L785.3,345.6Z M504.3,239.4 L504.4,239.9 L503.0,241.3 L502.3,241.2 L502.5,240.5 L503.8,239.2Z M984.1,77.0 L984.6,77.6 L984.0,79.4 L983.5,80.4 L983.0,80.4 L983.0,79.2 L983.5,78.1Z M1101.8,529.7 L1101.7,531.1 L1100.4,533.3 L1099.1,534.9 L1099.6,533.1 L1100.8,530.1Z M404.9,387.6 L405.2,387.7 L405.3,388.7 L405.0,389.5 L404.7,390.9 L404.3,390.4 L404.2,389.6 L404.3,388.5 L404.6,387.9Z M373.7,503.5 L374.4,504.7 L374.7,505.8 L374.5,506.6 L374.1,507.4 L373.4,506.1 L373.3,504.5Z M472.6,235.2 L472.9,235.9 L472.1,238.0 L471.1,239.8 L470.3,240.4 L469.7,239.9 L470.9,237.5 L471.8,235.8Z M1006.2,471.5 L1006.9,471.9 L1007.8,472.9 L1008.0,473.8 L1008.0,474.1 L1007.7,474.2 L1006.9,473.5 L1006.2,472.2Z M635.7,518.2 L636.0,519.7 L636.7,521.1 L635.5,522.2 L634.8,521.4 L634.2,520.5 L634.8,519.1Z M393.2,89.5 L395.3,91.2 L397.5,92.7 L398.7,95.6 L396.9,95.0 L395.2,94.6 L393.2,91.4Z M564.0,555.9 L562.3,557.7 L560.4,559.9 L556.7,561.6 L553.9,562.2 L555.4,560.0 L558.9,557.5 L561.5,556.7Z M547.4,195.5 L548.1,195.8 L549.5,198.0 L550.3,200.0 L550.6,201.1 L550.3,201.3 L549.7,201.1 L548.3,198.6 L547.4,196.5Z M366.1,409.6 L366.9,410.0 L367.3,411.9 L366.4,414.9 L365.1,417.1 L364.1,416.4 L364.5,413.5 L364.5,411.6 L365.3,409.2Z M438.0,425.3 L438.7,427.0 L438.8,428.6 L439.1,430.4 L438.3,431.1 L437.4,432.2 L437.0,430.2 L437.2,428.6 L437.1,426.5Z M794.1,85.0 L794.8,85.7 L795.4,86.8 L795.2,87.7 L794.8,87.8 L794.0,87.4 L793.5,85.6Z M414.4,305.9 L414.7,306.3 L414.6,307.5 L413.5,308.3 L412.8,308.7 L411.9,309.1 L411.9,307.9 L412.9,306.4 L413.9,305.5Z M605.6,389.9 L606.0,390.6 L604.7,392.4 L603.8,392.0 L603.4,391.2 L604.8,389.8Z M689.7,155.7 L689.5,157.5 L688.6,160.1 L687.5,159.4 L686.6,158.7 L688.2,156.2Z M777.3,230.1 L777.1,231.0 L776.0,232.0 L775.2,232.9 L774.7,232.9 L774.3,232.8 L774.4,232.1 L775.4,231.4 L776.1,230.9Z M287.2,195.8 L287.2,196.9 L287.1,198.1 L286.3,199.8 L285.5,200.5 L284.9,200.5 L285.4,198.8 L285.7,197.5 L286.4,197.1Z M1101.9,567.7 L1103.5,567.4 L1105.6,568.2 L1106.1,569.8 L1106.1,571.3 L1104.0,570.6 L1102.6,569.4Z M680.5,277.7 L681.1,277.1 L682.3,277.6 L682.0,278.4 L681.6,278.9 L680.6,278.6Z M313.9,387.9 L315.8,390.7 L316.2,395.5 L315.0,399.8 L313.2,395.5 L312.7,391.2Z M516.7,287.9 L517.9,289.1 L516.1,291.7 L514.1,292.8 L514.3,290.4 L515.3,288.4Z M677.9,379.7 L679.4,379.9 L680.2,382.8 L679.6,384.9 L678.7,385.3 L677.2,386.3 L676.7,383.2 L676.8,380.6Z M385.4,343.3 L385.9,342.9 L386.6,343.7 L387.2,344.3 L387.3,345.1 L386.5,345.4 L385.7,344.5 L384.8,343.8Z M589.2,329.0 L589.6,329.8 L589.3,331.0 L588.1,332.0 L586.8,331.7 L587.2,329.9 L588.3,328.2Z M480.1,502.9 L480.8,503.6 L481.0,505.2 L480.4,506.2 L479.7,506.3 L479.3,505.2 L479.6,504.1Z M532.4,476.8 L533.0,477.3 L533.0,478.3 L532.4,478.8 L532.0,479.0 L531.4,478.8 L531.1,477.9 L531.7,476.9Z M882.0,73.8 L881.8,74.9 L881.1,76.9 L878.6,78.6 L877.7,78.1 L877.0,77.3 L879.1,75.0 L881.1,73.5Z M313.7,486.0 L313.5,486.5 L313.3,487.2 L312.4,487.2 L312.0,486.9 L311.8,486.4 L312.3,486.0 L312.7,485.5 L313.2,485.8Z M561.9,430.3 L562.0,430.7 L561.4,431.3 L560.7,431.8 L560.1,431.9 L560.0,431.4 L560.7,430.6 L561.5,430.2Z M476.1,424.2 L477.9,424.3 L477.3,428.0 L475.4,429.6 L474.0,430.6 L473.4,429.1 L472.6,426.4 L474.7,423.5Z M919.9,118.6 L920.5,118.5 L921.5,119.1 L922.5,120.2 L922.4,120.9 L922.2,121.4 L921.3,120.7 L920.2,120.2 L919.5,119.0Z M330.4,206.7 L330.8,207.6 L330.6,208.4 L330.1,208.8 L329.6,208.3 L329.7,207.4Z M393.2,163.1 L393.0,164.0 L393.1,164.6 L392.5,165.2 L391.9,165.5 L392.0,164.7 L392.3,164.1 L392.6,163.4Z M420.4,364.9 L420.4,365.7 L420.5,366.3 L420.3,367.1 L419.6,366.9 L419.3,366.7 L418.7,366.3 L419.0,365.5 L419.6,365.1Z M615.3,241.6 L615.1,243.4 L613.7,246.1 L613.0,245.8 L612.4,245.3 L613.9,242.8Z M502.2,165.0 L502.7,165.5 L501.9,166.8 L501.4,168.4 L501.0,167.6 L500.2,167.8 L500.6,166.2 L501.6,165.1Z M396.8,296.2 L397.2,296.7 L397.5,297.1 L397.4,297.7 L397.1,298.1 L396.7,298.4 L396.3,298.0 L396.4,297.2 L396.3,296.5Z M950.8,115.7 L949.4,116.4 L947.2,117.1 L945.5,116.5 L946.1,115.8 L947.3,115.2 L949.6,114.9Z M470.3,131.9 L471.5,132.5 L469.2,136.0 L467.3,137.3 L466.9,135.2 L469.1,131.5Z M506.1,304.2 L506.7,305.9 L502.9,309.7 L500.5,309.2 L500.5,306.8 L504.5,303.2Z M617.4,320.4 L617.9,320.4 L618.3,320.8 L618.5,321.6 L618.0,322.1 L617.2,321.7 L617.1,320.8Z M315.3,500.4 L315.5,502.9 L313.7,505.5 L311.6,506.9 L311.1,504.7 L313.2,502.1Z M588.8,530.2 L588.7,531.0 L587.9,531.6 L587.3,531.8 L586.6,531.6 L587.2,530.8 L587.9,530.2Z M379.2,242.6 L379.7,242.8 L379.9,244.0 L379.6,244.7 L379.2,243.9 L379.0,243.1Z M667.3,237.7 L667.8,238.0 L668.2,239.7 L667.9,242.4 L667.2,243.7 L666.5,243.6 L666.2,242.0 L666.6,239.9 L666.7,237.5Z M285.0,78.5 L285.4,79.2 L284.3,80.9 L283.4,80.9 L283.5,80.0 L284.2,78.8Z M540.2,384.0 L539.2,385.1 L536.1,385.6 L533.5,384.1 L531.3,383.3 L531.9,382.4 L532.9,381.4 L536.6,381.4 L539.6,382.7Z M467.2,427.7 L468.6,429.4 L469.6,430.8 L469.7,432.7 L469.0,433.3 L468.1,433.0 L467.2,431.6 L466.9,429.7Z M389.0,132.5 L389.2,134.1 L388.5,136.0 L387.3,137.3 L386.4,137.0 L386.4,135.2 L387.6,132.7Z M606.7,350.4 L607.0,351.3 L607.2,353.0 L605.9,354.9 L604.8,357.5 L604.6,355.8 L604.5,354.5 L604.8,352.3 L605.9,351.5Z M300.1,433.4 L299.4,436.6 L297.6,440.3 L294.3,443.7 L293.4,442.1 L295.1,438.4 L297.4,435.5Z M548.6,260.3 L548.6,261.0 L548.6,261.9 L547.9,262.7 L547.6,262.1 L547.7,261.4 L548.0,260.6Z M491.4,530.4 L491.9,530.8 L492.2,531.7 L491.8,532.4 L491.3,533.1 L490.8,532.6 L490.2,531.6 L490.9,530.7Z M291.6,362.0 L292.0,363.5 L292.0,366.1 L291.1,368.5 L290.5,367.7 L290.6,365.6 L290.9,363.6Z M619.4,237.8 L619.4,238.6 L618.5,239.7 L617.8,240.3 L617.0,240.6 L617.2,239.8 L617.7,239.0 L618.5,238.2Z M469.1,334.1 L469.2,334.7 L468.5,335.3 L467.9,335.0 L468.1,334.4 L468.6,333.8Z M366.8,476.6 L366.0,477.7 L365.4,478.8 L364.3,479.4 L363.2,480.0 L363.5,479.2 L364.5,477.9 L365.5,477.5Z M504.5,169.6 L504.8,170.1 L504.8,171.1 L504.3,171.8 L503.9,172.4 L503.6,172.2 L503.2,171.8 L503.4,170.7 L504.0,170.1Z M369.3,377.0 L369.7,377.4 L369.2,378.9 L368.6,379.9 L368.2,379.3 L368.8,377.4Z M1187.3,372.4 L1186.3,373.8 L1183.4,374.9 L1180.9,374.6 L1181.3,373.4 L1182.6,371.9 L1185.7,371.7Z M745.0,335.7 L745.5,335.8 L745.2,338.0 L744.7,339.6 L744.1,341.2 L743.9,340.4 L743.4,339.9 L743.8,337.5 L744.5,336.0Z M898.7,94.0 L899.5,94.1 L898.4,96.4 L897.6,97.6 L896.8,98.6 L895.9,99.2 L896.1,97.6 L896.9,95.5 L897.9,94.5Z M963.7,151.2 L963.3,151.9 L962.1,151.7 L961.3,151.1 L961.4,150.4 L962.5,150.5 L963.4,150.5Z M414.8,532.2 L414.3,533.5 L413.8,534.6 L412.5,535.5 L411.3,535.5 L410.8,534.8 L411.2,533.7 L412.2,532.4 L413.5,532.3Z M368.4,289.9 L368.0,290.4 L367.4,290.7 L366.5,291.0 L366.3,290.6 L366.2,290.2 L367.2,290.0 L367.8,289.8Z M308.9,94.1 L309.0,94.6 L308.7,95.7 L307.8,96.9 L306.9,97.4 L306.9,96.4 L307.6,95.1 L308.3,94.1Z M432.0,126.2 L432.6,127.0 L433.1,127.7 L432.7,128.2 L432.3,128.9 L431.7,128.0 L431.5,126.9Z M446.1,505.4 L446.2,506.5 L445.5,507.6 L444.5,507.7 L444.7,506.7 L445.1,505.8Z M572.2,157.8 L572.1,158.9 L572.0,159.8 L571.3,160.4 L570.5,161.1 L570.1,160.4 L570.4,158.9 L571.4,157.9Z M545.3,557.2 L545.6,557.8 L545.1,559.0 L544.4,560.2 L544.4,559.0 L544.8,557.6Z M1005.0,464.8 L1006.3,465.5 L1007.5,466.6 L1008.3,467.9 L1009.6,470.0 L1008.4,469.9 L1007.1,469.8 L1005.4,467.9 L1004.1,465.5Z M650.6,111.7 L650.1,112.4 L649.2,113.1 L648.3,113.3 L648.2,112.9 L648.8,112.2 L649.7,111.8Z M942.9,362.6 L944.0,361.2 L945.9,364.8 L946.1,367.9 L945.4,369.4 L943.9,369.6 L941.8,366.2 L941.5,362.7Z M727.8,225.4 L727.1,225.9 L726.1,225.8 L725.6,225.1 L725.9,224.7 L726.4,224.1 L727.2,224.7Z M290.3,203.4 L291.0,203.8 L290.7,205.9 L289.5,206.8 L288.3,207.2 L289.0,205.0 L289.4,203.0Z M309.7,130.2 L310.5,130.4 L308.9,132.4 L307.8,134.1 L306.1,135.6 L306.1,134.4 L306.6,133.0 L307.7,131.3 L309.2,129.7Z M298.2,401.7 L298.4,402.3 L298.2,403.1 L297.5,403.9 L297.2,403.0 L297.6,402.0Z M470.3,202.7 L470.4,203.4 L469.9,204.7 L469.1,205.6 L469.3,204.3 L469.7,203.1Z M547.6,171.0 L547.9,171.3 L547.5,172.3 L547.1,173.4 L546.6,173.3 L546.5,172.8 L546.5,171.9 L547.2,170.8Z M741.2,467.3 L741.2,468.0 L741.2,468.6 L740.7,469.4 L740.3,469.5 L739.8,469.3 L740.2,468.2 L740.7,467.4Z M445.8,86.5 L446.1,88.5 L446.2,90.4 L445.7,92.4 L445.0,94.8 L444.5,93.0 L444.1,92.1 L444.4,90.3 L444.7,87.1Z M558.7,343.0 L557.2,345.0 L553.8,345.1 L552.8,343.4 L553.7,341.8 L556.7,341.7Z M378.0,369.8 L378.4,370.6 L377.7,371.7 L376.8,371.3 L376.7,370.6 L377.1,369.8Z M303.7,415.6 L305.6,415.6 L307.8,420.5 L309.5,425.0 L308.0,425.9 L305.5,421.4 L302.7,417.1Z M768.1,205.2 L767.7,206.3 L767.1,207.0 L766.4,207.1 L765.9,206.3 L767.0,205.4Z M686.2,569.5 L686.4,570.5 L686.7,571.7 L685.8,573.0 L685.1,573.8 L684.8,573.3 L684.1,573.0 L684.7,571.1 L685.5,569.6Z M774.9,165.9 L775.1,166.4 L774.3,166.2 L773.9,166.1 L773.6,165.8 L773.2,165.3 L774.0,165.4 L774.6,165.0 L774.9,165.6Z M318.0,560.0 L317.9,560.6 L316.7,561.1 L315.8,561.4 L314.8,561.3 L315.5,560.7 L316.3,560.3 L317.2,559.9Z M385.9,201.1 L385.8,201.9 L384.4,202.9 L383.7,202.7 L383.9,202.0 L385.0,201.3Z M988.6,108.0 L988.2,107.7 L989.8,106.9 L990.7,106.6 L991.5,106.6 L990.2,107.6 L989.1,108.0Z M786.5,377.0 L787.7,376.5 L789.8,378.6 L790.9,380.8 L788.6,379.8 L786.6,378.2Z M909.1,120.4 L908.6,120.8 L908.2,119.8 L907.9,118.8 L908.6,118.9 L909.3,119.1 L909.4,120.0Z M1063.9,363.4 L1064.1,364.9 L1062.8,366.9 L1061.7,368.9 L1060.3,369.5 L1060.5,367.7 L1061.3,366.0 L1062.5,364.1Z M703.3,179.7 L703.6,180.4 L701.6,182.2 L700.1,183.0 L698.3,183.5 L700.2,181.1 L702.5,179.7Z M478.8,232.8 L478.9,233.2 L479.1,233.9 L478.4,233.9 L478.0,233.9 L477.5,233.7 L477.2,233.2 L477.9,232.9 L478.3,232.5Z M326.2,304.6 L326.1,305.9 L326.1,306.7 L325.8,307.6 L325.3,309.1 L325.2,308.1 L324.9,307.8 L325.2,306.4 L325.7,305.5Z M407.6,359.5 L406.5,360.9 L405.3,362.3 L403.6,363.0 L404.1,361.9 L404.3,361.0 L406.1,359.9Z M476.5,515.5 L477.3,515.6 L477.1,516.7 L476.3,517.5 L475.7,517.7 L475.4,517.4 L474.9,516.9 L475.5,516.1 L476.0,515.7Z M384.2,505.4 L384.2,506.1 L383.5,507.0 L382.8,507.7 L382.4,507.5 L382.2,507.1 L382.4,506.0 L383.5,505.5Z M611.6,113.1 L612.1,113.2 L612.6,113.5 L612.4,114.1 L612.1,114.5 L611.6,114.8 L611.0,114.6 L611.1,113.9 L611.3,113.5Z M553.3,375.5 L553.5,376.1 L552.6,376.6 L552.1,376.4 L552.2,375.9 L552.9,375.1Z M397.3,344.6 L399.0,345.3 L400.5,346.9 L400.2,348.4 L398.7,347.8 L397.3,346.4Z M442.4,533.8 L442.3,535.4 L440.9,537.7 L439.5,537.7 L439.1,536.3 L440.8,533.5Z M291.3,445.7 L291.2,446.5 L290.5,447.8 L289.3,448.5 L288.3,448.9 L288.4,448.0 L289.3,446.7 L290.6,445.7Z M353.7,136.2 L354.6,137.0 L353.3,138.9 L352.5,140.7 L351.5,140.2 L350.2,140.6 L350.6,139.0 L351.0,137.2 L352.5,136.0Z M532.9,253.1 L533.3,254.0 L533.7,254.4 L533.7,255.1 L533.6,255.9 L533.2,256.1 L532.9,255.1 L532.6,254.5 L532.5,253.5Z M865.9,116.7 L865.9,117.8 L864.9,119.5 L863.4,119.9 L863.3,118.4 L864.8,116.4Z M1057.3,548.2 L1057.4,548.6 L1057.1,549.1 L1056.6,549.4 L1056.0,549.7 L1055.9,549.3 L1056.0,548.9 L1056.4,548.4 L1057.0,547.9Z M719.6,451.3 L719.2,451.0 L719.0,450.5 L718.9,449.8 L719.0,448.6 L719.6,448.7 L719.8,449.7 L720.2,450.4 L720.1,451.3Z M1088.8,300.9 L1090.7,302.1 L1092.2,302.5 L1094.1,304.6 L1093.2,305.5 L1092.7,306.0 L1091.7,306.5 L1089.9,304.5 L1088.7,302.4Z M1055.6,505.8 L1056.0,505.6 L1056.6,505.5 L1057.4,505.6 L1057.9,506.1 L1057.4,506.4 L1057.2,506.7 L1056.2,506.6 L1055.4,506.2Z M478.3,124.1 L478.9,124.9 L479.6,126.6 L479.5,128.8 L479.4,130.8 L478.8,130.6 L478.2,129.1 L477.6,126.8 L477.8,124.7Z M319.9,527.4 L320.2,528.2 L319.5,529.0 L318.9,528.4 L318.5,527.9 L319.1,527.3Z M289.2,558.8 L289.5,559.6 L289.8,560.8 L289.3,563.2 L288.4,564.7 L287.7,564.2 L287.5,562.5 L288.1,560.7 L288.6,559.1Z M503.2,512.4 L503.0,512.9 L502.5,513.5 L501.8,513.7 L501.2,513.7 L502.0,512.9 L502.8,512.5Z M536.2,334.1 L536.7,334.8 L536.2,336.3 L535.7,337.4 L535.2,337.2 L534.9,336.1 L535.5,334.8Z M532.4,208.9 L532.1,209.9 L531.8,210.9 L530.8,211.6 L530.2,211.7 L530.2,211.0 L530.8,210.1 L531.6,208.9Z M1067.4,564.1 L1066.2,566.1 L1063.2,566.3 L1061.3,566.1 L1059.4,564.8 L1062.2,563.2 L1065.3,562.9Z M573.5,182.6 L574.0,182.8 L573.5,184.4 L572.8,185.3 L572.7,184.1 L573.1,182.5Z M1197.6,375.8 L1198.4,377.6 L1194.7,379.5 L1191.4,380.4 L1190.3,378.8 L1193.4,376.7 L1196.2,374.7Z M856.2,105.8 L856.8,106.0 L856.3,107.6 L855.6,108.7 L854.7,109.5 L854.3,108.7 L854.9,107.1 L855.7,105.8Z M665.1,280.6 L666.5,281.9 L666.8,284.6 L666.7,286.8 L665.6,284.9 L664.8,282.8Z M430.6,90.8 L430.6,91.8 L429.0,93.0 L427.1,93.8 L426.6,93.0 L426.6,92.1 L428.1,91.3 L429.5,90.7Z M515.7,528.7 L516.7,529.6 L517.1,532.9 L516.1,534.5 L515.0,533.1 L515.2,530.2Z M334.8,510.9 L334.2,511.6 L332.5,512.5 L330.6,512.1 L330.2,511.2 L332.4,510.7 L334.0,510.4Z M453.8,298.0 L454.0,298.5 L453.9,299.3 L453.2,299.9 L452.3,300.4 L451.8,299.9 L451.9,299.1 L452.7,298.5 L453.2,298.2Z M708.7,83.4 L708.9,84.1 L709.1,84.8 L708.6,85.5 L708.1,85.8 L707.6,85.8 L707.2,85.2 L707.8,84.5 L708.0,83.4Z M333.1,214.4 L333.9,217.8 L334.6,221.1 L333.2,224.9 L331.9,222.2 L330.8,220.6 L331.6,217.1Z M363.3,181.5 L364.8,181.7 L365.9,181.8 L367.2,182.5 L367.3,183.0 L366.6,183.1 L365.6,182.9 L364.0,182.4Z M304.8,103.5 L305.1,103.6 L305.1,104.3 L304.7,104.9 L304.4,104.9 L304.0,105.3 L304.0,104.6 L304.1,104.1 L304.5,103.7Z M990.5,390.7 L991.5,391.2 L992.8,392.5 L992.8,393.5 L991.7,392.9 L990.5,391.6Z M547.2,522.4 L548.3,523.2 L547.9,525.2 L547.9,527.0 L546.9,527.3 L546.1,526.6 L545.4,525.0 L546.2,523.2Z M648.2,339.8 L648.0,340.2 L647.5,340.5 L646.9,340.5 L646.7,340.2 L646.6,340.0 L646.7,339.7 L647.2,339.5 L647.7,339.6Z M798.8,183.5 L799.1,184.9 L797.1,187.4 L796.0,187.5 L795.8,186.5 L797.3,184.6Z M277.8,220.2 L278.6,221.1 L279.2,223.0 L278.6,223.8 L278.0,222.9 L277.5,221.3Z M612.5,421.0 L612.8,421.0 L613.2,421.6 L613.0,422.5 L613.0,423.4 L612.5,423.3 L612.3,422.5 L612.0,421.8 L612.1,421.0Z M593.9,454.9 L593.8,455.8 L593.0,456.5 L592.0,457.2 L591.4,456.8 L591.7,456.1 L592.2,455.5 L593.1,454.7Z M1093.0,557.1 L1092.9,558.6 L1089.2,559.5 L1085.5,558.9 L1085.7,557.5 L1086.6,556.5 L1089.0,555.3 L1092.1,556.0Z M420.6,528.9 L421.1,529.2 L421.5,529.7 L421.8,530.5 L421.8,531.4 L421.2,530.9 L420.6,530.2 L420.6,529.5Z M722.2,189.0 L723.1,189.6 L724.1,191.3 L724.1,192.1 L723.3,191.6 L722.6,190.2Z M772.3,100.9 L771.4,102.0 L770.6,102.8 L769.3,103.8 L768.6,103.6 L768.9,102.9 L770.0,102.0 L770.9,101.5Z M477.1,302.9 L477.3,304.3 L476.1,307.1 L475.0,307.9 L474.7,306.7 L476.0,303.7Z M624.2,449.1 L624.4,449.9 L624.1,450.9 L623.5,451.8 L623.0,451.4 L622.9,450.9 L622.9,450.3 L623.4,449.7Z M452.9,357.3 L453.3,357.2 L453.8,358.4 L454.0,359.5 L453.7,360.0 L452.9,358.9 L452.8,357.7Z M874.7,113.2 L874.3,114.4 L873.3,116.0 L872.1,115.9 L872.5,114.6 L873.5,113.1Z M547.2,257.3 L548.1,259.0 L548.1,261.8 L547.7,263.9 L546.9,261.9 L546.7,259.5Z M385.5,288.0 L386.0,288.5 L385.1,289.3 L384.4,289.3 L384.2,289.0 L384.1,288.2 L385.0,287.9Z M420.3,487.0 L420.7,487.4 L420.8,488.8 L420.2,489.9 L419.8,491.1 L419.2,491.1 L419.0,490.0 L419.4,488.7 L419.8,488.0Z M597.1,130.0 L598.5,131.6 L599.7,134.5 L599.0,136.5 L597.3,135.6 L596.9,132.1Z M694.2,118.2 L694.6,118.9 L694.5,120.1 L694.4,121.0 L694.0,121.7 L693.5,121.9 L693.3,121.0 L693.2,119.8 L693.7,119.0Z M286.8,517.1 L285.0,518.1 L281.4,517.7 L279.0,517.1 L275.7,516.3 L277.2,515.4 L278.0,514.2 L281.6,515.3 L284.7,515.8Z M469.4,537.5 L470.4,537.2 L471.7,539.8 L472.5,541.8 L472.1,542.7 L471.1,542.5 L469.9,540.8 L469.1,538.8Z M349.9,393.6 L348.9,394.4 L346.8,395.0 L345.4,394.9 L344.2,394.8 L344.1,394.2 L346.5,393.6 L348.2,393.5Z M791.3,359.2 L791.4,359.7 L790.8,360.5 L790.0,361.4 L788.7,362.4 L788.5,361.7 L788.9,360.7 L789.9,359.6 L791.2,358.4Z M668.3,516.3 L667.0,518.1 L665.9,519.5 L664.3,519.8 L663.5,519.2 L664.3,517.6 L666.6,516.0Z M314.6,195.4 L314.9,196.5 L314.5,198.0 L313.8,198.5 L313.6,197.7 L313.9,196.5Z M488.0,75.1 L488.2,75.8 L488.0,76.5 L487.5,76.9 L487.2,76.6 L487.0,76.1 L487.4,75.4Z M540.2,495.7 L539.6,496.7 L538.1,497.7 L536.7,498.3 L535.5,498.4 L536.2,497.4 L537.4,496.4 L539.3,495.4Z M423.3,515.4 L423.0,516.5 L420.9,518.3 L419.6,519.3 L418.7,519.7 L417.1,520.5 L418.8,518.7 L420.2,517.4 L421.4,516.7Z M461.0,389.4 L460.9,391.1 L460.8,392.4 L460.2,393.9 L459.6,395.4 L458.8,396.3 L459.2,393.9 L459.4,391.7 L460.3,390.0Z M397.6,554.6 L397.7,555.1 L397.4,556.0 L396.5,556.3 L395.9,556.5 L395.7,556.3 L395.5,555.8 L396.4,555.2 L397.3,554.2Z M544.4,199.5 L545.1,199.9 L545.7,200.6 L545.6,201.4 L545.0,201.5 L544.5,201.0 L544.2,200.3Z M508.7,351.0 L508.6,351.7 L508.3,352.6 L507.8,352.8 L507.5,352.8 L507.6,352.2 L508.2,351.1Z M614.3,277.0 L614.6,277.9 L613.8,279.0 L613.0,279.4 L612.3,279.2 L612.8,278.2 L613.4,277.4Z M786.7,253.4 L786.4,253.7 L785.2,253.8 L784.3,253.2 L783.7,252.8 L783.0,252.2 L784.2,252.2 L785.5,252.5 L786.8,252.9Z M473.3,517.0 L473.6,518.0 L471.2,520.2 L468.1,521.8 L467.4,521.0 L467.6,519.8 L469.6,517.8 L471.7,517.3Z M338.2,259.6 L337.8,260.4 L337.4,260.9 L336.8,261.2 L336.7,260.7 L336.7,260.1 L337.4,259.7Z M600.1,174.5 L600.2,175.3 L600.3,176.2 L599.8,177.4 L599.2,177.7 L598.7,177.5 L598.9,175.9 L599.5,174.2Z M538.8,261.1 L538.8,261.7 L538.2,262.2 L537.5,263.1 L536.7,262.9 L537.2,262.0 L537.3,261.2 L538.2,260.9Z M612.5,264.7 L613.4,266.2 L613.0,269.4 L611.6,270.1 L610.5,269.2 L611.2,265.7Z M975.3,115.9 L975.5,116.5 L973.6,118.4 L971.0,120.4 L971.9,118.7 L972.3,117.4 L975.3,115.0Z M276.1,329.7 L276.5,330.5 L275.5,333.2 L273.3,336.8 L272.1,336.9 L271.7,336.2 L271.9,334.8 L273.3,331.8 L275.2,329.7Z M429.9,157.6 L429.7,158.1 L428.8,158.6 L427.9,158.5 L427.2,158.6 L427.2,158.3 L427.5,157.9 L428.4,157.6 L429.1,157.6Z M849.9,75.0 L850.0,75.9 L850.4,76.6 L849.7,77.8 L849.3,78.3 L848.6,79.2 L848.7,77.7 L848.8,76.3 L849.4,74.7Z M506.9,179.8 L508.2,180.0 L509.3,181.9 L508.9,184.1 L507.1,182.7 L506.5,181.0Z M324.0,410.6 L324.6,410.3 L324.8,411.0 L324.8,411.5 L324.7,412.1 L324.2,412.1 L323.6,411.9 L323.6,411.3 L323.5,410.7Z M887.1,75.3 L885.3,76.9 L883.8,78.2 L881.4,78.6 L880.8,77.7 L880.4,76.6 L882.7,75.2 L885.1,75.0Z M378.1,88.4 L378.8,88.5 L378.8,89.4 L378.3,89.9 L377.8,89.7 L377.5,89.2 L377.5,88.3Z M338.2,552.4 L339.1,553.4 L338.1,556.3 L336.5,557.4 L335.6,556.9 L335.7,555.0 L337.0,551.8Z M362.1,468.0 L362.4,468.6 L362.2,469.4 L361.4,469.9 L360.7,469.8 L360.7,469.0 L360.7,468.2 L361.4,468.0Z M512.7,297.4 L513.0,298.1 L512.5,300.7 L512.1,303.6 L511.4,304.2 L511.1,303.7 L510.7,303.2 L511.5,300.4 L512.1,298.8Z M906.9,353.7 L906.1,354.5 L903.9,354.0 L902.7,352.3 L903.8,351.6 L905.4,351.1 L907.5,352.6Z M273.7,139.3 L274.3,141.3 L274.8,143.3 L274.0,143.9 L273.4,143.1 L273.3,141.4Z M826.5,103.4 L827.3,104.4 L827.8,105.6 L827.5,106.7 L826.8,105.6 L826.2,104.6Z M644.4,306.1 L645.2,306.6 L645.8,308.3 L645.9,309.7 L645.0,308.8 L644.4,307.3Z M546.6,569.9 L546.6,571.7 L546.1,573.5 L545.3,575.9 L544.1,576.2 L543.0,576.4 L543.4,574.4 L543.9,572.3 L545.3,570.4Z M596.9,362.6 L597.0,363.6 L596.5,364.8 L595.5,365.3 L595.3,364.2 L595.9,362.8Z M492.0,456.9 L492.1,457.6 L492.0,458.7 L491.9,460.2 L491.5,460.4 L491.1,461.1 L491.0,460.0 L491.4,458.6 L491.6,457.4Z M634.3,476.2 L634.1,477.2 L634.1,478.2 L633.1,479.6 L632.5,479.5 L632.3,479.2 L632.4,478.6 L632.8,477.6 L633.5,476.7Z M875.9,350.8 L877.3,351.4 L878.5,352.9 L878.6,353.8 L877.6,353.4 L876.4,352.2Z M576.7,118.3 L576.7,119.6 L574.7,121.4 L573.3,121.4 L572.7,120.2 L575.4,118.4Z M719.2,253.9 L720.0,253.7 L721.1,254.1 L722.1,254.8 L722.1,255.6 L720.6,255.5 L719.7,254.6Z M384.4,323.3 L385.6,323.7 L384.6,325.7 L382.9,327.0 L382.7,325.3 L382.8,324.3 L383.5,322.5Z M611.2,428.2 L610.7,430.1 L609.4,432.2 L608.0,434.3 L606.3,436.0 L607.1,433.6 L608.3,431.5 L609.8,429.1Z M545.7,473.7 L546.2,473.5 L546.9,474.2 L547.7,474.8 L547.4,475.3 L547.0,475.6 L546.2,474.9 L545.8,474.3Z M686.2,464.2 L686.2,465.0 L686.3,465.9 L685.5,466.3 L684.7,467.2 L684.5,466.5 L684.0,466.0 L684.6,464.9 L685.4,464.7Z M571.9,152.9 L572.6,152.7 L573.3,153.4 L573.1,154.0 L572.6,154.2 L572.0,153.6Z M414.8,484.3 L415.2,485.3 L415.2,486.6 L414.3,487.1 L413.7,486.3 L414.1,485.2Z M332.4,345.0 L332.9,345.0 L333.5,346.0 L333.4,347.2 L332.8,346.7 L332.2,346.3 L331.9,345.1Z M670.6,343.1 L671.1,344.0 L671.4,345.5 L671.4,346.6 L671.1,347.1 L670.6,345.9 L670.5,344.3Z M349.2,200.9 L349.7,201.4 L349.1,202.1 L348.4,202.4 L347.6,202.0 L347.7,201.0 L348.6,200.9Z M512.9,473.5 L513.2,473.9 L513.0,475.1 L512.7,476.2 L512.2,476.7 L512.1,476.0 L512.1,474.9 L512.4,473.7Z M691.9,245.7 L692.4,246.3 L692.6,248.0 L691.6,250.1 L690.7,249.7 L690.0,249.3 L690.6,247.4 L691.1,245.7Z M1109.1,515.1 L1108.6,515.6 L1106.4,514.5 L1106.7,513.8 L1107.1,513.1 L1108.8,514.4Z M402.5,356.5 L403.1,356.6 L403.2,357.3 L402.9,357.7 L402.5,357.9 L401.8,357.6 L402.1,356.8Z M792.0,464.2 L792.0,464.7 L791.6,465.2 L791.0,465.8 L790.7,465.3 L790.5,464.9 L790.9,464.4 L791.6,463.6Z M563.4,399.8 L564.1,401.1 L564.7,402.9 L563.6,404.5 L562.3,404.1 L562.1,402.3 L562.6,401.1Z M1152.0,369.2 L1151.9,371.1 L1150.1,372.7 L1149.1,373.0 L1148.5,372.1 L1150.2,370.2Z M414.2,298.1 L414.7,298.9 L415.1,299.8 L415.2,300.7 L414.9,301.2 L414.4,301.2 L414.0,300.0 L414.1,299.2Z M646.4,363.0 L647.7,363.9 L646.9,366.7 L645.9,370.2 L644.0,369.6 L643.9,366.3 L644.7,363.1Z M278.7,388.9 L279.0,390.6 L278.9,392.2 L278.3,393.2 L277.9,392.0 L278.0,390.6Z M602.1,426.8 L601.2,428.7 L596.3,429.0 L594.2,427.3 L597.1,426.1 L600.1,425.7Z M595.8,95.4 L596.8,96.7 L593.8,99.9 L591.1,100.7 L589.7,99.9 L591.0,96.9 L594.8,94.1Z M329.0,329.7 L329.7,330.1 L329.1,330.8 L328.5,331.3 L328.3,330.5 L328.4,329.6Z M326.5,158.5 L327.4,158.8 L327.6,161.1 L327.0,162.9 L326.1,162.3 L325.8,160.9 L325.9,159.6Z M770.4,267.0 L770.7,269.1 L767.6,270.6 L765.1,270.1 L766.3,267.8 L768.6,265.7Z M463.5,428.9 L463.8,429.4 L463.0,430.4 L462.4,431.4 L462.0,431.0 L461.9,430.5 L462.1,429.7 L462.9,428.7Z M814.8,275.0 L814.4,275.8 L812.3,276.3 L810.6,276.1 L810.1,275.5 L810.3,274.7 L812.1,273.9 L814.0,274.3Z M1154.5,244.4 L1155.0,245.4 L1155.4,246.8 L1155.1,248.7 L1154.7,250.6 L1153.9,251.6 L1153.5,249.0 L1153.7,246.9 L1153.8,244.3Z M519.3,395.4 L519.0,396.1 L518.0,396.6 L517.5,396.7 L516.8,396.7 L517.5,396.0 L518.4,395.7Z M799.2,192.4 L799.1,193.4 L798.9,194.5 L797.7,195.4 L797.0,195.5 L796.3,195.6 L796.5,194.7 L797.4,193.6 L798.3,192.8Z M1104.3,479.4 L1104.6,479.7 L1104.9,480.4 L1104.2,481.1 L1103.6,480.8 L1103.1,480.5 L1103.3,479.6 L1103.7,478.8Z M666.7,485.1 L667.0,485.9 L666.9,487.1 L666.4,488.8 L665.4,489.6 L665.4,487.9 L665.3,486.6 L666.0,484.7Z M782.7,92.5 L782.0,93.0 L781.4,93.2 L780.6,93.2 L780.5,92.6 L781.1,92.1 L781.9,92.1Z M290.4,450.5 L290.8,451.0 L291.0,452.5 L290.5,453.9 L289.9,454.1 L289.7,452.4 L290.0,450.9Z M397.1,342.5 L397.5,343.1 L397.6,343.7 L397.5,344.4 L397.1,344.6 L396.6,345.0 L396.6,344.1 L396.3,343.5 L396.8,343.2Z M736.0,519.7 L734.5,520.9 L733.2,521.5 L731.6,521.7 L730.5,521.2 L732.5,520.1 L734.4,519.5Z M734.1,264.6 L735.0,264.4 L736.4,264.8 L737.1,266.4 L737.0,267.6 L735.6,267.2 L734.5,266.6 L733.8,265.5Z M471.2,251.9 L472.0,251.9 L471.3,253.4 L470.6,254.3 L469.9,254.3 L470.0,253.0 L470.7,251.4Z M880.6,133.0 L881.1,133.6 L880.5,135.2 L879.8,136.4 L879.6,135.2 L880.0,133.7Z M595.2,572.4 L595.5,572.9 L595.7,573.7 L595.8,575.1 L595.3,575.8 L594.7,575.7 L594.5,574.7 L594.6,573.7 L594.6,572.3Z M433.7,122.3 L434.5,122.1 L433.7,124.9 L432.4,127.8 L431.4,128.4 L431.1,127.3 L432.4,124.4 L433.1,122.4Z M562.3,329.4 L561.9,330.3 L561.3,331.0 L560.4,331.7 L559.6,331.6 L559.5,330.8 L560.4,329.9 L561.3,329.4Z M451.6,323.3 L452.0,324.4 L450.9,326.6 L449.5,327.4 L449.5,325.8 L450.5,324.1Z M788.4,129.4 L788.3,130.0 L786.9,130.1 L785.7,129.7 L784.8,129.0 L785.7,128.5 L787.1,128.3 L788.9,128.5Z M509.4,526.6 L509.1,527.5 L507.9,528.7 L507.0,528.8 L506.8,527.9 L508.5,526.6Z M1059.4,470.5 L1058.6,471.0 L1057.7,471.3 L1056.2,471.5 L1055.8,470.9 L1056.3,470.3 L1057.6,469.7 L1059.2,469.8Z M932.8,83.8 L933.2,84.4 L932.7,85.5 L931.6,86.7 L931.0,85.9 L930.8,85.2 L931.2,84.2 L932.2,83.1Z M378.8,381.8 L379.0,382.2 L378.4,383.2 L377.7,384.2 L377.3,383.9 L377.8,382.8 L378.2,381.9Z M426.5,496.8 L428.9,498.3 L431.2,500.1 L431.6,502.3 L430.9,503.1 L428.8,501.9 L426.2,498.8Z M1197.6,260.1 L1198.4,259.6 L1198.7,262.0 L1199.5,264.7 L1198.7,265.6 L1197.8,264.0 L1197.3,262.3 L1197.2,260.8Z M526.2,287.8 L526.6,289.2 L526.8,290.3 L527.0,292.1 L526.5,291.4 L526.2,290.4 L526.1,289.2Z M628.3,257.6 L629.0,260.0 L628.5,262.5 L627.2,264.6 L625.5,263.1 L626.9,259.7Z M751.2,225.5 L748.9,226.9 L745.8,228.1 L741.9,227.4 L741.5,225.8 L741.1,223.9 L745.7,223.7 L750.4,223.5Z M702.7,99.8 L702.0,100.3 L700.5,100.4 L698.8,100.5 L699.6,100.0 L700.2,99.4 L702.1,99.4Z M611.0,548.7 L611.8,548.6 L612.6,550.2 L612.6,552.2 L612.3,553.4 L611.5,553.7 L610.6,552.9 L610.2,550.7 L610.5,549.5Z M580.2,500.7 L580.7,501.2 L580.3,501.9 L580.0,502.2 L579.5,502.4 L579.2,501.9 L579.1,501.3 L579.6,500.9Z M534.0,146.6 L534.2,147.2 L533.7,148.8 L533.0,150.5 L532.8,149.9 L532.8,148.7 L533.5,147.3Z M764.8,490.3 L765.5,490.9 L766.3,491.7 L767.0,493.4 L767.1,494.7 L766.6,494.9 L765.7,493.9 L764.6,492.3 L764.3,490.6Z M741.3,383.3 L741.0,386.1 L740.0,389.1 L738.7,389.3 L738.5,387.8 L739.4,385.0Z M499.5,267.8 L501.1,268.7 L500.7,272.0 L499.7,274.3 L498.3,272.5 L498.1,268.8Z M1003.1,113.7 L1000.9,114.2 L999.1,114.8 L996.1,114.2 L995.4,113.2 L994.0,112.2 L996.9,112.1 L999.1,112.2 L1001.5,112.7Z M584.5,224.6 L586.8,225.4 L588.5,229.0 L588.3,231.3 L586.2,230.4 L584.5,227.3Z M461.4,551.2 L461.9,551.5 L461.5,552.4 L460.9,552.8 L460.4,553.0 L459.8,552.9 L460.0,552.2 L460.2,551.3 L460.9,551.2Z M449.5,374.8 L449.4,376.5 L449.6,377.9 L448.7,380.0 L447.6,380.1 L446.3,380.8 L446.9,378.7 L447.0,376.7 L448.3,375.7Z M598.9,521.5 L599.5,522.0 L598.6,523.3 L597.7,523.7 L597.0,523.7 L597.5,522.5 L598.3,521.0Z M760.8,238.7 L759.8,240.1 L758.4,241.2 L756.3,243.0 L755.6,242.2 L754.3,242.0 L755.1,240.6 L757.4,239.3 L759.6,238.4Z M447.9,177.6 L448.1,177.9 L448.3,178.5 L447.8,178.9 L447.3,179.0 L446.7,179.1 L446.8,178.4 L446.9,177.7 L447.5,177.3Z M539.6,161.8 L540.1,162.6 L540.8,163.2 L541.0,164.8 L540.9,166.1 L540.2,165.3 L539.7,164.7 L539.5,163.7 L539.1,162.2Z M948.2,323.8 L948.2,324.7 L948.2,325.6 L947.7,326.6 L947.4,326.4 L947.0,326.5 L947.2,325.3 L947.7,324.4Z M826.4,98.4 L826.8,98.7 L826.7,99.3 L826.6,100.2 L825.9,100.6 L825.3,100.0 L825.5,99.1 L825.7,98.1Z M750.6,66.5 L750.6,68.8 L750.3,71.7 L748.4,72.9 L746.3,73.7 L746.9,70.1 L748.7,65.9Z M568.7,188.3 L569.5,188.6 L569.5,189.8 L569.1,190.4 L568.5,190.7 L568.2,189.9 L568.0,188.9Z M374.9,364.1 L375.7,363.9 L377.0,364.5 L378.1,365.9 L379.4,367.5 L379.0,368.4 L377.1,367.1 L375.8,366.0 L374.6,364.7Z M453.0,89.7 L454.5,89.1 L457.0,91.2 L458.6,94.3 L457.7,96.0 L455.8,95.9 L453.4,93.9 L452.0,91.0Z M510.9,238.0 L511.3,238.3 L511.8,239.3 L512.1,240.3 L512.1,241.1 L511.2,239.6 L510.6,238.2Z M732.6,227.8 L732.3,229.8 L729.6,232.1 L727.0,233.7 L726.1,232.8 L728.0,230.4 L730.1,228.8Z M384.6,407.9 L384.8,408.4 L384.1,409.1 L383.4,409.6 L383.2,409.2 L383.6,408.5 L384.1,408.2Z M526.8,504.2 L527.4,504.2 L528.5,504.7 L528.7,506.3 L528.7,507.7 L527.9,508.1 L526.9,507.1 L526.4,505.7 L526.5,504.7Z M718.5,240.1 L718.9,241.3 L718.6,243.9 L717.8,246.7 L717.3,245.4 L717.3,243.6 L717.8,241.3Z M401.7,130.7 L401.9,133.2 L400.6,136.7 L399.2,137.7 L398.6,136.1 L400.0,132.8Z M294.5,324.5 L294.7,326.4 L293.8,327.9 L292.6,328.2 L291.9,327.1 L292.9,325.6Z M590.4,175.0 L590.8,176.2 L590.2,179.1 L588.5,182.0 L586.6,184.4 L586.8,181.9 L585.7,181.5 L587.4,177.7 L589.3,175.0Z M372.2,89.6 L372.2,90.4 L372.1,91.1 L371.9,91.9 L371.5,92.3 L371.1,92.6 L371.4,91.5 L371.4,90.8 L371.7,90.1Z M951.2,107.2 L951.7,108.3 L951.9,109.4 L951.7,111.1 L950.9,110.4 L950.4,109.5 L950.6,108.0Z M517.4,133.2 L517.4,133.8 L516.5,134.7 L515.6,134.9 L514.7,134.9 L515.6,133.7 L517.0,132.9Z M1169.7,381.2 L1170.9,381.3 L1172.0,381.3 L1172.9,382.3 L1173.7,383.6 L1172.5,383.8 L1171.6,383.8 L1170.8,383.1 L1169.3,382.2Z M665.9,249.6 L666.1,250.3 L665.9,251.6 L665.2,253.1 L664.6,252.8 L664.4,252.2 L664.6,251.1 L665.2,250.2Z M570.0,167.7 L570.1,168.5 L570.5,169.2 L570.0,170.3 L569.3,170.4 L569.0,169.6 L569.1,168.9 L569.4,168.1Z M412.9,241.2 L413.2,241.8 L413.1,242.7 L413.0,243.7 L412.5,244.2 L412.3,243.5 L412.3,242.6 L412.4,241.5Z M684.9,266.1 L685.4,266.5 L683.6,268.7 L681.9,270.0 L681.5,269.7 L680.7,269.6 L682.4,267.6 L683.9,266.5Z M720.5,94.4 L721.0,95.0 L720.4,96.3 L719.6,96.6 L719.0,96.4 L719.3,95.5 L719.8,94.6Z M389.3,117.3 L389.7,118.0 L389.6,119.0 L389.1,119.5 L388.7,119.8 L388.1,119.7 L388.5,118.6 L388.8,117.9Z M288.8,112.5 L289.1,113.1 L289.7,114.0 L289.1,115.2 L288.4,115.1 L288.1,113.9 L288.3,112.9Z M383.1,482.6 L383.1,483.2 L381.8,484.3 L379.4,485.3 L378.8,484.9 L377.4,485.0 L378.5,483.9 L380.9,482.8 L383.1,482.0Z M524.6,313.0 L525.1,313.6 L525.5,314.3 L525.1,315.1 L524.6,315.3 L524.2,315.0 L523.9,314.3 L523.9,313.3Z M445.6,440.3 L445.9,440.5 L445.5,441.6 L444.5,442.4 L443.9,442.8 L444.1,441.9 L444.4,440.9 L445.4,440.0Z M464.2,406.0 L464.7,409.0 L465.1,412.7 L463.2,414.0 L462.5,411.3 L463.0,408.8Z M481.3,412.1 L481.7,413.5 L480.8,415.3 L479.8,416.0 L479.7,414.6 L480.3,413.3Z M742.4,483.6 L742.8,484.0 L741.8,484.4 L740.8,484.2 L740.5,484.0 L740.5,483.7 L740.7,483.3 L741.5,483.3 L742.2,483.3Z M640.5,331.8 L640.0,333.2 L639.3,334.8 L637.6,336.7 L637.2,336.1 L636.8,335.6 L638.1,333.9 L639.5,331.9Z M502.3,385.5 L503.2,386.6 L501.4,389.6 L499.7,392.7 L498.4,392.0 L499.0,388.8 L500.8,385.9Z M488.0,354.9 L489.4,357.3 L487.7,362.8 L484.9,366.2 L484.8,361.4 L486.0,357.3Z M618.1,404.0 L618.9,404.9 L618.1,408.2 L617.2,410.5 L616.5,408.7 L617.2,405.0Z M295.6,122.0 L296.1,121.9 L296.3,122.6 L296.3,123.1 L296.0,123.3 L295.7,123.3 L295.4,122.9 L295.4,122.5Z M280.9,307.3 L281.5,308.9 L281.4,312.3 L280.6,313.7 L279.8,314.9 L279.7,312.0 L280.1,309.6Z M750.9,543.7 L751.2,544.0 L751.4,544.8 L751.7,545.8 L751.4,546.3 L751.1,546.1 L750.9,545.5 L750.6,544.9 L750.8,544.3Z M402.4,219.2 L402.9,220.0 L402.6,220.8 L402.1,221.5 L401.4,221.4 L401.0,220.4 L401.6,219.5Z M451.0,152.7 L451.5,153.0 L450.4,153.9 L449.4,154.5 L448.3,154.8 L449.0,153.8 L449.8,153.1 L450.5,152.5Z M382.7,350.3 L383.0,350.8 L382.7,351.9 L381.9,352.0 L381.5,351.3 L382.0,350.2Z M321.5,228.0 L321.8,228.7 L321.9,229.9 L321.4,230.8 L320.8,231.1 L320.2,231.0 L320.5,229.6 L321.0,228.8Z M699.5,363.3 L700.3,363.7 L699.8,365.6 L699.4,367.5 L698.4,367.6 L697.2,368.4 L696.9,366.8 L697.8,364.9 L698.6,363.2Z M386.7,551.4 L386.1,552.8 L384.4,554.6 L383.1,554.7 L382.3,554.5 L383.6,553.2 L384.9,552.3Z M435.4,235.8 L435.7,236.1 L435.9,237.1 L435.7,238.3 L435.2,237.8 L434.7,237.3 L434.8,235.7Z M711.3,293.9 L711.0,294.7 L710.1,295.1 L709.4,294.9 L708.8,294.5 L709.4,293.7 L710.3,293.8Z M799.4,431.3 L798.3,430.3 L797.3,427.6 L797.6,426.5 L797.8,425.7 L798.9,427.1 L799.5,429.7Z M942.2,180.9 L941.5,181.7 L939.9,181.0 L938.5,180.2 L938.5,179.1 L939.5,178.7 L940.8,179.1 L941.5,180.0Z M990.9,95.3 L989.9,95.8 L989.3,96.6 L987.9,96.4 L987.1,96.1 L986.3,95.5 L987.8,95.1 L989.0,94.7 L990.4,94.8Z M435.0,504.3 L435.6,504.7 L436.2,505.9 L436.2,506.9 L435.8,507.9 L434.7,506.6 L434.4,504.8Z M676.5,474.1 L676.8,474.4 L677.2,475.0 L676.8,475.9 L676.4,476.6 L676.0,476.1 L675.6,475.7 L675.8,474.8 L676.2,474.4Z M646.0,120.7 L646.9,121.7 L647.9,122.9 L647.9,124.7 L648.1,126.1 L647.7,126.7 L646.7,126.1 L646.0,123.6 L645.7,121.8Z M750.4,292.8 L751.3,293.3 L752.0,294.8 L753.0,296.6 L752.7,297.9 L751.7,297.2 L750.9,297.1 L750.2,295.4 L749.5,293.2Z M499.9,127.9 L500.2,130.1 L499.4,133.7 L497.7,133.7 L497.4,132.0 L498.1,128.7Z M801.1,413.9 L801.3,414.5 L800.3,415.3 L799.4,415.5 L798.5,415.8 L798.6,415.2 L799.0,414.7 L799.5,414.1 L800.4,413.8Z M541.0,459.7 L540.5,461.2 L538.4,463.1 L536.3,464.6 L535.9,463.9 L537.6,462.1 L539.2,460.5Z M1114.9,497.3 L1114.8,498.8 L1113.1,501.0 L1111.8,502.0 L1110.8,502.4 L1109.9,502.1 L1111.6,499.8 L1113.4,497.8Z M408.7,112.4 L409.2,112.5 L409.7,113.3 L410.1,114.2 L410.2,115.0 L409.5,114.9 L408.8,113.8 L408.4,112.8Z M467.9,233.7 L468.1,234.0 L466.8,235.4 L464.2,237.1 L463.8,236.8 L463.5,236.6 L464.3,235.7 L465.9,234.2 L467.2,233.8Z M388.9,172.2 L389.5,172.8 L389.9,174.1 L389.7,175.2 L389.3,175.2 L388.9,174.2 L388.5,172.9Z M460.0,275.0 L459.7,275.9 L458.7,277.3 L458.3,276.9 L458.3,276.3 L459.1,275.3Z M1056.6,293.9 L1057.3,293.8 L1057.0,295.5 L1056.0,297.5 L1054.9,298.1 L1054.8,297.1 L1054.9,296.1 L1055.0,294.6 L1056.2,292.8Z M312.3,196.2 L312.9,196.2 L313.9,197.6 L313.7,198.4 L312.9,197.9 L312.3,196.9Z M732.7,559.8 L730.0,561.9 L727.8,563.0 L725.2,564.1 L724.7,563.3 L723.1,562.6 L727.0,561.1 L729.8,560.0Z M396.3,310.4 L396.2,311.8 L394.7,313.2 L393.7,313.2 L393.9,312.1 L394.9,310.9Z M500.1,346.8 L499.3,347.4 L498.6,347.9 L497.7,347.8 L497.1,347.5 L497.4,346.9 L498.3,346.5 L499.2,346.6Z M452.6,102.0 L452.4,103.5 L449.8,104.7 L448.4,104.9 L448.8,103.6 L450.9,102.1Z M353.6,211.1 L354.0,211.3 L354.6,211.8 L354.8,212.6 L354.9,213.5 L354.2,213.2 L353.6,212.4 L353.3,211.5Z M708.8,558.1 L707.2,558.9 L704.6,559.4 L702.1,558.7 L701.5,557.5 L704.7,557.1 L708.6,556.7Z M579.7,324.3 L580.9,324.6 L581.9,326.8 L582.1,328.7 L581.9,330.0 L581.1,329.8 L580.0,330.0 L579.3,327.6 L579.4,326.0Z M829.1,133.2 L829.7,133.1 L830.7,133.7 L831.8,134.5 L832.0,135.3 L830.9,135.0 L830.0,134.6 L829.3,133.9Z M782.4,433.0 L783.9,433.8 L784.5,437.1 L785.0,440.0 L784.2,442.0 L782.8,439.7 L781.4,437.7 L781.6,434.7Z M604.2,265.5 L604.7,266.1 L603.4,267.4 L602.8,267.3 L602.8,266.7 L603.6,265.8Z M365.1,391.5 L365.3,392.1 L365.0,393.0 L364.1,393.7 L363.5,393.5 L363.3,392.9 L363.8,392.1 L364.5,391.7Z M566.3,252.5 L566.0,256.8 L563.9,261.0 L561.6,263.2 L562.1,259.7 L563.3,255.3Z M383.1,178.4 L383.5,178.7 L383.4,179.4 L383.1,179.9 L382.5,180.6 L382.1,180.1 L382.4,179.2 L382.7,178.5Z M1000.5,438.5 L1001.8,438.5 L1003.7,440.2 L1005.6,441.9 L1004.3,441.8 L1002.9,441.4 L1001.0,439.8Z M508.5,397.4 L508.7,398.2 L506.9,399.7 L505.6,399.7 L506.4,398.4 L507.7,397.0Z M550.6,544.4 L550.8,544.7 L550.5,545.9 L550.0,546.7 L549.5,546.9 L549.7,545.7 L550.2,544.4Z M365.7,295.6 L366.2,295.6 L365.9,297.1 L365.3,298.2 L364.6,299.7 L364.2,299.2 L364.5,297.8 L364.7,296.7 L365.2,295.9Z M401.0,148.2 L402.3,149.2 L402.6,152.1 L402.4,154.6 L401.1,152.7 L400.4,149.9Z M519.5,77.4 L519.8,77.9 L519.6,78.9 L519.6,79.9 L519.1,79.9 L518.6,80.5 L518.4,79.6 L518.7,78.6 L519.0,78.1Z M501.3,498.2 L502.5,499.1 L503.9,501.5 L503.8,504.2 L501.9,502.3 L500.4,499.3Z M524.7,292.7 L525.5,293.5 L524.2,295.3 L522.8,295.2 L523.0,293.8 L523.5,291.9Z M610.3,199.7 L610.6,200.7 L610.6,201.6 L610.1,202.3 L609.6,201.7 L609.6,200.5Z M754.1,217.2 L753.6,219.0 L751.0,220.1 L749.1,220.5 L749.9,218.8 L752.0,217.3Z M533.6,526.7 L533.9,527.6 L534.6,528.6 L533.6,529.6 L532.9,531.5 L532.0,530.9 L532.2,529.2 L532.1,528.0 L532.7,526.3Z M855.4,459.4 L855.0,461.7 L853.5,464.5 L850.8,465.4 L848.5,466.6 L848.2,465.2 L848.4,463.5 L850.4,461.4 L853.2,459.1Z M584.8,226.1 L585.1,226.3 L585.0,226.9 L584.5,227.7 L584.0,227.3 L583.6,227.3 L583.5,226.8 L583.9,226.2 L584.5,225.7Z M638.3,178.8 L637.8,180.1 L636.0,180.9 L634.3,180.9 L634.2,179.9 L635.2,178.9 L636.9,178.4Z M1003.9,524.1 L1003.7,526.0 L1001.1,527.1 L999.2,527.2 L997.2,526.5 L999.4,524.3 L1002.1,523.6Z M468.6,402.5 L468.3,404.3 L465.2,407.2 L462.5,408.5 L463.3,405.9 L466.7,402.8Z M418.1,277.6 L418.3,278.9 L417.7,280.0 L417.2,281.6 L416.1,281.6 L415.9,280.4 L416.1,279.2 L416.9,278.2Z M1117.4,577.0 L1115.4,577.5 L1112.3,577.5 L1109.8,576.7 L1111.7,575.7 L1116.3,575.9Z M523.2,101.5 L523.7,103.1 L522.2,107.5 L518.8,110.6 L517.6,109.2 L518.9,105.2 L521.6,102.2Z M689.9,115.3 L688.7,116.6 L686.8,118.3 L685.0,118.6 L682.0,119.9 L683.7,118.2 L685.8,116.5 L688.1,115.8Z M374.7,180.0 L375.6,180.5 L376.0,181.9 L375.7,182.8 L374.8,182.6 L374.6,181.1Z M274.1,193.3 L274.6,193.7 L275.0,195.2 L274.7,197.0 L274.2,197.6 L273.5,197.5 L273.5,195.3 L273.5,193.2Z M1048.5,250.9 L1049.3,250.7 L1050.0,251.9 L1049.4,252.4 L1048.6,252.8 L1048.1,251.6Z M379.6,234.8 L380.1,235.3 L380.2,236.6 L380.1,238.2 L379.4,239.1 L379.0,237.8 L378.8,236.5 L379.1,235.2Z M705.7,579.4 L706.0,579.8 L706.0,580.6 L705.2,581.0 L704.9,580.5 L705.0,579.9 L705.3,579.5Z M468.5,416.8 L469.0,416.9 L468.7,417.7 L468.1,418.1 L467.7,418.1 L467.3,417.7 L467.7,417.0 L468.1,416.3Z M471.2,415.0 L470.8,417.5 L470.0,419.6 L468.4,421.2 L466.6,422.4 L466.2,420.8 L464.9,419.7 L467.1,417.5 L469.2,415.0Z M567.2,331.7 L567.5,332.2 L566.4,333.1 L565.5,333.5 L564.8,333.5 L565.7,332.3 L566.7,331.6Z M869.9,75.2 L871.1,76.0 L872.1,77.9 L871.0,79.0 L870.1,79.8 L869.2,78.3 L869.1,76.5Z M350.1,137.0 L349.4,139.1 L349.3,140.4 L348.1,141.7 L347.1,142.8 L346.0,143.4 L346.3,141.6 L347.6,139.5 L348.6,138.9Z M408.6,352.8 L409.7,353.2 L407.7,355.7 L405.9,358.1 L405.5,356.8 L406.4,354.8 L407.8,352.2Z M463.3,478.1 L463.9,479.1 L464.0,480.6 L463.4,481.9 L462.5,482.4 L461.7,480.7 L462.5,478.8Z M413.5,203.9 L414.4,203.9 L415.3,204.7 L416.2,205.6 L415.6,205.9 L414.7,205.5 L413.6,204.7Z M296.4,427.3 L296.7,427.7 L296.8,428.4 L296.2,428.5 L295.5,428.6 L295.4,428.0 L295.5,427.5 L295.9,426.9Z M666.7,491.4 L667.6,491.3 L667.6,493.9 L667.5,496.6 L666.6,495.6 L666.2,493.9 L666.1,491.9Z M530.4,88.8 L531.1,89.6 L531.5,91.5 L531.3,93.2 L531.1,94.3 L530.5,94.8 L530.2,93.1 L529.8,91.7 L530.0,90.4Z M370.9,190.2 L371.3,190.4 L371.0,191.4 L370.7,191.9 L370.4,191.9 L370.2,191.3 L370.6,190.4Z M662.6,185.3 L663.5,185.6 L664.1,186.8 L663.7,187.5 L663.3,187.8 L662.7,187.3 L662.1,186.2Z M570.2,378.6 L570.4,379.2 L570.6,380.2 L570.0,381.0 L569.5,381.8 L569.2,381.1 L569.4,379.9 L569.7,378.7Z M354.0,386.1 L353.6,387.0 L352.1,389.2 L350.8,389.5 L350.5,389.1 L351.1,387.8 L353.7,385.4Z M349.6,124.8 L349.8,127.1 L348.6,130.7 L347.1,132.4 L346.9,130.2 L348.2,127.4Z M292.0,79.4 L292.3,80.3 L291.2,81.8 L289.2,82.7 L288.1,82.4 L288.5,81.1 L289.7,79.9 L291.3,78.8Z M352.3,296.1 L351.4,299.0 L348.7,302.1 L346.8,303.4 L346.3,302.7 L346.8,300.7 L349.3,298.4Z M1056.9,501.3 L1057.3,502.2 L1057.3,503.8 L1056.6,504.6 L1056.1,503.8 L1056.2,502.0Z M286.8,524.9 L288.0,526.3 L288.0,528.5 L287.3,530.1 L286.2,530.2 L285.7,528.4 L285.5,526.1Z M972.9,106.2 L972.2,107.5 L971.0,109.1 L968.5,111.3 L966.7,111.8 L968.3,109.6 L969.7,107.7 L971.6,106.7Z M616.2,161.8 L616.6,162.1 L616.3,163.3 L615.8,163.9 L615.5,164.3 L615.1,164.1 L615.2,163.0 L615.8,161.7Z M953.2,410.9 L954.2,410.5 L954.6,412.5 L954.0,414.2 L953.4,415.2 L952.5,415.8 L951.5,414.8 L951.8,412.5 L952.3,410.7Z M302.9,104.6 L303.1,105.2 L301.9,106.1 L300.9,106.3 L300.1,106.3 L300.2,105.8 L301.2,105.1 L302.4,104.2Z M693.1,272.3 L693.7,272.4 L694.6,273.4 L695.0,275.0 L694.7,275.5 L694.1,275.7 L693.1,274.2 L692.9,272.8Z M380.4,130.6 L380.7,131.0 L380.1,132.1 L379.3,133.0 L378.5,133.5 L378.1,133.2 L378.6,132.2 L379.1,131.3 L379.8,130.9Z M355.8,117.9 L357.3,118.5 L359.0,122.5 L360.1,125.8 L360.7,129.0 L359.9,130.1 L357.9,127.3 L356.1,123.4 L355.1,119.4Z M578.8,376.1 L579.2,376.3 L579.6,377.3 L579.0,378.1 L578.5,378.6 L578.1,378.2 L578.0,377.0 L578.5,376.3Z M790.9,70.3 L791.1,71.6 L788.2,74.5 L784.0,75.9 L785.4,73.2 L786.5,71.3 L790.2,69.0Z M363.1,368.0 L363.8,368.5 L364.3,369.4 L364.4,370.8 L363.8,371.1 L363.3,371.6 L362.8,370.7 L362.3,369.7 L362.8,369.0Z M532.9,117.7 L533.5,118.0 L533.2,119.7 L533.1,120.9 L532.6,122.1 L532.1,121.6 L531.6,121.0 L531.9,119.4 L532.4,118.3Z M1065.6,491.3 L1065.7,492.4 L1063.8,493.2 L1061.9,494.3 L1061.9,493.1 L1062.9,492.0 L1064.3,491.5Z M297.4,394.0 L297.4,394.6 L297.5,395.2 L297.2,395.9 L296.7,396.2 L296.6,395.7 L296.6,394.9 L297.0,394.5Z M848.2,99.7 L848.5,101.1 L848.6,103.1 L847.2,103.9 L846.6,102.3 L847.2,100.6Z M634.9,516.0 L634.9,516.6 L634.6,517.7 L634.0,518.0 L633.6,517.9 L633.8,517.1 L634.4,516.1Z M515.1,576.5 L515.3,577.0 L514.9,578.1 L513.9,578.9 L513.6,578.4 L512.9,578.4 L513.9,577.3 L514.5,576.4Z M660.8,293.9 L661.3,295.2 L660.7,297.0 L659.7,298.0 L659.2,296.7 L659.9,295.2Z M594.3,175.5 L594.7,175.8 L593.9,176.3 L593.3,176.8 L592.7,176.9 L592.4,176.6 L592.9,176.1 L593.4,175.6 L594.2,175.0Z M751.1,407.7 L752.5,408.4 L750.7,411.2 L748.5,412.1 L747.3,411.3 L747.8,408.9 L750.2,406.5Z M952.6,198.2 L952.3,198.8 L951.0,199.3 L950.3,199.3 L949.6,199.3 L949.9,198.8 L950.7,198.3 L951.9,198.0Z M361.6,324.4 L362.6,324.6 L362.5,326.3 L361.6,327.6 L360.7,327.8 L360.2,327.0 L360.3,325.7 L360.7,324.1Z M373.4,422.8 L374.2,422.9 L375.1,423.7 L375.5,424.9 L374.8,425.4 L373.7,424.8 L373.4,423.7Z M1173.0,389.9 L1173.8,390.2 L1174.3,392.4 L1174.4,394.9 L1173.4,394.4 L1172.7,394.5 L1172.5,392.6 L1172.4,390.7Z M1066.3,512.5 L1066.4,513.1 L1066.0,514.0 L1065.3,514.6 L1064.7,514.7 L1064.7,514.1 L1064.9,513.2 L1065.8,512.3Z M346.5,385.2 L347.2,385.4 L347.8,386.0 L348.2,386.8 L348.4,387.6 L347.7,387.3 L347.1,386.5 L346.4,385.8Z M652.1,98.2 L651.8,98.8 L651.6,99.2 L651.2,99.6 L650.6,100.0 L650.4,99.7 L650.6,99.1 L651.1,98.6 L651.5,98.4Z M393.6,414.4 L393.6,415.1 L393.3,416.1 L392.7,417.2 L392.3,417.1 L392.1,416.7 L392.6,415.7 L393.1,414.6Z M284.4,348.7 L284.6,349.2 L284.2,350.3 L283.4,350.1 L283.3,349.4 L283.7,348.3Z M539.7,317.0 L539.8,317.2 L540.0,317.7 L539.4,318.5 L538.9,318.6 L538.8,318.1 L538.4,317.8 L539.1,317.3 L539.5,316.6Z M434.8,134.4 L434.7,135.9 L434.0,137.6 L432.9,139.2 L432.7,138.4 L432.8,137.2 L433.7,135.2Z M289.9,558.4 L289.8,559.3 L289.1,560.3 L288.1,561.2 L287.4,561.1 L287.4,560.3 L288.2,559.4 L289.0,558.7Z M560.3,500.6 L560.1,501.3 L559.3,502.4 L558.3,503.1 L557.1,504.0 L556.9,503.6 L557.4,502.6 L558.4,501.5 L559.2,501.1Z M359.9,560.8 L360.6,561.2 L360.2,563.2 L359.6,563.6 L359.0,563.2 L359.2,561.1Z M611.9,129.9 L612.5,130.3 L612.7,131.1 L612.4,131.8 L612.0,132.1 L611.5,132.1 L611.4,131.2 L611.4,130.3Z M432.3,359.5 L432.1,360.5 L432.3,361.2 L431.6,362.1 L431.0,362.5 L430.9,362.0 L430.9,361.5 L431.1,360.7 L431.8,359.8Z M281.7,175.8 L282.0,179.2 L280.5,184.2 L277.5,185.5 L277.2,182.0 L279.0,177.9Z M1096.1,531.8 L1096.0,533.2 L1095.0,535.0 L1094.2,535.1 L1093.9,534.5 L1095.0,532.7Z M481.6,571.1 L482.0,572.0 L482.2,573.6 L481.7,574.5 L481.4,574.4 L481.2,573.4 L481.1,571.5Z M377.6,181.2 L378.4,181.8 L378.3,183.3 L377.0,184.1 L376.2,183.6 L375.1,183.1 L375.4,181.5 L376.8,181.1Z M663.9,240.2 L664.2,242.5 L658.8,245.8 L655.0,245.8 L657.0,242.3 L661.5,239.9Z M307.9,335.9 L308.7,335.8 L308.6,339.2 L308.6,342.5 L307.8,342.4 L307.0,339.7 L307.3,336.3Z M537.9,160.9 L536.9,161.2 L535.8,160.8 L535.3,160.1 L536.0,159.8 L537.4,160.1Z M696.3,227.4 L696.8,227.8 L696.3,230.0 L695.7,231.2 L695.0,231.8 L694.9,229.9 L695.6,227.7Z M447.5,514.6 L448.1,514.7 L448.3,515.3 L448.6,516.0 L448.1,516.5 L447.5,516.6 L447.1,516.0 L447.0,515.5 L446.9,514.8Z M390.0,231.4 L392.3,231.6 L394.5,233.4 L395.1,235.5 L394.1,236.3 L391.9,236.4 L390.3,233.8Z M596.0,113.6 L596.7,113.9 L596.7,116.1 L596.7,118.5 L596.0,120.3 L595.2,120.1 L594.8,118.2 L594.7,115.8 L595.3,113.7Z M395.9,334.2 L396.2,334.8 L396.3,335.5 L396.0,335.9 L395.6,336.1 L395.5,335.4 L395.6,334.7Z M453.7,164.9 L454.0,165.1 L454.0,166.3 L453.7,167.3 L453.3,167.7 L453.1,167.2 L453.3,166.2 L453.4,165.2Z M1157.9,358.7 L1157.4,359.3 L1156.9,359.7 L1156.2,359.7 L1155.8,359.4 L1156.0,358.9 L1156.5,358.4 L1157.2,358.4Z M392.4,192.9 L392.1,193.8 L390.5,194.8 L389.8,195.0 L389.6,194.4 L391.4,193.0Z M445.2,472.3 L445.1,473.4 L444.3,475.0 L443.1,477.0 L441.3,479.1 L440.9,478.4 L442.3,475.8 L443.2,474.3 L444.2,473.2Z M1190.4,357.6 L1190.9,357.9 L1191.3,359.3 L1191.1,361.2 L1190.3,360.7 L1189.7,359.5 L1189.7,357.5Z M758.6,88.3 L759.1,88.3 L759.8,89.5 L760.0,90.3 L760.2,91.2 L759.6,90.8 L759.0,89.9 L758.8,89.1Z M1095.0,353.3 L1094.9,354.0 L1093.5,355.6 L1091.6,357.1 L1090.2,357.7 L1090.4,356.5 L1092.6,354.6 L1094.3,353.2Z M491.2,110.7 L491.2,111.4 L490.9,112.4 L490.5,113.5 L490.1,113.6 L489.9,113.6 L490.0,112.9 L490.2,112.0 L490.7,111.0Z M362.0,368.8 L362.7,369.3 L363.4,371.1 L363.1,372.4 L362.1,371.5 L361.4,369.3Z M692.3,568.3 L692.5,568.2 L692.9,568.8 L692.9,569.6 L692.9,570.3 L692.6,570.3 L692.3,570.1 L691.8,569.0 L691.8,568.0Z M276.0,157.1 L276.5,158.2 L275.8,160.3 L275.0,160.7 L274.9,159.6 L275.2,158.3Z M505.0,499.8 L505.3,500.4 L504.0,502.2 L502.9,504.1 L502.5,503.6 L501.6,503.6 L503.0,501.5 L504.2,500.1Z M537.9,520.4 L537.8,521.4 L537.7,522.3 L537.2,522.8 L536.8,522.9 L537.0,522.0 L537.4,521.0Z M1119.0,522.9 L1119.5,523.9 L1119.0,526.1 L1118.0,527.7 L1117.3,527.5 L1117.1,526.7 L1117.1,525.4 L1118.0,523.8Z M508.5,142.6 L508.8,143.4 L508.8,144.3 L508.7,144.9 L508.3,145.4 L508.0,144.4 L508.2,143.2Z M668.5,108.6 L668.6,109.1 L668.7,109.8 L668.2,110.4 L667.8,110.8 L667.6,110.3 L667.8,109.5 L668.1,108.8Z M828.0,450.0 L827.6,450.6 L826.8,451.1 L825.7,451.4 L824.6,451.3 L825.1,450.6 L824.9,449.9 L826.5,449.6 L827.8,449.4Z M680.1,516.7 L680.3,516.6 L680.8,517.0 L681.2,517.9 L680.9,518.1 L680.8,518.5 L680.4,518.0 L680.1,517.4 L680.0,516.9Z M715.4,277.4 L716.8,277.4 L718.5,281.1 L718.8,284.3 L717.4,283.9 L716.1,281.7 L715.1,279.1Z M552.5,477.8 L552.6,478.6 L551.6,479.9 L550.4,481.0 L550.6,479.6 L551.7,477.9Z M396.1,92.6 L396.2,93.5 L396.0,94.6 L395.7,95.7 L395.2,96.6 L394.9,96.5 L395.0,95.4 L395.1,94.3 L395.6,93.2Z M416.0,269.7 L416.4,269.6 L416.1,270.8 L415.9,272.1 L415.6,271.9 L415.2,271.8 L415.4,270.7 L415.6,269.6Z M575.8,549.1 L575.9,548.5 L576.4,549.0 L576.8,549.3 L576.8,549.7 L576.6,550.0 L576.2,550.2 L575.8,549.8 L575.2,549.5Z M486.6,374.4 L487.3,374.2 L486.5,375.8 L485.7,377.1 L485.0,377.4 L485.1,376.4 L485.5,375.2 L486.4,373.8Z M1091.7,470.3 L1090.4,471.1 L1088.5,471.3 L1086.0,471.2 L1085.9,470.1 L1087.1,469.6 L1088.5,469.2 L1091.1,469.2Z M767.2,475.8 L766.9,476.6 L765.8,477.3 L764.8,478.0 L763.9,478.0 L764.7,477.1 L765.1,476.3 L766.3,475.8Z M313.9,306.1 L314.1,306.9 L313.9,308.2 L313.3,309.3 L312.8,309.2 L312.6,308.0 L313.4,306.0Z M761.5,117.4 L760.7,117.3 L760.2,116.4 L759.9,115.5 L760.7,116.0 L761.2,116.6Z M376.6,413.5 L376.9,414.3 L377.1,415.7 L376.4,416.5 L375.9,416.4 L375.7,415.4 L375.9,414.1Z M344.7,476.5 L345.2,476.9 L345.7,477.6 L346.0,478.8 L345.5,479.1 L345.1,479.6 L344.5,479.2 L344.3,477.9 L344.1,476.7Z M513.7,425.4 L514.2,426.1 L514.0,428.5 L513.5,428.8 L513.2,428.0 L513.3,426.4Z M613.5,574.1 L615.5,575.7 L616.8,579.0 L618.1,582.5 L616.5,581.7 L615.0,579.9 L613.1,576.4Z M470.8,103.6 L471.3,103.7 L470.7,104.6 L470.2,105.2 L469.7,105.4 L469.6,105.1 L469.6,104.7 L469.8,103.9 L470.4,103.6Z M405.5,279.8 L405.9,280.6 L405.8,281.6 L405.7,282.5 L405.2,282.6 L404.8,281.7 L405.0,280.5Z M324.2,93.9 L324.2,94.9 L323.9,96.0 L322.9,95.9 L322.6,95.0 L323.2,94.1Z M279.2,116.7 L279.3,117.2 L278.1,118.7 L277.0,119.3 L277.3,118.2 L278.7,116.5Z M753.5,455.4 L755.2,455.3 L757.9,456.0 L760.5,457.4 L761.6,458.6 L759.9,458.7 L757.3,457.6 L754.4,456.6Z M553.1,139.2 L553.5,139.9 L553.1,141.3 L552.6,142.4 L552.0,142.2 L552.2,141.0 L552.5,139.9Z M345.6,325.0 L345.1,328.3 L345.2,330.2 L343.9,332.5 L342.5,333.9 L341.9,332.3 L342.8,329.4 L344.0,327.3Z M283.5,491.5 L284.7,492.4 L283.7,495.0 L282.1,496.7 L280.7,496.9 L280.1,495.6 L280.7,493.4 L282.1,492.0Z M342.6,549.2 L344.1,548.8 L345.2,551.5 L345.4,553.9 L344.0,554.7 L341.8,553.2 L341.7,550.3Z M334.6,476.8 L335.1,477.4 L335.1,478.2 L334.7,479.1 L334.0,479.1 L333.7,478.2 L334.0,477.4Z M859.3,426.8 L858.6,429.7 L858.2,431.7 L856.8,432.5 L855.3,433.1 L855.8,430.5 L857.3,427.9Z M457.0,421.4 L457.0,421.8 L456.5,422.4 L455.7,422.5 L454.8,422.5 L454.9,421.8 L456.0,421.3 L457.0,420.7Z M294.7,392.2 L296.4,393.3 L298.6,395.7 L298.6,398.2 L298.5,399.6 L297.4,399.4 L295.8,397.2 L294.5,394.2Z M927.4,140.3 L927.6,141.2 L925.7,143.9 L923.8,146.3 L922.9,146.1 L924.3,143.3 L926.2,141.2Z M421.5,437.8 L422.0,438.5 L422.0,439.7 L421.8,441.1 L421.1,441.3 L420.5,441.6 L420.4,440.5 L420.3,439.4 L420.9,438.9Z M749.2,204.7 L749.5,205.4 L748.6,206.0 L747.7,206.4 L747.7,205.6 L747.7,204.9 L748.6,204.5Z M503.6,292.9 L504.1,293.8 L501.5,295.2 L499.3,296.0 L500.5,294.2 L502.7,292.6Z M629.7,530.2 L628.9,531.7 L627.6,533.4 L625.9,535.1 L624.2,536.6 L625.0,535.1 L625.2,534.4 L626.7,532.7 L628.4,531.0Z M1160.4,355.0 L1161.0,355.7 L1160.9,359.6 L1160.0,360.9 L1159.5,359.1 L1159.7,355.8Z M511.9,412.3 L511.4,415.0 L510.9,416.9 L509.8,419.2 L509.6,417.8 L509.7,416.5 L510.6,414.3Z M358.8,127.6 L357.9,130.4 L356.7,133.2 L354.9,135.0 L355.8,132.0 L357.1,129.2Z M374.2,103.8 L375.0,104.6 L371.1,107.4 L367.3,110.0 L366.4,109.3 L370.1,106.0 L373.2,103.4Z M745.4,326.1 L746.3,325.4 L747.5,327.0 L748.0,328.7 L746.9,328.8 L745.8,328.2 L745.0,326.9Z M1049.0,460.2 L1050.0,460.9 L1049.2,462.7 L1048.0,464.2 L1047.0,463.6 L1046.7,461.8 L1047.9,460.1Z M691.8,420.8 L692.4,420.8 L692.2,421.9 L691.6,422.8 L691.0,422.9 L691.1,422.1 L691.1,421.5 L691.5,420.9Z M372.3,307.7 L372.5,308.4 L372.8,308.9 L372.5,309.5 L372.0,309.5 L371.4,309.8 L371.0,309.2 L371.4,308.5 L371.7,308.0Z M699.2,474.0 L699.0,474.4 L698.7,474.9 L697.9,475.3 L697.6,475.0 L697.5,474.8 L697.8,474.4 L698.2,473.9 L698.8,473.9Z M627.2,418.9 L628.2,419.6 L629.0,422.1 L628.7,423.5 L627.7,422.4 L627.2,420.4Z M562.0,491.1 L562.4,491.6 L561.9,492.7 L561.7,493.5 L561.1,494.5 L560.8,493.6 L560.3,493.3 L560.8,492.3 L561.3,491.4Z M606.3,341.9 L607.6,343.3 L607.4,346.3 L606.6,347.4 L605.4,346.8 L605.7,344.1Z M1180.2,386.0 L1180.2,387.5 L1177.5,390.5 L1174.6,392.8 L1173.8,392.2 L1174.0,390.9 L1175.7,388.6 L1178.8,385.8Z M742.5,477.6 L741.6,478.9 L739.8,480.2 L737.8,480.8 L737.9,479.9 L738.3,478.4 L740.9,477.8Z M795.0,256.8 L796.2,257.2 L798.5,259.3 L799.5,261.5 L797.3,260.1 L795.6,258.1Z M666.3,278.4 L666.5,278.7 L666.5,279.2 L666.3,279.8 L665.8,280.1 L665.5,279.8 L665.2,279.3 L665.5,278.6 L666.0,278.1Z M624.1,77.9 L623.7,77.0 L626.3,77.7 L628.9,78.6 L629.5,79.5 L627.8,79.6 L625.9,79.1 L623.3,78.3Z M656.5,205.9 L656.7,207.5 L655.5,210.1 L653.4,211.9 L652.0,212.0 L652.0,210.5 L653.2,208.3 L654.7,207.2Z M301.8,112.0 L302.3,112.8 L301.5,113.8 L300.3,114.9 L299.3,114.5 L298.2,114.0 L298.8,112.7 L299.9,111.8 L301.2,111.4Z M279.4,396.8 L279.6,398.1 L279.7,399.7 L279.2,400.4 L278.7,399.6 L278.9,397.7Z M409.7,512.7 L409.7,513.8 L408.7,515.9 L406.8,517.0 L405.9,516.9 L405.9,515.9 L406.5,513.9 L408.9,512.1Z M480.9,153.2 L481.7,153.2 L481.3,154.1 L481.1,154.9 L480.4,154.7 L479.9,154.0 L480.3,153.3Z M565.2,566.1 L566.9,568.1 L568.8,571.9 L567.6,574.9 L566.0,575.8 L564.1,572.5 L563.4,567.4Z M409.4,144.8 L409.9,145.3 L410.4,146.3 L409.8,147.2 L409.4,147.7 L408.9,147.3 L408.8,146.3 L408.9,145.3Z M526.8,124.9 L527.3,125.0 L528.1,125.0 L527.9,125.8 L527.5,126.3 L526.9,126.2 L526.6,125.8 L526.3,125.2Z M595.0,237.4 L595.5,238.0 L595.0,239.0 L594.3,239.4 L594.0,239.0 L594.0,238.4 L594.2,237.4Z M1032.9,428.5 L1033.1,429.7 L1032.0,431.5 L1030.2,431.8 L1030.0,429.9 L1031.6,428.5Z M879.7,499.0 L878.2,499.4 L876.9,499.8 L874.1,499.6 L872.0,499.2 L873.8,498.8 L874.7,498.5 L877.0,498.1 L879.2,498.5Z M343.8,252.7 L344.7,252.7 L344.7,254.9 L344.4,256.5 L343.8,257.4 L343.1,256.7 L343.1,254.9 L343.0,252.8Z M1154.8,354.8 L1154.5,355.9 L1154.2,356.6 L1153.8,357.6 L1153.3,358.1 L1152.8,358.4 L1153.3,357.2 L1153.6,356.3 L1154.1,355.6Z M499.7,286.5 L500.4,286.9 L500.9,287.7 L500.6,288.5 L500.4,289.3 L499.9,288.9 L499.3,288.9 L499.1,288.0 L499.3,287.2Z M452.7,565.1 L452.6,565.8 L452.3,566.5 L451.7,566.8 L450.7,567.4 L451.0,566.4 L451.3,565.6 L452.0,565.4Z M529.2,304.1 L530.9,304.9 L531.5,307.6 L531.1,309.9 L530.0,310.2 L528.7,310.5 L528.4,308.0 L528.3,305.9Z M375.6,134.3 L376.4,134.8 L377.2,135.1 L377.0,135.8 L376.9,136.5 L376.1,135.9 L375.7,135.2Z M784.8,389.4 L785.2,389.8 L785.8,391.0 L785.5,392.0 L785.1,392.7 L784.4,391.3 L784.4,389.8Z M1117.8,553.2 L1117.5,553.6 L1116.9,554.1 L1116.0,554.0 L1116.0,553.4 L1116.4,552.8 L1117.6,552.6Z M292.3,255.0 L293.0,255.1 L292.8,256.2 L292.3,256.9 L291.7,256.3 L291.9,255.4Z M853.3,97.9 L852.8,99.7 L851.6,101.3 L849.7,103.1 L849.8,101.3 L849.9,100.0 L851.5,98.9Z M1105.7,369.4 L1105.9,370.6 L1106.0,371.8 L1106.1,373.9 L1105.6,374.9 L1105.1,375.0 L1104.7,373.9 L1105.1,371.7 L1105.3,370.4Z M650.0,309.2 L649.8,310.5 L647.9,313.0 L645.7,313.4 L644.1,313.2 L646.0,310.6 L648.9,308.6Z M910.0,276.0 L908.6,277.8 L907.4,279.0 L905.2,280.7 L905.0,279.4 L904.6,278.5 L906.2,277.2 L908.1,276.2Z M1053.5,564.2 L1054.0,564.3 L1054.2,566.1 L1054.1,567.6 L1053.7,567.5 L1053.3,566.3 L1053.3,564.9Z M363.6,159.8 L362.3,162.9 L360.2,165.9 L358.4,165.3 L358.5,163.5 L360.6,161.3Z M590.5,348.5 L590.8,350.3 L588.3,353.9 L586.4,353.6 L585.8,351.8 L588.8,349.0Z M349.4,412.2 L349.7,412.4 L349.7,413.2 L349.2,414.2 L348.5,414.6 L348.3,414.1 L348.2,413.5 L348.5,412.8 L349.0,411.7Z M601.2,536.7 L601.6,537.7 L601.1,539.5 L600.4,540.8 L599.7,540.8 L600.0,539.1 L600.3,537.4Z M355.9,211.5 L355.7,211.9 L354.7,212.1 L353.9,212.2 L353.7,211.8 L353.5,211.5 L354.1,211.3 L354.6,211.1 L355.3,211.2Z M636.0,493.7 L635.6,494.4 L635.5,495.0 L634.7,495.3 L634.3,495.0 L634.0,494.7 L633.9,494.1 L634.7,493.7 L635.6,493.2Z M744.5,261.7 L744.6,262.2 L744.5,262.8 L743.9,263.0 L743.5,262.9 L743.2,262.2 L743.9,261.5Z M514.6,226.5 L514.8,227.4 L515.0,228.1 L515.0,229.0 L514.7,229.7 L514.2,230.1 L514.0,229.1 L513.9,227.9 L514.2,226.8Z M783.1,451.1 L783.8,451.1 L784.6,451.3 L784.8,452.0 L784.5,452.3 L783.8,452.6 L783.2,451.8Z M494.8,461.4 L495.5,462.1 L496.1,464.1 L495.7,466.1 L494.9,466.2 L494.2,464.2 L494.0,461.7Z M659.1,434.1 L659.4,435.3 L658.4,437.8 L656.5,440.1 L655.8,439.2 L655.7,438.1 L656.5,436.5 L657.7,434.9Z M439.9,357.3 L439.4,358.8 L437.2,361.1 L435.0,362.5 L434.9,361.4 L436.1,359.7 L438.3,357.7Z M524.4,364.9 L525.2,365.4 L523.4,369.2 L521.7,371.5 L519.5,374.2 L520.6,370.7 L521.4,368.1 L523.6,364.0Z M550.2,409.3 L551.4,409.9 L551.7,413.6 L550.9,415.7 L549.6,413.8 L549.3,410.3Z M429.8,556.8 L430.1,556.9 L430.0,557.6 L429.4,558.0 L428.8,558.1 L428.7,557.6 L429.2,557.1 L429.6,556.5Z M851.4,344.1 L851.3,346.7 L848.3,350.0 L846.8,349.8 L847.2,348.0 L848.9,344.7Z M743.0,80.0 L742.2,81.7 L739.9,83.8 L738.3,83.9 L738.1,83.2 L739.2,82.1 L741.2,80.3Z M300.4,218.3 L300.6,219.1 L300.5,220.3 L299.5,221.0 L299.1,220.3 L298.9,219.5 L299.7,218.7Z M1062.1,464.1 L1062.8,464.1 L1063.6,466.3 L1064.6,468.8 L1064.7,470.8 L1063.3,469.0 L1062.0,466.9 L1061.1,463.7Z M400.0,208.7 L400.1,209.4 L400.0,210.1 L399.4,210.6 L398.7,210.6 L398.5,210.0 L398.2,209.5 L398.9,209.2 L399.3,208.9Z M707.4,252.7 L706.5,253.2 L705.2,253.5 L704.1,252.9 L705.2,252.2 L706.9,252.0Z M292.2,128.6 L292.2,129.1 L292.4,129.5 L292.0,130.2 L291.6,130.5 L291.2,130.5 L291.3,129.8 L291.3,129.1 L291.8,128.7Z M596.4,230.0 L595.6,230.9 L593.9,231.5 L592.4,231.4 L592.0,230.7 L593.8,230.2 L594.9,229.9Z M398.6,530.3 L398.7,530.9 L398.6,531.4 L398.4,532.1 L397.9,532.2 L397.9,531.6 L397.7,531.1 L398.2,530.8Z M373.4,350.7 L374.1,350.9 L373.5,352.5 L372.6,353.7 L371.9,353.7 L371.5,353.2 L372.2,351.9 L372.8,350.5Z M407.7,145.3 L408.4,146.6 L408.9,147.5 L408.6,148.6 L408.5,150.3 L407.5,149.9 L406.7,149.1 L406.8,147.7 L406.9,146.2Z M717.3,543.8 L716.8,544.1 L715.9,544.1 L715.5,543.6 L716.0,543.2 L716.8,543.4Z M538.2,159.0 L539.1,159.7 L537.9,162.5 L536.5,165.0 L536.0,163.6 L535.5,161.9 L537.1,159.7Z M352.5,473.0 L352.8,473.9 L353.1,474.5 L353.0,475.7 L352.5,476.6 L352.0,476.5 L351.7,475.6 L351.8,474.4 L352.1,473.7Z M937.1,96.0 L937.6,95.9 L938.6,96.4 L939.2,97.3 L939.1,98.0 L937.9,97.3 L936.8,96.5Z M632.9,334.8 L632.7,335.9 L631.2,337.6 L629.5,338.2 L627.9,338.6 L628.3,337.3 L629.8,335.7 L631.6,334.9Z M379.8,259.6 L379.7,261.1 L378.5,263.6 L377.7,265.5 L376.4,267.6 L375.9,267.6 L376.8,265.0 L377.5,262.9 L378.8,260.6Z M511.6,491.3 L512.2,492.8 L511.6,494.9 L510.8,495.1 L510.3,494.4 L510.5,492.4Z M354.0,166.7 L354.1,167.2 L353.9,167.9 L353.7,168.6 L353.2,169.1 L353.0,168.9 L353.2,168.1 L353.3,167.6 L353.6,166.8Z M418.9,97.2 L418.8,98.0 L418.3,98.8 L417.5,99.6 L417.8,98.4 L418.2,97.7Z M415.8,212.5 L416.1,213.2 L416.4,214.3 L415.8,216.1 L414.9,215.9 L414.5,215.2 L414.1,213.8 L415.0,212.1Z M627.6,103.1 L627.9,103.6 L628.2,104.2 L628.1,104.9 L627.5,105.3 L626.9,105.0 L627.1,104.1 L627.2,103.6Z M577.5,466.9 L577.8,467.5 L577.6,468.9 L577.4,469.9 L577.0,470.7 L576.6,470.7 L576.3,470.0 L576.6,468.7 L577.0,467.9Z M441.7,440.4 L442.1,442.0 L441.2,444.5 L440.2,446.3 L438.9,447.1 L438.9,444.2 L440.4,441.2Z M309.8,446.7 L310.9,448.5 L312.1,450.7 L312.6,453.7 L311.5,453.1 L310.4,450.9 L309.5,448.3Z M636.4,152.1 L636.7,152.8 L637.0,153.6 L636.9,154.7 L636.4,155.7 L635.8,155.4 L635.5,154.4 L635.4,153.3 L635.9,152.7Z M580.1,69.9 L580.7,70.3 L581.7,71.5 L581.7,72.6 L580.8,71.9 L580.0,70.5Z M473.1,145.9 L473.3,146.1 L473.3,147.0 L473.0,148.4 L472.6,148.7 L472.4,148.1 L472.4,146.8 L472.9,145.8Z M522.5,192.2 L523.0,192.9 L523.3,193.7 L523.4,194.7 L523.2,195.3 L522.8,195.1 L522.3,193.9 L522.3,192.8Z M1192.1,259.3 L1191.8,259.8 L1191.4,260.2 L1190.7,260.7 L1190.0,260.6 L1189.8,260.1 L1190.4,259.6 L1190.9,258.9 L1191.6,259.1Z M437.5,76.4 L437.3,77.1 L436.8,77.7 L436.4,77.7 L435.7,77.8 L436.3,77.1 L436.8,76.5Z M894.6,115.1 L895.5,117.9 L895.9,120.0 L896.1,122.5 L895.5,122.5 L894.5,120.6 L894.4,117.5Z M606.4,199.0 L606.6,201.3 L606.6,203.3 L606.3,205.9 L605.8,205.1 L605.5,203.4 L605.9,201.4Z M861.1,85.6 L859.7,87.7 L856.8,89.6 L855.6,89.9 L855.6,89.0 L858.3,87.2Z M1080.6,546.3 L1080.1,547.0 L1079.6,547.5 L1079.0,547.9 L1078.6,548.0 L1078.0,548.2 L1078.4,547.5 L1079.1,546.8 L1079.9,546.4Z M951.5,315.5 L951.0,319.0 L950.0,321.5 L948.4,321.8 L948.0,320.2 L948.9,317.4Z M599.9,345.9 L600.1,346.2 L600.0,346.9 L599.3,347.3 L598.8,347.5 L598.2,347.4 L598.1,346.7 L598.8,345.8 L599.6,345.3Z M1026.1,542.8 L1026.2,543.4 L1025.6,544.2 L1024.9,544.5 L1024.6,544.3 L1024.7,543.9 L1024.9,543.3 L1025.5,543.0Z M420.1,393.3 L420.5,394.5 L420.1,396.9 L419.1,399.4 L418.5,398.2 L418.6,396.4 L419.3,394.7Z M556.4,107.8 L557.2,107.5 L557.3,109.1 L557.0,110.5 L556.3,111.0 L555.4,111.8 L555.3,110.1 L555.2,108.8 L555.6,107.1Z M763.9,244.4 L764.9,245.4 L765.6,247.5 L765.6,248.9 L764.7,248.1 L763.8,245.7Z M462.7,262.1 L462.1,262.8 L461.7,263.3 L461.1,263.6 L460.2,264.0 L460.4,263.5 L460.3,263.0 L461.3,262.6 L462.0,262.2Z M386.9,193.5 L386.7,194.1 L385.5,195.3 L383.4,196.0 L381.4,196.5 L382.4,195.3 L384.6,193.8 L387.1,192.7Z M651.4,250.3 L652.0,252.7 L652.0,256.1 L650.6,256.1 L649.8,255.1 L650.2,252.4Z M446.2,287.5 L446.7,287.8 L447.1,289.0 L447.5,289.9 L447.5,290.5 L447.1,290.3 L446.7,290.0 L446.3,289.2 L446.1,288.3Z M431.6,169.3 L431.9,170.3 L430.6,172.7 L429.2,175.0 L428.8,174.2 L428.1,174.1 L428.9,171.8 L430.7,169.3Z M297.0,438.3 L297.8,438.0 L297.6,440.0 L297.4,442.1 L296.7,442.3 L296.1,442.9 L295.8,441.7 L296.0,439.8 L296.4,437.4Z M479.1,363.5 L479.6,364.3 L478.6,365.6 L477.7,367.6 L476.2,367.8 L475.3,367.3 L475.6,365.6 L476.9,364.0 L478.5,362.7Z M519.9,342.0 L519.6,343.7 L519.0,345.3 L517.9,346.0 L518.1,344.5 L518.8,343.2Z M521.7,538.4 L522.2,538.6 L521.8,539.9 L521.4,540.9 L520.9,540.7 L520.3,540.7 L520.7,539.5 L521.2,538.8Z M795.8,241.0 L796.0,242.3 L795.8,243.9 L795.2,245.5 L794.8,244.9 L794.9,243.6 L795.1,241.9Z M365.8,105.2 L366.4,104.8 L366.6,105.6 L367.1,106.3 L366.6,106.7 L366.1,106.8 L365.6,106.6 L365.0,106.0 L365.3,105.3Z M747.1,174.6 L749.1,176.1 L750.5,176.7 L752.3,178.8 L752.7,180.0 L753.0,181.1 L750.9,179.3 L749.3,178.0 L748.2,176.4Z M641.6,309.2 L641.9,310.0 L641.7,311.2 L641.1,311.8 L640.6,311.5 L640.4,310.7 L640.8,309.8Z M341.4,358.4 L342.5,358.8 L342.3,360.9 L342.5,363.1 L341.3,364.1 L340.3,362.9 L339.6,360.9 L340.1,358.6Z M333.3,436.9 L332.7,437.8 L331.7,438.7 L329.8,439.9 L329.3,439.1 L328.9,438.7 L329.8,437.9 L330.9,437.3 L332.1,436.9Z M340.9,115.5 L341.3,115.8 L340.8,116.8 L340.1,117.5 L339.3,117.9 L339.2,117.1 L339.7,116.0 L340.6,115.0Z M366.4,150.4 L367.4,152.0 L368.1,154.0 L367.7,156.3 L366.7,158.9 L365.2,157.5 L365.4,154.1 L365.4,151.7Z M407.5,117.6 L408.2,117.0 L408.3,119.1 L408.2,121.3 L407.5,122.4 L406.9,122.3 L406.5,120.8 L406.3,118.9 L406.9,117.1Z M692.6,170.0 L693.1,172.5 L693.2,174.6 L692.4,176.0 L691.4,175.0 L691.7,172.2Z M297.5,543.3 L297.0,545.1 L297.0,546.2 L296.1,548.3 L295.3,548.0 L294.0,549.1 L294.2,547.4 L295.4,545.5 L296.4,544.1Z M877.4,444.7 L878.1,445.0 L878.7,446.6 L878.0,447.7 L877.4,447.4 L876.8,446.7 L876.8,445.2Z M453.7,129.7 L454.6,131.5 L452.6,135.1 L450.6,137.6 L448.6,138.6 L447.7,136.9 L449.6,133.4 L451.6,130.4Z M551.2,291.7 L551.9,292.0 L551.6,293.8 L550.9,295.6 L549.9,296.8 L549.8,294.8 L549.9,293.4 L550.4,290.7Z M901.0,69.5 L900.3,70.2 L899.6,70.5 L899.0,70.5 L898.7,70.2 L899.1,69.5 L900.3,69.1Z M711.7,264.5 L712.2,265.1 L711.6,265.8 L710.9,266.5 L710.8,265.6 L711.1,264.9Z M282.6,421.4 L282.6,421.9 L282.0,422.6 L281.1,423.3 L280.9,422.9 L280.1,423.0 L280.5,422.3 L281.3,421.8 L282.2,421.1Z M457.1,445.6 L458.1,446.0 L458.1,447.7 L457.2,449.2 L456.0,449.6 L455.2,448.7 L455.3,447.0 L456.2,445.7Z M636.7,412.4 L637.4,412.8 L637.3,414.0 L637.0,414.6 L636.5,414.2 L636.3,413.2Z M438.2,72.7 L438.4,73.4 L437.8,75.0 L436.4,75.5 L436.5,74.1 L437.3,72.4Z M633.9,179.5 L634.1,180.1 L633.5,180.8 L633.0,181.2 L633.0,180.5 L633.3,179.7Z M646.0,317.1 L646.3,317.7 L645.3,320.0 L644.3,322.2 L643.5,322.7 L643.0,322.5 L644.1,319.5 L645.3,317.6Z M501.3,107.8 L500.7,109.5 L499.9,111.1 L498.2,112.0 L498.4,110.2 L499.8,108.2Z M528.2,360.1 L528.1,361.0 L527.8,362.1 L527.1,363.4 L526.7,363.3 L526.1,363.9 L526.3,362.8 L526.8,361.6 L527.5,360.6Z M736.9,92.8 L737.5,93.8 L736.5,96.1 L735.6,96.6 L735.0,95.8 L735.8,93.0Z M726.5,226.6 L726.5,229.3 L725.4,232.8 L722.7,235.5 L720.2,236.9 L720.7,233.7 L722.0,230.7 L724.3,226.9Z M479.7,401.5 L480.7,402.4 L481.7,403.6 L481.0,404.2 L480.1,404.3 L479.5,402.7Z M670.5,153.4 L670.9,153.5 L671.2,153.9 L671.8,154.5 L671.2,154.7 L671.0,155.4 L670.5,154.7 L670.0,154.4 L669.9,153.6Z M1090.9,451.8 L1090.9,452.1 L1090.0,452.5 L1088.8,452.5 L1087.7,452.4 L1088.0,452.0 L1088.9,451.7 L1089.8,451.5 L1090.9,451.5Z M764.0,440.6 L765.3,440.1 L767.7,441.4 L768.2,443.2 L769.4,445.3 L767.6,445.2 L765.4,443.9 L763.3,441.8Z M376.6,567.7 L377.0,568.3 L377.5,568.6 L377.4,569.3 L377.1,569.8 L376.7,569.3 L376.4,568.9 L376.3,568.2Z M705.6,100.2 L705.3,100.6 L703.8,101.2 L702.2,101.6 L702.6,101.1 L703.4,100.4 L705.4,99.8Z M566.7,112.9 L566.9,114.2 L565.9,117.1 L564.1,119.0 L563.9,117.7 L563.7,116.0 L565.5,113.3Z M461.2,197.9 L461.1,198.5 L460.8,199.3 L460.0,199.1 L459.8,198.3 L460.6,197.9Z M408.3,456.4 L408.1,457.4 L407.0,458.9 L406.0,459.6 L406.6,458.3 L407.5,457.1Z M851.6,220.2 L850.9,220.3 L850.1,219.8 L849.9,219.4 L850.3,219.0 L851.4,219.6Z M384.9,181.2 L385.0,183.5 L384.5,185.7 L383.3,187.5 L383.2,185.3 L383.5,182.5Z M744.6,537.2 L744.2,537.9 L743.4,538.6 L742.5,539.1 L742.0,539.3 L741.9,539.0 L741.9,538.6 L742.9,537.9 L743.8,537.3Z M493.3,373.5 L493.5,373.9 L492.9,374.7 L492.4,375.3 L491.9,375.5 L491.5,375.5 L491.8,374.8 L492.2,374.0 L492.8,373.7Z M766.6,85.0 L765.0,85.3 L764.1,85.5 L762.5,85.4 L762.0,84.9 L762.4,84.4 L764.1,84.5 L765.3,84.6Z M642.7,544.2 L642.9,545.1 L642.3,546.7 L641.7,546.7 L641.3,546.3 L642.0,545.2Z M332.3,413.7 L333.0,414.9 L331.9,417.9 L330.0,419.4 L329.2,417.3 L331.0,413.5Z M742.5,237.1 L742.5,236.5 L743.8,237.4 L744.6,238.3 L745.2,239.1 L744.4,239.1 L743.2,238.2 L742.4,237.4Z M428.6,102.5 L430.1,103.5 L431.6,106.0 L433.3,108.5 L433.4,110.1 L431.6,108.2 L430.3,106.8 L428.8,104.3Z M319.2,140.7 L319.1,141.2 L318.3,141.1 L317.5,141.0 L317.7,140.5 L318.0,140.2 L318.5,140.1 L319.0,140.3Z M622.5,251.0 L622.7,251.3 L622.7,251.9 L622.7,252.7 L622.4,252.7 L622.0,253.2 L621.8,252.5 L621.9,251.7 L622.2,251.1Z M458.9,129.3 L458.7,131.5 L457.6,134.0 L456.0,135.9 L454.4,136.3 L455.5,133.0 L457.3,131.0Z M488.2,405.7 L488.1,406.7 L487.1,408.2 L486.3,408.4 L486.3,407.6 L487.3,406.3Z M1064.6,279.4 L1064.9,280.2 L1065.0,280.7 L1064.8,281.3 L1064.3,281.2 L1064.1,280.7 L1064.0,279.9Z M411.2,277.2 L412.0,277.3 L412.7,280.0 L412.7,282.3 L412.0,282.2 L411.1,280.2 L410.9,278.1Z M560.2,175.6 L561.4,177.3 L562.7,180.4 L562.7,181.8 L561.6,180.6 L560.8,178.0Z M355.1,361.1 L355.5,361.0 L355.9,361.9 L356.0,363.0 L355.6,363.3 L355.2,362.9 L354.9,362.2 L354.6,361.1Z M734.9,141.5 L734.5,143.0 L730.9,144.2 L729.5,143.5 L730.8,142.2 L733.7,140.6Z M366.6,297.9 L367.1,298.4 L366.4,299.0 L365.8,299.2 L365.5,298.9 L365.3,298.2 L366.0,297.8Z M403.2,281.3 L403.6,281.6 L403.9,282.4 L403.3,283.1 L402.6,282.5 L402.5,281.5Z M281.3,99.0 L280.7,99.6 L278.8,99.6 L276.6,99.3 L277.4,98.6 L278.8,98.2 L280.9,98.4Z M874.8,178.4 L874.7,178.9 L873.9,179.4 L872.9,179.2 L872.3,178.7 L872.7,178.0 L873.7,177.7 L874.5,178.0Z M1052.2,513.4 L1053.1,513.9 L1052.6,515.7 L1051.9,516.8 L1051.2,517.1 L1050.2,517.7 L1050.3,516.2 L1050.3,514.8 L1051.2,513.7Z M733.2,524.0 L732.2,524.0 L730.7,523.0 L729.6,522.2 L729.5,521.6 L731.0,522.2 L732.3,523.1Z M357.3,89.2 L356.0,91.2 L354.7,92.7 L352.4,94.7 L350.1,94.5 L349.2,93.1 L351.3,91.2 L352.7,88.6 L355.1,89.1Z M307.5,396.8 L307.1,397.5 L305.5,398.1 L303.3,397.9 L302.0,397.2 L302.5,396.0 L305.3,395.7 L307.3,396.0Z M678.8,110.5 L679.5,111.2 L679.5,112.5 L678.8,112.9 L678.1,112.5 L678.0,111.1Z M739.9,69.6 L740.5,69.9 L740.1,70.8 L739.7,72.0 L739.0,71.5 L738.6,71.2 L738.7,70.2 L739.3,69.1Z M514.3,374.0 L514.4,374.8 L514.0,375.9 L513.3,376.9 L512.7,377.0 L512.6,376.4 L513.2,375.4 L513.6,374.7Z M448.6,452.3 L447.8,452.5 L446.2,451.8 L444.6,450.5 L443.1,448.5 L445.7,449.5 L447.2,450.3 L449.0,451.5Z M791.0,229.2 L790.5,230.2 L787.4,232.0 L784.7,232.8 L784.9,231.9 L786.9,230.5 L790.1,228.9Z M424.6,518.6 L425.1,518.8 L425.3,519.4 L425.6,520.1 L425.0,520.2 L424.7,520.3 L424.3,520.1 L424.2,519.5 L424.1,518.8Z M444.5,352.8 L444.9,353.1 L445.3,354.2 L445.2,355.1 L445.0,355.3 L444.6,355.1 L444.3,354.4 L444.1,353.2Z M416.4,216.0 L416.8,216.7 L416.6,217.3 L416.3,217.8 L415.9,218.2 L415.2,218.3 L414.8,217.6 L415.0,216.6 L415.7,216.3Z M668.4,160.5 L668.9,161.7 L669.8,163.5 L668.9,165.7 L668.0,164.2 L666.9,163.4 L667.3,160.8Z M806.6,507.5 L808.2,509.5 L806.4,513.6 L804.4,517.0 L802.9,514.0 L804.5,509.0Z M696.8,163.9 L696.5,164.3 L696.0,164.6 L695.3,164.5 L695.1,163.9 L695.8,163.5 L696.4,163.6Z M361.9,572.1 L362.3,572.5 L360.6,574.2 L359.0,574.9 L358.1,575.1 L357.5,574.8 L359.7,573.2 L361.7,571.6Z M746.8,196.5 L745.7,198.5 L742.7,201.5 L741.8,201.0 L742.0,199.9 L744.4,197.9Z M287.8,89.1 L288.2,89.5 L287.7,90.5 L286.8,91.3 L286.7,90.4 L286.7,89.8 L287.3,89.2Z M558.1,430.1 L558.9,430.3 L559.7,431.4 L560.1,432.5 L560.2,433.5 L559.7,433.7 L559.0,433.0 L557.8,432.2 L558.2,431.2Z M634.6,526.5 L635.2,527.0 L635.0,528.4 L634.1,529.5 L633.4,528.4 L633.7,526.6Z M647.7,542.3 L647.6,544.0 L646.9,545.8 L646.1,548.0 L644.6,549.6 L644.1,548.5 L643.7,547.1 L645.1,544.7 L646.4,543.0Z M740.4,498.8 L740.9,499.5 L739.8,500.0 L738.7,500.7 L738.4,500.0 L738.9,499.0 L739.8,498.8Z M418.7,241.0 L419.5,241.5 L419.8,243.2 L419.6,244.3 L419.0,244.3 L418.4,243.4 L418.3,241.9Z M336.3,76.2 L336.4,76.7 L335.7,77.6 L335.0,77.7 L335.2,76.9 L335.7,76.1Z M714.2,212.2 L714.7,212.4 L714.6,213.2 L714.0,213.8 L713.5,213.1 L713.6,212.3Z M489.5,296.9 L488.8,299.3 L487.9,302.4 L485.1,304.6 L484.3,303.3 L485.2,300.3 L487.7,297.2Z M291.2,438.3 L291.4,439.1 L291.7,439.6 L291.5,440.2 L291.5,440.9 L291.2,440.5 L290.9,440.3 L290.7,439.6 L290.9,438.9Z M358.3,73.0 L357.9,74.2 L357.9,75.2 L356.9,75.9 L356.2,76.4 L356.1,75.6 L356.8,74.6 L357.4,73.9Z M463.5,257.4 L464.2,257.6 L463.5,258.5 L463.0,259.5 L462.2,259.6 L462.3,258.6 L462.4,257.8 L463.0,257.3Z M343.3,192.7 L344.1,194.4 L344.7,198.4 L343.6,199.7 L342.5,198.6 L342.8,194.8Z M552.1,571.4 L552.3,573.5 L549.6,577.2 L546.8,578.0 L547.2,575.0 L550.0,570.8Z M336.5,565.2 L336.3,566.0 L335.7,566.8 L334.7,567.1 L333.7,567.3 L333.5,566.8 L334.1,566.1 L334.7,565.2 L335.7,565.2Z M621.1,380.4 L621.0,382.0 L620.8,383.9 L619.8,386.4 L619.0,387.3 L619.2,385.4 L619.4,383.5 L620.3,381.0Z M1078.3,469.8 L1078.5,470.3 L1078.0,471.2 L1077.1,471.7 L1076.9,471.3 L1076.8,470.9 L1076.9,470.2 L1077.6,470.1Z M637.9,362.5 L638.3,362.8 L638.1,364.1 L637.9,365.5 L637.5,365.6 L637.0,365.4 L637.1,364.0 L637.5,362.9Z M524.6,335.5 L524.8,336.5 L524.9,337.9 L524.0,339.4 L522.9,340.8 L522.5,339.5 L522.9,337.3 L523.9,336.4Z M422.0,505.8 L421.2,506.6 L419.3,507.3 L418.5,507.0 L419.3,506.4 L421.0,505.6Z M578.7,115.6 L579.1,117.0 L579.2,118.7 L578.8,120.3 L578.2,120.5 L577.5,120.5 L577.8,118.5 L577.9,116.7Z M693.0,531.0 L693.5,532.3 L694.2,533.7 L693.4,535.7 L692.3,535.7 L691.1,535.6 L691.6,533.4 L692.1,532.1Z M446.0,80.8 L445.2,81.8 L443.9,82.6 L443.1,82.6 L443.5,81.8 L444.9,80.9Z M567.9,543.3 L568.0,543.9 L567.7,544.7 L567.0,545.4 L566.8,544.9 L567.0,544.2 L567.4,543.6Z M758.6,152.4 L759.1,153.0 L759.6,153.6 L759.5,154.6 L758.9,155.1 L758.3,155.5 L757.8,154.6 L757.8,153.6 L758.2,153.0Z M885.3,233.4 L885.4,233.9 L884.7,233.6 L884.1,233.4 L883.8,232.9 L883.9,232.5 L884.5,232.4 L885.1,232.8 L885.4,233.1Z M655.2,502.4 L655.7,502.4 L656.2,504.2 L656.1,506.3 L655.9,507.9 L655.3,506.8 L654.7,506.6 L654.6,504.4 L654.9,503.2Z M585.4,256.1 L585.6,258.3 L585.5,261.7 L584.3,261.9 L584.0,260.5 L584.1,257.3Z M454.6,515.8 L455.4,517.0 L455.8,518.0 L455.6,519.2 L454.8,519.0 L453.9,518.5 L454.3,517.1Z M604.2,449.7 L604.2,450.6 L603.9,451.5 L603.3,451.4 L602.9,451.0 L603.5,450.3Z M523.1,82.3 L525.3,83.8 L526.8,85.5 L527.0,87.4 L527.0,89.4 L525.3,88.4 L523.6,87.2 L523.1,84.9Z M1111.2,414.3 L1111.2,414.7 L1110.4,415.0 L1109.7,415.0 L1109.1,414.9 L1109.4,414.4 L1110.2,414.2 L1111.2,413.8Z M592.4,493.2 L592.8,492.7 L593.5,493.9 L594.1,495.2 L593.5,495.1 L593.1,495.7 L592.2,494.6 L592.0,493.5Z M419.1,438.6 L419.1,439.4 L419.1,440.0 L418.6,440.8 L417.9,441.1 L417.6,440.5 L417.5,439.9 L417.8,439.2 L418.4,439.0Z M813.7,76.2 L814.5,77.2 L814.4,79.4 L813.4,80.1 L812.9,79.0 L812.9,77.3Z M1183.9,336.8 L1184.6,336.7 L1184.7,337.6 L1184.7,338.3 L1184.2,338.8 L1183.6,338.6 L1183.2,337.8 L1183.3,336.9Z M561.3,338.0 L560.4,339.3 L558.4,341.3 L556.9,341.1 L556.6,340.6 L557.8,339.4 L560.5,337.4Z M523.5,281.5 L525.0,281.5 L526.2,283.2 L526.7,284.8 L525.7,285.2 L524.3,284.8 L524.0,283.2Z M311.3,104.2 L311.5,104.7 L311.6,105.4 L311.0,105.5 L310.6,105.6 L310.3,105.3 L310.3,104.7 L310.7,104.3Z M674.9,264.4 L676.0,265.5 L676.4,267.8 L675.7,268.5 L674.4,268.7 L674.1,265.7Z M471.9,235.1 L471.7,235.7 L471.4,236.3 L470.6,236.5 L470.2,236.1 L470.7,235.4 L471.4,235.0Z M314.4,545.3 L314.4,546.4 L313.8,548.0 L312.7,549.5 L311.4,551.1 L311.2,550.0 L311.9,548.5 L312.3,547.0 L313.6,545.2Z M704.9,517.9 L705.2,518.4 L705.6,519.0 L705.2,519.5 L704.7,519.6 L704.0,519.5 L704.2,518.8 L704.4,518.4Z M837.0,452.6 L837.7,452.8 L836.9,454.3 L835.9,455.6 L835.3,455.5 L835.1,454.9 L835.4,453.4 L836.5,452.5Z M473.5,187.3 L473.4,187.7 L473.1,188.2 L472.6,189.0 L472.2,188.9 L471.6,189.1 L472.1,188.3 L472.6,187.8 L473.1,187.4Z M1179.6,297.2 L1180.0,297.7 L1180.1,298.6 L1179.8,299.4 L1179.4,299.8 L1179.0,299.8 L1178.7,299.4 L1178.6,298.3 L1179.2,298.0Z M488.5,507.3 L488.1,509.0 L487.0,511.4 L485.4,512.0 L485.4,510.2 L487.0,508.0Z M398.0,69.4 L398.5,69.5 L398.6,70.6 L398.3,71.9 L397.7,73.2 L396.8,73.0 L396.9,71.4 L396.7,70.1 L397.5,69.3Z M630.1,79.3 L631.2,81.1 L631.9,83.6 L631.4,85.3 L630.5,83.5 L629.7,81.2Z M426.4,450.4 L427.1,451.1 L427.4,452.5 L426.6,452.6 L425.9,452.6 L425.8,451.2Z M1008.0,362.5 L1007.4,363.9 L1006.1,365.8 L1005.1,365.8 L1004.5,365.7 L1004.8,364.5 L1006.6,362.9Z M573.6,410.1 L573.7,410.6 L573.3,411.4 L572.7,411.9 L572.2,412.2 L572.0,412.0 L572.1,411.5 L572.6,411.0 L573.1,410.4Z M534.8,312.8 L535.2,314.0 L535.4,316.0 L535.1,318.3 L534.6,320.2 L534.1,319.7 L533.8,318.4 L534.1,316.1 L534.4,314.8Z M421.5,199.1 L422.0,199.1 L421.6,200.0 L420.8,200.6 L420.1,201.1 L420.1,200.6 L419.8,200.1 L420.6,199.1 L421.2,199.0Z M715.1,250.4 L714.8,252.1 L714.0,253.6 L712.5,255.3 L711.7,254.4 L712.6,252.6 L713.7,250.6Z M317.3,378.0 L317.2,379.5 L316.9,380.8 L316.1,381.2 L315.4,381.5 L315.3,380.2 L316.3,378.7Z M617.4,328.8 L618.0,329.0 L618.3,329.4 L618.3,329.9 L618.3,330.4 L617.9,330.4 L617.4,330.3 L617.3,329.9 L617.0,329.2Z M511.2,177.4 L510.8,178.2 L510.4,179.2 L508.4,180.8 L507.4,181.1 L506.9,181.0 L508.0,179.6 L509.4,178.1 L511.3,176.7Z M362.3,255.4 L362.5,256.7 L360.9,258.8 L358.8,259.6 L357.4,259.1 L358.3,256.5 L361.2,254.7Z M309.0,77.3 L309.5,77.5 L310.4,79.2 L310.7,81.0 L310.0,80.5 L309.4,79.3 L309.1,78.2Z M277.0,404.3 L277.2,404.6 L277.1,405.4 L276.4,405.5 L275.7,406.0 L275.4,405.4 L275.8,404.4 L276.6,404.1Z M1092.2,580.4 L1092.7,580.7 L1093.1,581.3 L1092.9,581.9 L1092.5,582.0 L1091.6,581.9 L1091.4,580.7Z M388.7,93.4 L389.0,94.5 L388.3,96.9 L387.5,96.7 L386.9,96.3 L387.7,94.1Z M284.5,547.6 L283.6,548.3 L281.3,548.4 L279.9,548.0 L281.2,547.3 L283.1,547.3Z M538.2,218.4 L538.6,219.2 L538.8,220.0 L538.5,220.8 L537.9,221.1 L537.2,221.0 L537.5,219.8 L537.4,218.6Z"/></g>
<g fill="#f7f9f7" stroke="none" filter="url(#goo)">
<path d="M560,250 L600,240 L630,290 L660,370 L650,450 L690,500 L740,520 L760,560 L700,570 L640,530 L590,490 L570,400 L575,330 L560,270Z" transform="translate(1020,68) scale(0.19531)"/>
<path d="M555,200 L580,193 L600,205 L595,226 L565,228Z" transform="translate(1020,68) scale(0.19531)"/>
<path d="M760,600 L800,610 L840,660 L870,715 L850,725 L810,690 L770,640Z" transform="translate(1020,68) scale(0.19531)"/>
<path d="M870,770 L920,790 L960,850 L965,896 L900,896 L880,830Z" transform="translate(1020,68) scale(0.19531)"/>
<path d="M790,750 L820,760 L830,800 L800,790Z" transform="translate(1020,68) scale(0.19531)"/>
<path d="M930,740 L960,748 L950,760 L925,752Z" transform="translate(1020,68) scale(0.19531)"/>
<path d="M95,560 L135,555 L150,590 L120,610 L95,590Z" transform="translate(270,418) scale(0.19531)"/>
<path d="M180,600 L215,590 L235,640 L205,660 L180,640Z" transform="translate(270,418) scale(0.19531)"/>
<path d="M20,640 L70,620 L90,670 L60,700 L25,690Z" transform="translate(270,418) scale(0.19531)"/>
<path d="M250,700 L300,700 L310,760 L270,790 L245,750Z" transform="translate(270,418) scale(0.19531)"/>
<path d="M120,700 L160,690 L175,740 L140,760Z" transform="translate(270,418) scale(0.19531)"/>
<path d="M330,720 L370,700 L385,760 L350,790Z" transform="translate(270,418) scale(0.19531)"/>
<path d="M60,760 L110,750 L120,800 L80,820Z" transform="translate(270,418) scale(0.19531)"/>
<path d="M285,240 L310,215 L360,220 L370,250 L330,280 L290,275Z" transform="translate(760,440) scale(0.16000)"/>
<path d="M310,320 L340,285 L375,280 L380,310 L350,340Z" transform="translate(760,440) scale(0.16000)"/>
<path d="M400,240 L430,230 L440,260 L415,275Z" transform="translate(760,440) scale(0.16000)"/>
<path d="M130,150 L200,120 L260,170 L250,230 L180,220 L140,190Z" transform="translate(830,450) scale(0.14888)"/>
<path d="M280,180 L340,170 L420,220 L500,290 L480,320 L400,280 L320,230Z" transform="translate(830,450) scale(0.14888)"/>
<path d="M480,170 L540,180 L600,230 L650,290 L600,290 L540,250 L490,210Z" transform="translate(830,450) scale(0.14888)"/>
<path d="M640,220 L720,230 L800,270 L850,320 L800,340 L720,300 L650,260Z" transform="translate(830,450) scale(0.14888)"/>
<path d="M280,300 L340,310 L400,380 L420,440 L380,450 L320,390Z" transform="translate(830,450) scale(0.14888)"/>
<path d="M420,330 L500,320 L580,380 L640,440 L620,500 L560,520 L480,480 L430,400Z" transform="translate(830,450) scale(0.14888)"/>
<path d="M610,340 L680,350 L740,410 L750,470 L700,500 L650,440Z" transform="translate(830,450) scale(0.14888)"/>
<path d="M760,380 L800,370 L820,400 L780,410Z" transform="translate(830,450) scale(0.14888)"/>
<path d="M230,420 L280,400 L320,470 L330,560 L290,600 L240,540 L215,470Z" transform="translate(930,450) scale(0.14888)"/>
<path d="M310,400 L370,380 L430,450 L460,540 L420,590 L360,520Z" transform="translate(930,450) scale(0.14888)"/>
<path d="M335,600 L375,595 L385,650 L350,665Z" transform="translate(930,450) scale(0.14888)"/>
<path d="M400,420 L470,400 L540,470 L600,540 L640,620 L600,700 L540,720 L480,640 L440,560Z" transform="translate(930,450) scale(0.14888)"/>
<path d="M240,605 L275,600 L280,645 L250,650Z" transform="translate(930,450) scale(0.14888)"/>
<path d="M0,360 L50,350 L85,420 L70,510 L20,520 L0,480Z" transform="translate(930,450) scale(0.14888)"/>
<path d="M100,250 L150,230 L175,290 L140,330 L105,300Z" transform="translate(930,450) scale(0.14888)"/>
<path d="M150,640 L230,620 L330,680 L400,740 L380,780 L280,780 L180,720Z" transform="translate(930,450) scale(0.14888)"/>
<path d="M0,560 L60,540 L120,580 L100,620 L30,620Z" transform="translate(930,450) scale(0.14888)"/>
<path d="M350,250 L410,240 L470,320 L460,390 L400,380 L360,310Z" transform="translate(930,450) scale(0.14888)"/>
<path d="M430,700 L520,680 L600,720 L580,790 L470,790Z" transform="translate(930,450) scale(0.14888)"/>
<path d="M505,395 L540,340 L600,310 L680,300 L745,310 L740,335 L680,352 L625,380 L590,430 L560,470 L520,480 L490,450Z" transform="translate(1060,400) scale(0.20450)"/>
<path d="M470,560 L520,545 L560,520 L600,530 L640,570 L668,610 L672,660 L645,705 L590,725 L520,705 L470,660 L445,610Z" transform="translate(1060,400) scale(0.20450)"/>
<path d="M600,440 L690,400 L750,395 L730,430 L650,460 L600,465Z" transform="translate(1060,400) scale(0.20450)"/>
<path d="M610,490 L700,455 L740,470 L700,510 L630,520Z" transform="translate(1060,400) scale(0.20450)"/>
<path d="M690,560 L740,540 L760,580 L720,620 L690,600Z" transform="translate(1060,400) scale(0.20450)"/>
<path d="M690,285 L740,240 L800,190 L850,140 L880,130 L885,160 L850,200 L800,240 L750,275 L700,300Z" transform="translate(1060,400) scale(0.20450)"/>
<path d="M770,510 L810,495 L835,505 L830,540 L800,580 L770,590 L760,550Z" transform="translate(1060,400) scale(0.20450)"/>
<path d="M840,540 L875,545 L880,580 L850,600 L835,570Z" transform="translate(1060,400) scale(0.20450)"/>
<path d="M915,265 L960,258 L965,275 L925,285Z" transform="translate(1060,400) scale(0.20450)"/>
<path d="M690,760 L735,755 L730,800 L700,812Z" transform="translate(1060,400) scale(0.20450)"/>
<path d="M740,730 L790,720 L800,745 L760,760Z" transform="translate(1060,400) scale(0.20450)"/>
<path d="M820,765 L860,760 L865,785 L830,790Z" transform="translate(1060,400) scale(0.20450)"/>
<path d="M800,640 L850,600 L880,610 L840,660 L800,680Z" transform="translate(1060,400) scale(0.20450)"/>
<path d="M640,160 L700,135 L760,100 L800,90 L830,95 L800,150 L740,190 L690,230 L650,245 L625,225Z" transform="translate(1060,400) scale(0.20450)"/>
<path d="M900,140 L935,130 L945,160 L915,175Z" transform="translate(1060,400) scale(0.20450)"/>
<path d="M1160,180 L1210,175 L1215,200 L1170,205Z" transform="translate(1060,400) scale(0.20450)"/>
<path d="M1184.6,504.3 L1183.6,505.5 L1180.2,506.3 L1177.6,505.7 L1175.5,504.4 L1179.3,502.7 L1183.3,503.3Z M1228.1,555.8 L1228.3,557.3 L1224.2,559.3 L1220.6,559.4 L1220.2,557.9 L1223.6,556.2 L1227.1,554.8Z M1242.9,442.1 L1241.9,443.9 L1238.2,447.1 L1235.6,448.9 L1235.1,448.5 L1237.2,446.1 L1240.2,443.8Z M1244.7,420.7 L1243.8,423.4 L1239.7,427.0 L1237.5,426.8 L1235.4,426.8 L1238.0,424.1 L1241.1,422.1Z M1260.1,568.4 L1258.5,570.7 L1255.5,574.2 L1253.0,576.1 L1252.2,576.2 L1254.5,573.2 L1257.5,570.5Z M1231.7,549.8 L1231.7,550.7 L1230.2,551.5 L1229.1,551.5 L1227.9,551.1 L1229.2,549.8 L1231.3,548.8Z M1191.5,514.1 L1190.3,515.1 L1184.7,516.4 L1181.1,516.7 L1179.2,516.3 L1184.5,514.8 L1188.3,514.3Z M1258.0,432.4 L1258.6,433.2 L1257.1,434.3 L1255.5,435.4 L1255.7,434.1 L1255.8,433.0 L1257.2,432.2Z M1201.6,472.2 L1201.9,473.3 L1201.1,474.9 L1199.7,475.7 L1199.5,474.4 L1199.5,473.5 L1200.5,472.7Z M1188.5,562.7 L1187.7,564.6 L1185.3,567.2 L1181.7,568.2 L1182.0,566.2 L1183.4,564.0 L1186.7,562.2Z M1189.9,559.2 L1188.5,562.2 L1186.2,566.4 L1181.5,569.9 L1180.0,568.5 L1183.1,563.5 L1187.1,560.6Z M1213.2,514.1 L1212.9,516.9 L1208.4,521.6 L1205.7,522.0 L1205.0,521.0 L1205.8,518.4 L1210.1,514.7Z M1192.6,564.3 L1193.3,565.9 L1191.6,566.4 L1190.1,566.2 L1189.4,564.7 L1190.4,563.5 L1191.8,563.3Z M1256.1,444.6 L1255.2,447.0 L1252.9,449.0 L1251.2,448.1 L1250.5,447.2 L1250.6,445.1 L1253.6,444.0Z M1215.1,494.6 L1213.7,497.0 L1209.5,498.8 L1206.7,499.2 L1205.6,498.3 L1207.7,495.8 L1212.6,493.9Z M1160.8,545.3 L1160.6,546.9 L1159.5,548.4 L1157.7,548.8 L1157.3,547.5 L1157.7,546.0 L1159.2,545.0Z M1227.5,566.3 L1227.0,567.9 L1224.1,570.5 L1221.6,571.1 L1219.7,571.1 L1222.9,568.3 L1225.7,566.5Z M1155.5,553.2 L1154.7,555.3 L1153.8,557.8 L1151.0,558.3 L1150.6,556.5 L1151.7,554.7 L1153.7,552.1Z M1185.9,555.1 L1186.1,557.1 L1184.6,559.6 L1183.3,560.6 L1182.2,560.8 L1182.3,558.7 L1184.1,556.6Z M1244.1,532.4 L1241.8,534.2 L1238.9,536.4 L1236.4,536.3 L1233.7,536.1 L1238.5,533.9 L1241.3,532.8Z M1247.0,457.4 L1246.4,459.5 L1243.0,460.8 L1240.4,461.7 L1240.1,460.4 L1241.9,458.8 L1244.8,456.9Z M1188.3,505.0 L1187.9,507.8 L1185.0,510.8 L1181.9,512.0 L1180.4,511.0 L1182.4,507.9 L1185.5,505.4Z M1218.6,523.5 L1218.0,524.5 L1215.4,526.5 L1212.2,528.6 L1213.0,527.3 L1214.0,525.7 L1217.6,523.6Z M1224.1,443.1 L1224.2,445.7 L1222.0,450.1 L1218.6,452.2 L1217.2,451.0 L1219.4,447.3 L1221.4,444.9Z M1196.3,487.6 L1197.1,488.4 L1193.1,490.1 L1189.9,491.5 L1190.5,490.3 L1192.0,488.7 L1194.8,487.8Z M1175.2,527.0 L1173.8,530.3 L1168.6,534.2 L1164.7,535.6 L1165.0,533.7 L1167.1,531.2 L1171.5,527.6Z M1213.9,461.8 L1210.6,464.8 L1207.9,467.3 L1203.9,469.7 L1205.5,467.6 L1206.5,465.9 L1211.0,462.9Z M1193.2,554.0 L1190.0,556.6 L1186.8,559.1 L1181.9,562.0 L1181.7,561.1 L1185.5,558.0 L1189.9,555.6Z M1200.0,518.7 L1200.1,519.6 L1199.6,520.7 L1198.4,520.8 L1196.8,520.4 L1197.3,518.5 L1199.1,518.4Z M1157.7,578.3 L1156.6,579.7 L1151.3,582.4 L1149.1,582.4 L1147.9,582.2 L1150.8,580.4 L1156.0,578.1Z M1176.9,514.4 L1175.9,516.0 L1173.7,516.8 L1171.1,517.3 L1170.6,515.9 L1172.6,514.3 L1175.4,513.4Z M1215.2,520.9 L1213.5,522.8 L1212.0,524.2 L1209.1,525.4 L1208.9,524.0 L1210.8,522.2 L1212.8,521.6Z M1170.7,529.1 L1171.6,530.1 L1170.3,534.6 L1168.7,535.9 L1168.0,535.6 L1167.6,533.6 L1169.5,529.0Z M1230.4,488.6 L1229.1,490.2 L1225.9,491.9 L1221.8,493.1 L1221.1,491.7 L1224.4,489.2 L1229.3,487.4Z M1248.6,460.1 L1248.3,461.7 L1247.2,462.9 L1245.5,463.3 L1245.4,461.9 L1245.1,460.3 L1247.0,459.9Z M1250.5,501.0 L1249.1,502.2 L1246.9,502.8 L1245.2,502.5 L1244.4,501.6 L1246.0,500.0 L1248.6,500.5Z M1250.9,508.1 L1251.3,510.3 L1248.8,513.9 L1245.5,517.4 L1244.1,515.8 L1246.5,511.9 L1248.4,509.8Z M1235.7,436.0 L1235.6,437.5 L1234.8,439.1 L1233.1,439.1 L1232.0,438.0 L1232.5,436.3 L1234.2,435.0Z M1209.2,467.1 L1209.5,468.1 L1207.9,469.0 L1206.5,470.0 L1206.5,468.9 L1206.6,467.7 L1208.1,467.2Z M1206.4,488.5 L1205.8,489.8 L1200.8,490.3 L1197.5,490.2 L1195.8,489.3 L1200.4,488.2 L1204.8,487.8Z M1207.2,540.9 L1206.8,542.5 L1205.6,543.2 L1204.5,542.6 L1203.4,541.4 L1204.4,540.2 L1205.9,539.5Z M1209.9,577.8 L1210.3,578.9 L1207.8,581.8 L1205.3,583.4 L1204.1,583.0 L1205.3,580.0 L1209.0,577.1Z M1230.4,471.0 L1230.9,472.1 L1230.1,473.5 L1228.8,472.9 L1227.8,472.1 L1227.7,470.3 L1229.4,470.1Z M1213.1,503.3 L1213.4,503.9 L1208.6,507.2 L1204.8,508.7 L1204.7,507.9 L1207.8,505.4 L1212.4,502.9Z M1222.7,456.3 L1223.2,456.9 L1221.0,457.7 L1219.3,458.1 L1219.5,457.3 L1220.2,456.3 L1222.3,455.7Z M1166.2,554.2 L1166.5,555.3 L1164.5,557.3 L1162.0,559.1 L1161.2,558.0 L1162.4,555.6 L1165.4,553.0Z M1220.4,569.9 L1218.3,573.0 L1214.4,577.5 L1210.5,581.0 L1211.9,578.6 L1213.8,576.2 L1216.4,573.6Z M1244.0,570.9 L1243.1,572.4 L1242.1,573.3 L1240.6,573.7 L1239.9,572.7 L1240.8,571.4 L1242.6,570.2Z M1205.3,484.9 L1204.4,485.7 L1202.4,486.5 L1200.6,485.4 L1200.0,484.0 L1202.7,483.7 L1204.8,483.9Z M1185.8,546.8 L1185.6,547.5 L1184.0,548.3 L1182.0,548.6 L1182.3,547.6 L1183.1,546.3 L1185.4,546.1Z M1249.9,426.0 L1249.0,427.7 L1247.4,429.0 L1245.8,429.1 L1245.0,428.4 L1245.7,426.7 L1248.1,425.8Z M1210.7,533.5 L1209.7,534.8 L1206.0,535.2 L1202.2,535.4 L1203.5,534.0 L1205.2,532.5 L1210.7,531.8Z M1231.0,491.4 L1231.1,492.5 L1228.8,493.5 L1227.2,493.2 L1226.3,492.4 L1228.2,491.2 L1230.3,490.6Z M1154.9,580.8 L1155.7,581.1 L1154.4,582.6 L1153.4,583.1 L1152.4,583.3 L1153.1,581.7 L1154.3,580.5Z M1237.7,532.5 L1237.1,534.8 L1233.5,539.0 L1231.3,540.8 L1228.4,542.7 L1231.9,537.8 L1235.9,532.9Z M1197.2,519.8 L1197.8,520.5 L1195.4,522.8 L1193.5,523.9 L1191.4,524.2 L1193.6,521.2 L1196.5,519.1Z M1239.6,561.7 L1239.6,564.3 L1238.0,567.8 L1235.7,569.4 L1234.2,569.3 L1235.7,566.0 L1237.4,562.6Z M1198.1,574.7 L1198.6,576.7 L1196.7,579.2 L1194.7,580.7 L1193.4,579.8 L1193.5,577.2 L1196.0,575.1Z M1205.0,467.6 L1205.1,468.9 L1204.7,470.2 L1203.2,471.3 L1201.8,470.6 L1203.0,468.8 L1203.8,467.3Z M1185.4,511.5 L1184.0,513.7 L1182.8,515.7 L1180.6,516.9 L1180.6,515.8 L1181.7,514.2 L1183.1,513.1Z M1238.4,498.2 L1239.0,499.6 L1237.9,501.5 L1236.3,501.6 L1234.8,501.3 L1235.8,499.5 L1236.9,497.6Z M1188.9,496.1 L1188.8,498.6 L1188.4,500.9 L1187.2,503.4 L1186.4,502.3 L1186.1,500.3 L1187.4,498.3Z M1192.7,579.7 L1192.5,580.6 L1191.2,581.7 L1189.9,582.1 L1189.3,581.6 L1190.2,580.4 L1191.6,579.8Z M1244.9,573.2 L1243.0,575.9 L1241.8,578.0 L1239.2,578.8 L1238.9,577.1 L1239.1,574.9 L1241.9,574.1Z M1241.4,440.5 L1241.4,442.0 L1240.0,444.5 L1238.8,445.8 L1238.1,445.7 L1238.8,443.8 L1240.0,441.6Z M1251.1,496.9 L1250.1,499.0 L1249.1,500.6 L1247.5,501.6 L1246.0,501.6 L1247.0,499.1 L1249.3,497.4Z M1171.8,566.9 L1171.6,568.3 L1170.9,569.6 L1169.3,569.4 L1168.4,568.0 L1169.3,566.9 L1170.4,565.9Z M1196.7,543.1 L1195.0,546.1 L1191.8,549.3 L1188.1,551.8 L1186.7,551.0 L1190.4,547.3 L1194.0,543.7Z M1143.4,575.3 L1143.2,576.4 L1141.6,577.5 L1140.6,577.4 L1140.2,577.0 L1140.8,576.1 L1142.0,575.5Z M1221.7,471.4 L1222.1,472.6 L1221.1,473.7 L1219.8,473.6 L1219.3,472.6 L1219.4,471.4 L1220.7,471.0Z M1251.3,468.2 L1251.2,469.7 L1248.3,471.7 L1245.1,473.7 L1245.9,471.7 L1246.8,469.9 L1249.8,467.9Z M1206.8,474.4 L1207.2,475.7 L1206.7,478.3 L1205.0,479.0 L1204.0,478.9 L1204.0,476.9 L1205.6,474.0Z M1223.8,455.0 L1223.9,456.6 L1223.1,458.6 L1221.9,459.6 L1220.8,459.5 L1220.8,457.6 L1222.4,456.1Z M1234.5,555.8 L1231.4,560.4 L1229.3,563.7 L1226.0,567.2 L1226.2,565.8 L1227.8,562.8 L1231.0,559.3Z M1237.0,514.5 L1237.0,515.4 L1236.0,516.4 L1234.9,516.8 L1234.2,516.4 L1234.8,515.2 L1236.1,514.4Z M1253.5,512.3 L1252.3,514.4 L1250.4,516.4 L1248.5,515.8 L1246.8,515.0 L1248.5,512.9 L1251.2,512.1Z M1205.4,514.8 L1205.1,517.1 L1202.8,520.3 L1200.5,521.3 L1199.5,520.6 L1200.9,518.3 L1203.1,515.2Z M1177.6,539.2 L1175.6,541.8 L1173.5,544.9 L1170.8,545.4 L1169.3,545.0 L1172.0,542.2 L1175.6,539.0Z M1207.9,516.6 L1207.8,517.5 L1206.5,518.7 L1204.9,519.6 L1204.6,518.8 L1205.6,517.6 L1207.2,516.2Z M1193.0,543.4 L1192.2,544.9 L1188.4,546.2 L1184.9,546.5 L1184.6,545.2 L1187.4,543.4 L1192.1,542.1Z M1186.3,516.6 L1186.3,517.8 L1183.8,519.1 L1181.9,519.0 L1181.1,518.2 L1183.0,516.8 L1185.0,516.4Z M1247.3,467.9 L1246.2,469.5 L1242.6,472.3 L1237.4,476.2 L1238.7,474.2 L1242.0,471.3 L1246.5,467.6Z M1211.5,559.8 L1211.0,561.5 L1207.8,563.3 L1204.8,563.1 L1205.3,561.4 L1206.7,559.7 L1209.8,559.1Z M1173.3,539.6 L1172.7,541.3 L1171.5,543.3 L1169.6,544.0 L1169.6,542.9 L1169.8,541.5 L1171.7,540.3Z M1250.8,427.2 L1251.4,428.8 L1249.2,430.8 L1246.8,432.3 L1245.4,431.2 L1247.4,428.8 L1249.3,426.4Z M1215.6,526.9 L1215.5,527.9 L1213.7,529.6 L1211.3,531.2 L1211.5,529.9 L1212.3,528.3 L1214.6,526.9Z M1169.4,573.5 L1168.5,574.9 L1165.9,576.7 L1161.6,579.0 L1162.1,577.3 L1164.8,575.1 L1168.8,572.5Z M1176.9,562.3 L1177.2,563.7 L1175.1,564.7 L1173.6,564.1 L1173.6,563.0 L1174.4,562.1 L1176.1,561.4Z M1259.4,502.5 L1257.3,504.5 L1254.2,506.3 L1251.9,507.3 L1250.5,507.4 L1253.6,505.3 L1256.0,504.1Z M1231.2,456.2 L1229.2,459.0 L1225.6,462.2 L1221.7,464.2 L1222.1,462.6 L1224.3,460.1 L1228.3,457.1Z M1245.0,457.5 L1242.6,459.5 L1239.1,461.3 L1234.5,462.3 L1235.9,460.4 L1238.4,458.7 L1242.0,457.5Z M1185.4,504.1 L1185.9,505.2 L1182.4,507.3 L1179.3,509.0 L1178.1,508.3 L1181.6,505.8 L1184.0,504.1Z M1183.0,241.1 L1184.0,241.9 L1184.9,244.2 L1185.4,247.3 L1184.0,245.8 L1183.0,244.7 L1182.7,242.5Z M1140.7,195.8 L1141.4,195.8 L1140.6,197.4 L1139.8,198.8 L1139.2,198.5 L1139.5,197.0 L1140.3,195.9Z M1146.2,170.2 L1146.9,170.3 L1147.3,172.0 L1146.7,172.7 L1146.2,172.8 L1145.6,172.1 L1145.7,170.8Z M1160.8,192.8 L1160.8,193.3 L1160.2,194.1 L1159.0,194.6 L1158.9,193.9 L1159.2,192.9 L1160.4,192.4Z M1129.9,161.8 L1131.0,162.1 L1129.8,163.8 L1129.0,164.5 L1127.8,164.8 L1128.0,163.1 L1129.0,161.7Z M1165.4,161.7 L1165.1,162.7 L1163.1,164.0 L1161.9,164.2 L1161.2,163.9 L1162.2,162.7 L1163.8,162.1Z M1179.7,231.2 L1180.2,232.0 L1179.5,233.0 L1178.6,233.2 L1177.8,233.0 L1177.7,231.8 L1178.8,231.3Z M1174.0,223.3 L1173.6,225.7 L1173.0,228.5 L1171.5,229.4 L1170.2,230.2 L1171.4,227.2 L1172.5,225.3Z M1162.5,161.5 L1161.8,163.0 L1159.4,163.6 L1156.5,164.5 L1157.3,162.8 L1158.1,161.2 L1160.8,160.9Z M1147.0,161.8 L1147.4,162.5 L1144.3,162.6 L1141.8,162.3 L1143.3,161.7 L1144.3,161.1 L1147.2,161.2Z M1152.7,176.5 L1151.1,177.7 L1149.3,179.1 L1146.8,179.3 L1146.2,178.3 L1148.5,176.8 L1151.4,175.9Z M1160.9,163.5 L1160.9,164.1 L1160.6,164.8 L1159.8,165.2 L1159.4,164.8 L1159.5,164.0 L1160.2,163.6Z M1171.2,175.8 L1171.5,177.2 L1171.1,178.7 L1170.5,180.2 L1169.6,180.4 L1169.6,178.5 L1170.4,177.1Z M1143.5,157.4 L1142.8,158.1 L1140.4,158.3 L1139.1,157.8 L1138.2,157.0 L1140.6,156.7 L1142.1,157.0Z M1185.2,204.5 L1184.9,206.0 L1183.9,207.7 L1182.7,208.1 L1181.2,208.3 L1182.5,206.4 L1183.7,204.8Z M1141.9,170.8 L1142.4,172.0 L1141.7,174.1 L1141.0,175.0 L1140.3,175.2 L1140.4,173.7 L1141.0,172.2Z M1120.7,158.2 L1120.1,159.7 L1119.6,161.3 L1118.5,161.8 L1117.3,162.5 L1118.2,160.4 L1119.5,159.0Z M1185.1,223.7 L1185.4,224.3 L1184.2,226.6 L1183.2,227.6 L1181.8,228.8 L1183.2,225.9 L1184.3,224.2Z M1209.0,227.7 L1209.2,229.3 L1208.4,230.5 L1207.1,231.2 L1205.8,230.5 L1206.7,229.0 L1207.4,227.4Z M1142.2,186.9 L1141.8,188.8 L1139.8,190.7 L1138.3,190.9 L1138.0,190.2 L1138.6,189.0 L1140.3,187.1Z M1160.1,218.8 L1159.3,219.9 L1158.3,220.9 L1156.4,221.4 L1155.9,220.2 L1157.4,219.1 L1159.1,218.0Z M1147.1,191.8 L1147.6,193.1 L1146.8,193.8 L1146.0,194.6 L1145.4,193.6 L1145.1,192.7 L1145.7,191.7Z M1196.6,230.9 L1196.1,231.7 L1194.1,233.0 L1192.1,232.8 L1192.2,231.9 L1193.8,231.0 L1196.2,230.2Z M1143.2,157.2 L1143.4,159.0 L1143.6,160.4 L1142.8,162.0 L1142.2,161.0 L1141.4,160.1 L1142.3,158.7Z M1168.3,184.1 L1169.8,184.0 L1169.4,185.2 L1169.0,186.4 L1167.6,186.2 L1166.8,185.2 L1167.1,184.1Z M1165.3,211.8 L1165.8,212.4 L1164.7,213.5 L1163.3,214.6 L1163.2,213.5 L1163.6,212.4 L1164.7,211.8Z M1172.3,186.6 L1172.9,188.0 L1172.8,189.2 L1172.6,191.0 L1171.6,190.4 L1170.7,189.3 L1171.4,187.7Z M1133.3,154.2 L1132.9,155.6 L1131.3,157.0 L1129.1,158.1 L1129.5,156.7 L1130.1,155.4 L1132.3,153.5Z M1178.9,179.2 L1178.0,180.5 L1176.1,181.9 L1174.1,182.4 L1173.8,181.7 L1175.2,180.3 L1177.2,179.6Z M1159.4,209.8 L1159.4,211.2 L1158.3,213.1 L1156.9,214.3 L1155.8,214.2 L1156.8,212.1 L1158.0,210.9Z M1169.5,170.0 L1169.8,170.6 L1168.1,172.8 L1166.3,174.1 L1166.4,173.1 L1166.8,171.8 L1168.7,169.8Z M1202.5,237.0 L1201.7,238.0 L1200.5,238.9 L1198.7,239.1 L1199.0,238.1 L1199.8,237.2 L1201.7,236.2Z M1169.7,199.3 L1170.6,199.6 L1170.1,201.4 L1169.6,202.9 L1168.8,202.8 L1168.4,201.4 L1168.9,199.8Z M1139.8,149.9 L1139.8,150.7 L1139.0,151.7 L1138.1,152.4 L1138.0,151.8 L1138.0,151.0 L1139.1,150.0Z M1127.0,161.3 L1127.8,161.9 L1127.4,163.3 L1126.2,164.0 L1125.6,163.1 L1124.9,162.1 L1126.0,160.9Z M1124.7,167.6 L1125.0,168.4 L1124.8,169.7 L1123.7,169.6 L1122.5,169.6 L1123.1,168.3 L1123.8,167.1Z M1143.3,177.7 L1143.9,178.6 L1142.7,180.1 L1141.6,180.4 L1140.5,180.3 L1141.4,178.9 L1142.3,177.4Z M1178.4,203.6 L1179.2,204.4 L1176.6,205.7 L1175.2,205.8 L1173.5,205.7 L1175.7,204.1 L1178.0,202.6Z M1135.6,184.6 L1135.9,185.5 L1135.5,187.8 L1134.2,189.5 L1133.2,189.7 L1134.1,186.9 L1134.8,184.7Z M1168.9,191.5 L1169.4,192.0 L1168.3,192.9 L1167.6,193.2 L1166.5,193.3 L1167.3,192.0 L1168.3,191.5Z"/>
</g>
<g fill="none" stroke="#dc8c96" stroke-opacity=".6" stroke-width=".9" stroke-dasharray="1.3 2.2">
<polyline points="0,430 60,500 100,600 140,660 220,720 290,715 350,760 470,760 500,830 510,896" transform="translate(270,68) scale(0.19531)" vector-effect="non-scaling-stroke"/>
<polyline points="510,0 520,100 540,130 640,190 735,245 745,340 640,380 665,460 715,470 715,600 725,720 700,760 725,896" transform="translate(270,243) scale(0.19531)" vector-effect="non-scaling-stroke"/>
<polyline points="735,245 900,275 1030,295 1015,140 1080,90 1120,100" transform="translate(270,243) scale(0.19531)" vector-effect="non-scaling-stroke"/>
<polyline points="20,200 100,270 180,300 260,420 330,520 390,580 380,670 440,670 480,780" transform="translate(520,243) scale(0.19531)" vector-effect="non-scaling-stroke"/>
<polyline points="390,560 440,450 470,375 540,390 590,415 640,350 630,220 660,130 650,40 700,0" transform="translate(520,243) scale(0.19531)" vector-effect="non-scaling-stroke"/>
<polyline points="950,0 1040,40 1060,110 1100,150 1180,160 1280,130" transform="translate(520,243) scale(0.19531)" vector-effect="non-scaling-stroke"/>
<polyline points="890,60 860,180 840,300 820,380 760,385" transform="translate(770,68) scale(0.19531)" vector-effect="non-scaling-stroke"/>
<polyline points="750,520 745,600 720,650 670,660" transform="translate(770,68) scale(0.19531)" vector-effect="non-scaling-stroke"/>
<polyline points="0,480 70,490 170,560 210,700 270,790 330,830 380,790 450,760" transform="translate(770,68) scale(0.19531)" vector-effect="non-scaling-stroke"/>
<polyline points="0,120 40,60 130,35" transform="translate(770,243) scale(0.19531)" vector-effect="non-scaling-stroke"/>
<polyline points="320,0 320,60 290,100 300,280 350,350 370,440 350,500 410,550 370,640 310,710 350,800 420,896" transform="translate(770,243) scale(0.19531)" vector-effect="non-scaling-stroke"/>
<polyline points="680,40 660,120 580,215 650,290 610,340 610,375 565,410 590,480 570,520 470,570 330,630 310,740 290,775 230,775 100,835 0,880" transform="translate(1020,243) scale(0.19531)" vector-effect="non-scaling-stroke"/>
<polyline points="725,0 745,100 770,260 690,300 770,430 720,480 660,600 620,680" transform="translate(270,418) scale(0.19531)" vector-effect="non-scaling-stroke"/>
<polyline points="490,90 555,85 560,140" transform="translate(520,418) scale(0.19531)" vector-effect="non-scaling-stroke"/>
<polyline points="640,290 615,350 650,440" transform="translate(520,418) scale(0.19531)" vector-effect="non-scaling-stroke"/>
<polyline points="535,520 600,490 650,490" transform="translate(520,418) scale(0.19531)" vector-effect="non-scaling-stroke"/>
<polyline points="535,570 570,640 565,660" transform="translate(520,418) scale(0.19531)" vector-effect="non-scaling-stroke"/>
<polyline points="785,720 850,640 860,600 940,565 1000,595 1060,600 1160,570 1165,500 1140,440" transform="translate(520,418) scale(0.19531)" vector-effect="non-scaling-stroke"/>
<polyline points="1060,40 1100,130 1160,270 1220,380 1280,470" transform="translate(520,68) scale(0.19531)" vector-effect="non-scaling-stroke"/>
<polyline points="720,870 800,850 880,845 940,860" transform="translate(520,68) scale(0.19531)" vector-effect="non-scaling-stroke"/>
</g>
<g font-family="Liberation Sans, sans-serif" fill="#939ea8">
<text x="618.6" y="81.5" font-size="9.6" letter-spacing="0.1">Falun</text>
<text x="776.8" y="446.0" font-size="10" letter-spacing="0.2">Västerås</text>
<text x="970.2" y="356.2" font-size="10.5" letter-spacing="0.6">UPPSALA</text>
<text x="530.7" y="567.2" font-size="10.5" letter-spacing="0.5">ÖREBRO</text>
<text x="766.5" y="531.5" font-size="9.6" letter-spacing="0.15">Eskilstuna</text>
<text x="1033.3" y="548.8" font-size="12.2" letter-spacing="0.7">STOCKHOLM</text>
</g>
<g fill="none" stroke-linejoin="round" stroke-linecap="round">
<g stroke="#fff" stroke-opacity=".5" stroke-width="4.6">
<path d="M287.6,68.0 C288.7,68.8 289.0,69.6 291.5,71.0 C294.0,72.4 294.1,70.7 296.4,72.9 C298.7,75.1 297.9,73.9 299.7,78.7 C301.5,83.5 301.0,83.5 303.0,90.0 C305.0,96.5 304.5,95.8 307.0,102.0 C309.5,108.2 306.5,107.0 312.0,112.0 C317.5,117.0 320.0,117.5 326.6,119.8 C333.2,122.1 328.3,118.5 335.4,120.3 C342.5,122.1 346.2,125.1 352.0,126.2 C357.8,127.3 351.9,125.3 356.0,124.3 C360.1,123.3 362.6,124.2 366.7,122.7 C370.8,121.2 368.3,120.7 370.6,118.8 C372.9,116.9 373.6,118.1 375.0,115.9 C376.4,113.7 376.1,114.1 375.5,111.0 C374.9,107.9 373.0,107.2 373.0,105.0 C373.0,102.8 372.9,103.7 375.5,103.2 C378.1,102.7 377.4,104.4 382.3,103.2 C387.2,102.0 388.6,100.3 393.0,98.9 C397.4,97.5 395.3,97.4 398.0,98.3 C400.7,99.2 398.4,99.5 402.8,102.2 C407.2,104.9 409.8,105.3 413.6,108.0 C417.4,110.7 413.2,105.4 416.5,112.0 C419.8,118.6 422.0,125.5 425.3,131.5 C428.6,137.5 425.5,132.2 428.2,133.4 C430.9,134.6 431.7,135.4 435.0,135.8 C438.3,136.2 435.9,136.2 440.0,134.8 C444.1,133.4 445.4,132.1 449.7,130.9 C454.0,129.7 450.6,129.4 455.5,130.5 C460.4,131.6 462.5,133.3 467.3,134.8 C472.1,136.3 471.0,137.0 472.7,135.8 C474.4,134.6 472.7,133.9 473.5,130.5 C474.3,127.1 474.1,126.7 475.5,123.7 C476.9,120.7 476.8,120.6 478.6,119.8 C480.4,119.0 478.5,119.0 481.9,120.7 C485.3,122.4 486.9,124.6 490.7,126.0 C494.5,127.4 493.5,126.6 495.6,125.6 C497.7,124.6 496.2,123.0 498.1,122.3 C500.0,121.6 498.5,124.8 502.4,123.0 C506.3,121.2 508.4,118.4 512.2,115.9 C516.0,113.4 513.8,115.6 516.0,113.9 C518.2,112.2 516.1,112.4 520.0,110.0 C523.9,107.6 522.7,106.6 529.8,105.5 C536.9,104.4 537.8,106.1 545.4,106.0 C553.0,105.9 551.0,104.3 557.0,105.0 C563.0,105.7 561.5,107.2 567.0,108.6 C572.5,110.0 573.9,109.6 576.6,110.0"/>
<path d="M1010.0,218.4 C1012.8,219.5 1015.0,220.6 1020.0,222.3 C1025.0,224.0 1024.0,222.4 1027.8,224.3 C1031.6,226.2 1029.9,227.8 1033.7,229.1 C1037.5,230.4 1037.9,226.6 1041.5,229.1 C1045.1,231.6 1043.4,234.6 1046.4,237.9 C1049.4,241.2 1045.9,241.3 1052.2,240.9 C1058.5,240.5 1060.9,237.9 1068.8,236.4 C1076.7,234.9 1074.5,235.2 1080.5,235.6 C1086.5,236.0 1086.5,237.8 1090.3,237.9 C1094.1,238.0 1091.5,236.6 1094.2,236.0 C1096.9,235.4 1096.4,235.1 1100.0,235.6 C1103.6,236.1 1102.5,238.1 1106.9,237.9 C1111.3,237.7 1110.5,236.2 1115.7,235.0 C1120.9,233.8 1119.5,233.6 1125.5,233.6 C1131.5,233.6 1130.9,233.8 1137.2,235.0 C1143.5,236.2 1144.6,235.7 1147.9,237.9 C1151.2,240.1 1147.5,240.5 1148.9,243.0 C1150.3,245.5 1150.1,245.0 1152.8,246.9 C1155.5,248.8 1155.4,246.0 1158.7,249.8 C1162.0,253.6 1162.0,255.4 1164.5,260.6 C1167.0,265.8 1166.4,263.5 1167.5,268.4 C1168.6,273.3 1167.6,273.3 1168.4,278.2 C1169.2,283.1 1169.8,283.8 1170.4,286.0"/>
<path d="M550.3,246.0 C552.7,245.4 555.2,242.9 559.0,244.0 C562.8,245.1 560.9,248.1 564.0,249.8 C567.1,251.5 566.7,250.5 570.0,250.0 C573.3,249.5 571.9,248.7 575.7,247.9 C579.5,247.1 580.5,246.8 583.5,247.3 C586.5,247.8 582.8,248.5 586.4,249.8 C590.0,251.1 590.7,249.1 596.2,251.8 C601.7,254.5 601.6,254.4 606.0,259.6 C610.4,264.8 608.8,264.8 611.8,270.3 C614.8,275.8 613.4,274.5 616.7,279.1 C620.0,283.7 620.2,285.0 623.5,286.9 C626.8,288.8 625.1,284.6 628.4,286.0 C631.7,287.4 631.1,289.5 635.2,291.8 C639.3,294.1 639.4,294.7 643.0,294.2 C646.6,293.7 645.8,290.1 648.0,289.9 C650.2,289.7 649.0,292.2 650.9,293.4 C652.8,294.6 651.2,291.9 654.8,294.2 C658.4,296.5 657.6,297.1 663.6,301.6 C669.6,306.1 669.7,306.7 676.3,310.4 C682.9,314.1 681.8,313.3 687.0,314.9 C692.2,316.5 692.8,315.7 695.0,316.0"/>
<path d="M699.7,306.5 C700.0,310.1 699.1,312.9 700.7,319.2 C702.3,325.5 702.2,322.3 705.5,328.9 C708.8,335.5 709.9,336.3 712.4,342.6 C714.9,348.9 711.3,345.9 714.3,351.4 C717.3,356.9 718.7,355.8 723.1,362.1 C727.5,368.4 726.4,367.3 730.0,373.9 C733.6,380.5 733.8,378.5 735.8,385.6 C737.8,392.7 736.6,390.2 737.2,399.3 C737.8,408.4 737.6,410.6 737.8,418.0 C738.0,425.4 737.5,420.3 737.8,425.8 C738.1,431.3 737.6,429.3 738.7,437.5 C739.8,445.7 741.4,448.3 741.7,455.1 C742.0,461.9 739.4,457.5 739.7,461.9 C740.0,466.3 740.2,464.4 742.7,470.7 C745.2,477.0 744.1,475.9 748.5,484.4 C752.9,492.9 755.3,494.7 758.3,501.0 C761.3,507.3 756.0,503.3 759.3,506.9 C762.6,510.5 764.8,509.9 770.0,513.7 C775.2,517.5 773.7,517.5 777.8,520.5 C781.9,523.5 779.7,520.6 784.6,524.4 C789.5,528.2 789.6,530.4 795.4,534.2 C801.2,538.0 797.0,536.3 805.2,538.1 C813.4,539.9 816.5,540.9 824.7,540.7 C832.9,540.5 826.3,538.8 834.5,537.5 C842.7,536.2 843.1,538.7 854.0,536.2 C864.9,533.7 864.8,530.1 873.5,528.4 C882.2,526.7 879.0,524.5 885.0,530.0 C891.0,535.5 891.1,539.9 895.0,547.9 C898.9,555.9 895.6,553.4 898.9,558.6 C902.2,563.8 899.6,561.5 906.7,566.4 C913.8,571.3 915.0,571.3 924.3,576.2 C933.6,581.1 935.6,581.8 940.0,584.0"/>
<path d="M507.3,331.9 C508.4,335.7 507.6,340.3 511.2,345.5 C514.8,350.7 515.9,347.9 520.0,350.4 C524.1,352.9 522.1,348.8 525.9,354.3 C529.7,359.8 531.5,363.4 533.7,370.0 C535.9,376.6 532.1,372.9 533.7,377.8 C535.3,382.7 537.3,382.0 539.5,387.5 C541.7,393.0 540.7,391.3 541.5,397.3 C542.3,403.3 541.1,403.2 542.5,409.0 C543.9,414.8 543.1,413.3 546.4,418.0 C549.7,422.7 551.2,420.9 554.2,425.8 C557.2,430.7 556.0,427.9 557.1,435.6 C558.2,443.3 556.2,443.9 558.1,453.2 C560.0,462.5 559.3,462.0 563.9,468.8 C568.5,475.6 569.5,474.3 574.7,477.6 C579.9,480.9 579.8,476.4 582.5,480.5 C585.2,484.6 583.4,488.4 584.5,492.2 C585.6,496.0 579.3,491.3 586.4,494.2 C593.5,497.1 598.9,498.8 609.8,502.4 C620.7,506.0 616.2,504.4 625.5,506.9 C634.8,509.4 634.8,509.8 643.0,511.4 C651.2,513.0 651.5,512.3 654.8,512.7"/>
<path d="M690.9,500.0 C695.5,501.5 699.6,503.4 707.5,505.5 C715.4,507.6 712.1,506.0 719.2,507.5 C726.3,509.0 726.3,509.0 732.9,510.8 C739.5,512.6 738.3,513.8 742.7,514.1 C747.1,514.4 743.9,513.6 748.5,511.8 C753.1,510.0 756.3,508.7 759.3,507.5"/>
<path d="M810.0,329.9 C810.6,334.5 810.6,338.6 812.0,346.5 C813.4,354.4 814.4,352.2 814.9,358.2 C815.4,364.2 813.6,359.8 813.9,368.0 C814.2,376.2 815.9,378.7 815.9,387.5 C815.9,396.3 813.9,392.7 813.9,399.3 C813.9,405.9 817.0,406.9 815.9,411.0 C814.8,415.1 812.2,411.9 810.0,413.9 C807.8,415.9 809.2,415.2 808.1,418.0 C807.0,420.8 806.7,422.2 806.1,423.9"/>
<path d="M362.8,404.1 C363.1,408.0 362.7,412.5 363.8,418.0 C364.9,423.5 365.9,420.6 366.7,423.9 C367.5,427.2 366.7,428.1 366.7,429.7"/>
<path d="M391.0,443.4 C391.3,445.3 393.1,447.2 392.0,450.2 C390.9,453.2 388.5,450.0 387.2,454.1 C385.9,458.2 389.1,459.7 387.2,464.9 C385.3,470.1 382.3,466.7 380.4,472.7 C378.5,478.7 381.0,478.8 380.4,486.4 C379.8,494.0 379.8,494.8 378.4,500.0 C377.0,505.2 376.6,501.1 375.5,504.9 C374.4,508.7 377.0,508.8 374.5,513.7 C372.0,518.6 370.5,515.9 366.7,522.5 C362.9,529.1 363.0,531.4 360.8,537.1 C358.6,542.8 360.8,540.5 358.9,543.0 C357.0,545.5 355.4,545.1 354.0,545.9"/>
<path d="M434.1,539.1 C433.5,540.2 434.8,541.9 432.1,543.0 C429.4,544.1 428.1,541.9 424.3,543.0 C420.5,544.1 421.4,543.9 418.4,546.9 C415.4,549.9 415.3,550.4 413.6,553.7 C411.9,557.0 412.9,554.6 412.2,558.6 C411.5,562.6 411.3,565.4 411.0,568.0"/>
<path d="M788.6,535.2 C786.9,537.4 784.6,537.5 782.7,543.0 C780.8,548.5 782.3,547.6 781.7,554.7 C781.1,561.8 781.5,561.8 780.7,568.4 C779.9,575.0 779.3,573.8 778.8,578.2 C778.3,582.6 778.8,582.4 778.8,584.0"/>
<path d="M1066.9,535.2 C1068.5,534.5 1068.9,533.1 1072.7,532.8 C1076.5,532.5 1077.5,533.0 1080.5,534.2 C1083.5,535.4 1082.7,536.3 1083.5,537.1"/>
<path d="M1088.4,550.4 C1092.2,551.3 1095.7,552.5 1102.0,553.7 C1108.3,554.9 1105.9,552.9 1110.8,554.7 C1115.7,556.5 1118.2,557.7 1119.6,560.2 C1121.0,562.7 1117.9,564.2 1115.7,563.5 C1113.5,562.8 1112.9,559.3 1111.8,557.6"/>
<path d="M1063.9,563.5 C1067.5,566.0 1069.2,566.6 1076.6,572.3 C1084.0,578.0 1086.5,580.7 1090.3,584.0"/>
</g><g stroke="#fff" stroke-opacity=".5" stroke-width="5">
<path d="M532.0,68.0 C531.1,70.2 528.3,71.2 528.8,75.8 C529.3,80.4 531.0,80.2 533.7,84.6 C536.4,89.0 534.7,87.8 538.5,91.4 C542.3,95.0 541.0,95.6 547.3,97.3 C553.6,99.0 555.5,96.5 561.0,97.3 C566.5,98.1 565.0,98.0 566.9,100.2 C568.8,102.4 565.1,102.3 567.8,105.0 C570.5,107.7 571.9,107.2 576.6,110.0 C581.3,112.8 580.9,113.6 584.5,114.9 C588.1,116.2 586.6,113.0 589.3,114.5 C592.0,116.0 592.8,118.7 594.2,120.3"/>
<path d="M594.2,120.3 C595.3,119.6 594.7,118.8 598.0,117.8 C601.3,116.8 600.7,119.0 606.0,116.8 C611.3,114.6 610.7,114.6 617.0,110.0 C623.3,105.4 623.9,104.3 628.4,100.2 C632.9,96.1 632.0,98.9 632.9,95.3 C633.8,91.7 632.4,91.9 631.7,87.5 C631.0,83.1 627.8,80.5 630.4,79.7 C633.0,78.9 633.6,84.0 641.0,84.6 C648.4,85.2 649.0,82.3 656.7,82.0 C664.4,81.7 660.2,83.4 668.4,83.6 C676.6,83.8 676.7,83.1 686.0,82.6 C695.3,82.1 695.0,81.7 701.6,81.7 C708.2,81.7 705.1,81.4 709.5,82.6 C713.9,83.8 712.4,85.4 717.3,86.0 C722.2,86.6 722.1,84.2 727.0,84.6 C731.9,85.0 728.8,85.6 734.8,87.5 C740.8,89.4 742.2,91.4 748.5,91.4 C754.8,91.4 751.3,89.1 757.3,87.5 C763.3,85.9 765.4,85.6 770.0,85.6 C774.6,85.6 771.4,87.8 773.9,87.5 C776.4,87.2 775.5,84.3 778.8,84.6 C782.1,84.9 782.3,87.1 785.6,88.5 C788.9,89.9 789.1,89.2 790.5,89.5"/>
<path d="M790.5,89.5 C791.6,87.8 793.0,87.4 794.4,83.6 C795.8,79.8 794.3,80.2 795.4,75.8 C796.5,71.4 797.5,70.2 798.3,68.0"/>
<path d="M790.5,89.5 C791.9,87.7 790.8,85.3 795.4,83.2 C800.0,81.1 802.5,83.5 807.1,82.0 C811.7,80.5 803.2,79.8 812.0,77.8 C820.8,75.8 825.8,77.5 838.4,74.8 C851.0,72.1 851.7,69.9 856.9,68.0"/>
<path d="M790.5,89.5 C791.3,91.7 792.8,93.5 793.4,97.3 C794.0,101.1 794.4,99.1 792.5,103.2 C790.6,107.3 789.1,107.0 786.6,111.9 C784.1,116.8 785.4,114.4 783.7,120.7 C782.0,127.0 782.1,127.3 780.7,134.4 C779.3,141.5 778.8,140.6 778.8,146.1 C778.8,151.6 780.7,149.0 780.7,153.9 C780.7,158.8 780.7,158.0 778.8,163.7 C776.9,169.4 775.8,165.6 773.9,174.4 C772.0,183.2 773.1,187.3 772.0,195.0 C770.9,202.7 772.5,198.8 770.0,201.8 C767.5,204.8 767.0,200.0 763.2,205.7 C759.4,211.4 761.8,211.9 756.3,222.3 C750.8,232.7 749.1,234.7 743.6,243.0 C738.1,251.3 738.7,249.3 736.8,251.8"/>
<path d="M594.2,120.3 C592.3,124.0 589.6,126.5 587.4,133.4 C585.2,140.3 587.8,139.4 586.4,145.1 C585.0,150.8 582.5,148.1 582.5,153.9 C582.5,159.7 585.3,160.2 586.4,165.7 C587.5,171.2 589.7,167.5 586.4,173.5 C583.1,179.5 582.9,182.2 574.7,187.1 C566.5,192.0 562.5,189.1 557.1,191.0 C551.7,192.9 555.0,191.3 555.5,194.0 C556.0,196.7 559.1,195.6 559.0,200.8 C558.9,206.0 556.2,206.5 555.2,212.5 C554.2,218.5 556.9,213.8 555.5,222.3 C554.1,230.8 552.6,235.0 550.3,243.0 C548.0,251.0 550.3,248.3 547.3,250.8 C544.3,253.3 543.3,249.3 539.5,251.8 C535.7,254.3 536.7,256.0 533.7,259.6 C530.7,263.2 532.6,261.2 528.8,264.5 C525.0,267.8 524.1,268.6 520.0,271.3 C515.9,274.0 516.3,271.6 514.1,274.3 C511.9,277.0 515.2,278.4 512.2,281.1 C509.2,283.8 506.1,281.8 503.4,284.0 C500.7,286.2 502.1,284.5 502.4,288.9 C502.7,293.3 504.7,294.4 504.4,299.6 C504.1,304.8 501.7,302.6 501.4,307.5 C501.1,312.4 502.6,312.3 503.4,317.2 C504.2,322.1 504.1,320.9 504.4,325.0 C504.7,329.1 504.7,328.1 504.4,331.9 C504.1,335.7 505.6,334.1 503.4,338.7 C501.2,343.3 500.7,343.6 496.6,348.5 C492.5,353.4 492.6,353.3 488.8,356.3 C485.0,359.3 485.4,357.6 482.9,359.2 C480.4,360.8 481.9,362.0 480.0,362.1 C478.1,362.2 478.7,360.1 476.0,359.6 C473.3,359.1 473.2,359.8 470.2,360.2 C467.2,360.6 468.6,361.2 465.3,361.2 C462.0,361.2 460.7,359.1 458.5,360.2 C456.3,361.3 458.9,363.4 457.5,365.1 C456.1,366.8 456.9,366.3 453.6,366.4 C450.3,366.5 450.2,364.5 445.8,365.5 C441.4,366.5 440.9,369.1 438.0,370.0 C435.1,370.9 438.1,367.3 435.6,368.6 C433.1,369.9 431.4,371.7 429.2,374.8 C427.0,377.9 428.6,375.6 427.8,379.7 C427.0,383.8 425.9,384.0 426.3,389.5 C426.7,395.0 427.9,393.8 429.2,399.3 C430.5,404.8 430.8,404.4 431.1,409.0 C431.4,413.6 432.1,414.2 430.2,415.9 C428.3,417.6 426.2,414.3 424.3,414.9 C422.4,415.5 423.6,416.0 423.3,418.0 C423.0,420.0 424.7,418.1 423.3,421.9 C421.9,425.7 422.2,429.5 418.4,431.7 C414.6,433.9 413.7,432.2 409.6,429.7 C405.5,427.2 409.1,424.3 403.8,422.9 C398.5,421.5 394.7,422.9 390.7,424.8 C386.7,426.7 391.1,426.6 389.5,429.7 C387.9,432.8 386.3,434.2 385.0,436.0"/>
<path d="M512.2,281.1 C511.4,283.0 510.3,283.0 509.3,287.9 C508.3,292.8 510.1,294.9 508.7,298.7 C507.3,302.5 505.6,300.8 504.4,301.6"/>
<path d="M385.0,436.0 C382.6,435.0 380.7,434.8 376.4,432.6 C372.1,430.4 372.3,427.4 369.6,428.2 C366.9,429.0 368.9,432.7 366.7,435.6 C364.5,438.5 367.0,436.9 361.8,438.5 C356.6,440.1 355.2,439.7 348.1,441.4 C341.0,443.1 344.6,442.6 336.4,444.4 C328.2,446.2 330.3,448.3 318.8,447.7 C307.3,447.1 303.9,444.6 295.4,442.4 C286.9,440.2 292.7,439.3 288.6,439.9 C284.5,440.5 285.9,442.6 280.7,444.4 C275.5,446.2 273.0,445.8 270.0,446.3"/>
<path d="M594.2,120.3 C593.7,122.6 591.2,124.3 592.3,128.5 C593.4,132.7 594.3,132.4 598.1,135.4 C601.9,138.4 599.3,134.7 605.9,139.3 C612.5,143.9 613.4,146.5 621.6,152.0 C629.8,157.5 627.6,154.4 635.2,158.8 C642.8,163.2 644.0,163.5 648.9,167.6 C653.8,171.7 648.4,170.5 652.8,173.5 C657.2,176.5 659.6,173.8 664.5,178.4 C669.4,183.0 665.5,185.1 670.4,190.0 C675.3,194.9 676.1,193.7 682.1,195.9 C688.1,198.1 687.0,194.9 691.9,197.9 C696.8,200.9 696.7,202.3 699.7,206.7 C702.7,211.1 700.4,206.9 702.6,213.5 C704.8,220.1 701.2,221.8 707.5,230.1 C713.8,238.4 716.8,236.9 725.0,243.0 C733.2,249.1 733.5,249.3 736.8,251.8"/>
<path d="M736.8,251.8 C739.5,253.7 740.6,253.4 746.6,258.6 C752.6,263.8 751.7,263.2 758.3,270.3 C764.9,277.4 765.4,277.7 770.0,284.0 C774.6,290.3 771.9,289.2 774.9,292.8 C777.9,296.4 776.1,290.1 780.7,296.7 C785.3,303.3 785.7,308.8 791.5,316.2 C797.3,323.6 796.1,319.5 801.3,323.1 C806.5,326.7 805.6,327.5 810.0,328.9 C814.4,330.3 811.7,329.1 816.9,328.0 C822.1,326.9 822.6,327.2 828.6,325.0 C834.6,322.8 832.9,321.6 838.4,320.1 C843.9,318.6 844.6,319.0 848.1,319.6 C851.6,320.2 845.0,321.1 851.0,322.1 C857.0,323.1 862.7,322.0 869.6,323.1 C876.5,324.2 869.5,322.4 875.5,326.0 C881.5,329.6 882.4,332.0 891.1,335.8 C899.8,339.6 896.8,337.2 906.7,339.7 C916.6,342.2 915.4,341.5 926.3,344.6 C937.2,347.7 937.6,349.1 945.8,350.8 C954.0,352.5 948.4,351.8 955.5,350.8 C962.6,349.8 963.0,347.9 971.2,347.1 C979.4,346.3 978.0,347.5 984.8,348.1 C991.6,348.7 992.6,349.0 995.6,349.4"/>
<path d="M736.8,251.8 C736.5,252.9 737.5,254.3 735.8,255.7 C734.1,257.1 732.2,254.2 730.9,256.7 C729.6,259.2 731.8,260.1 731.3,264.5 C730.8,268.9 731.0,267.9 729.0,272.3 C727.0,276.7 728.9,274.9 724.1,280.1 C719.3,285.3 717.7,285.5 712.0,291.0 C706.3,296.5 706.5,295.5 703.6,299.6 C700.7,303.7 708.7,303.3 701.6,305.5 C694.5,307.7 688.6,307.9 678.2,307.5 C667.8,307.1 669.4,304.2 664.5,303.9 C659.6,303.6 663.1,303.9 660.6,306.5 C658.1,309.1 659.3,310.8 655.7,313.3 C652.1,315.8 650.3,311.5 647.9,315.3 C645.5,319.1 647.0,318.3 647.0,327.0 C647.0,335.7 648.7,337.5 647.9,346.5 C647.1,355.5 646.7,354.8 644.0,359.2 C641.3,363.6 641.8,357.5 638.2,362.1 C634.6,366.7 634.0,370.9 631.3,375.8 C628.6,380.7 631.1,374.8 628.4,379.7 C625.7,384.6 624.9,387.9 621.6,393.4 C618.3,398.9 618.4,394.4 616.7,399.3 C615.0,404.2 617.1,405.8 615.7,411.0 C614.3,416.2 612.9,413.3 611.8,418.0 C610.7,422.7 611.2,423.4 611.8,427.8 C612.4,432.2 614.6,429.2 613.8,433.6 C613.0,438.0 610.3,437.4 608.9,443.4 C607.5,449.4 610.0,449.6 608.9,455.1 C607.8,460.6 607.5,457.3 605.0,462.9 C602.5,468.5 602.7,468.7 600.0,475.0 C597.3,481.3 597.6,481.1 595.2,485.4 C592.8,489.7 594.3,488.1 591.3,490.3 C588.3,492.5 588.3,492.8 584.5,493.2 C580.7,493.6 581.4,490.4 577.6,491.8 C573.8,493.2 575.2,493.3 570.8,498.1 C566.4,502.9 565.6,503.9 562.0,508.8 C558.4,513.7 558.9,511.6 558.1,515.7 C557.3,519.8 559.7,518.6 559.1,523.5 C558.5,528.4 556.9,524.5 556.1,533.2 C555.3,541.9 557.2,545.9 556.1,554.7 C555.0,563.5 554.9,559.0 552.2,564.5 C549.5,570.0 548.3,568.8 546.4,574.3 C544.5,579.8 545.7,581.3 545.4,584.0"/>
<path d="M558.0,529.3 C563.2,528.8 567.0,528.9 576.6,527.4 C586.2,525.9 583.0,525.0 592.3,523.9 C601.6,522.8 600.5,523.1 609.8,523.5 C619.1,523.9 618.9,525.1 625.5,525.4 C632.1,525.7 627.8,526.6 633.3,524.4 C638.8,522.2 638.4,520.9 645.0,517.6 C651.6,514.3 651.2,513.0 656.7,512.7 C662.2,512.4 660.9,514.9 664.5,516.6 C668.1,518.3 666.1,518.6 669.4,518.6 C672.7,518.6 671.7,520.7 676.3,516.6 C680.9,512.5 682.2,508.8 686.0,503.9 C689.8,499.0 686.0,503.8 689.9,499.1 C693.8,494.4 694.3,493.4 700.0,487.0 C705.7,480.6 703.4,481.9 710.4,476.2 C717.4,470.5 716.6,472.1 725.1,466.8 C733.6,461.5 731.4,459.6 740.7,457.1 C750.0,454.6 750.1,458.8 758.3,458.0 C766.5,457.2 763.4,456.5 770.0,454.1 C776.6,451.7 774.6,452.0 781.7,449.3 C788.8,446.6 790.5,447.1 795.4,444.4 C800.3,441.7 797.1,443.9 799.3,439.5 C801.5,435.1 801.0,433.1 803.2,428.7 C805.4,424.3 799.5,426.3 807.1,423.9 C814.7,421.5 819.0,420.6 830.5,420.0 C842.0,419.4 838.8,420.2 848.1,421.9 C857.4,423.6 852.9,424.5 863.8,426.2 C874.7,427.9 875.7,426.2 887.2,427.8 C898.7,429.4 894.1,429.5 905.0,432.0 C915.9,434.5 916.0,434.8 926.3,436.6 C936.6,438.4 934.3,437.2 941.9,438.5 C949.5,439.8 946.0,438.1 953.6,441.4 C961.2,444.7 962.6,445.0 969.2,450.2 C975.8,455.4 972.6,454.5 977.0,460.0 C981.4,465.5 979.3,464.9 984.8,469.8 C990.3,474.7 990.0,472.4 996.6,477.6 C1003.2,482.8 1001.7,485.0 1008.3,488.3 C1014.9,491.6 1015.4,488.5 1020.0,489.3 C1024.6,490.1 1022.7,488.8 1024.9,491.2 C1027.1,493.6 1026.6,493.9 1028.0,498.0 C1029.4,502.1 1028.8,501.8 1029.8,505.9 C1030.8,510.0 1028.4,508.1 1031.7,512.7 C1035.0,517.3 1035.8,517.6 1041.5,522.5 C1047.2,527.4 1045.9,527.0 1052.2,530.3 C1058.5,533.6 1060.6,533.1 1063.9,534.2"/>
<path d="M953.0,68.0 C953.2,70.5 952.9,71.3 953.6,76.8 C954.3,82.3 953.8,81.2 955.5,87.5 C957.2,93.8 958.5,91.6 959.5,99.3 C960.5,107.0 960.5,107.3 959.1,114.9 C957.7,122.5 956.7,119.5 954.6,126.6 C952.5,133.7 952.4,134.3 951.6,140.3 C950.8,146.3 950.5,143.2 951.6,148.1 C952.7,153.0 951.7,152.3 955.5,157.8 C959.3,163.3 959.8,162.4 965.3,167.6 C970.8,172.8 971.5,172.6 975.1,176.4 C978.7,180.2 974.7,177.7 978.0,181.3 C981.3,184.9 983.0,184.5 986.8,189.1 C990.6,193.7 988.4,191.6 991.7,197.9 C995.0,204.2 993.3,205.9 998.5,211.6 C1003.7,217.3 1006.1,213.8 1010.2,218.4 C1014.3,223.0 1012.1,221.3 1013.2,228.2 C1014.3,235.1 1013.6,233.4 1014.1,243.0 C1014.6,252.6 1015.6,251.6 1015.1,262.5 C1014.6,273.4 1012.7,273.9 1012.2,282.1 C1011.7,290.3 1013.8,284.7 1013.2,291.8 C1012.6,298.9 1012.7,298.7 1010.2,307.5 C1007.7,316.3 1007.4,316.3 1004.4,323.1 C1001.4,329.9 1002.0,327.5 999.5,331.9 C997.0,336.3 996.7,333.8 995.6,338.7 C994.5,343.6 993.1,343.9 995.6,349.4 C998.1,354.9 999.2,351.9 1004.4,358.2 C1009.6,364.5 1010.3,364.8 1014.1,371.9 C1017.9,379.0 1016.3,378.7 1018.0,383.6 C1019.7,388.5 1017.8,382.4 1020.0,389.5 C1022.2,396.6 1022.9,401.4 1025.9,409.0 C1028.9,416.6 1025.2,414.3 1030.7,416.8 C1036.2,419.3 1040.2,416.6 1045.4,418.0 C1050.6,419.4 1048.3,418.6 1049.3,421.9 C1050.3,425.2 1049.7,424.8 1048.9,429.7 C1048.1,434.6 1048.2,434.6 1046.4,439.5 C1044.6,444.4 1043.3,442.4 1042.5,447.3 C1041.7,452.2 1042.9,450.5 1043.4,457.1 C1043.9,463.7 1044.9,464.1 1044.4,470.7 C1043.9,477.3 1040.9,474.5 1041.5,480.5 C1042.1,486.5 1043.7,485.6 1046.4,492.2 C1049.1,498.8 1048.0,496.8 1051.3,503.9 C1054.6,511.0 1054.6,510.5 1058.1,517.6 C1061.6,524.7 1062.0,524.4 1063.9,529.3 C1065.8,534.2 1064.6,533.5 1064.9,535.2"/>
<path d="M1030.7,416.8 C1032.1,419.9 1033.4,420.9 1035.6,427.8 C1037.8,434.7 1037.2,434.8 1038.6,441.4 C1040.0,448.0 1039.2,446.8 1040.5,451.2 C1041.8,455.6 1042.6,455.4 1043.4,457.1"/>
<path d="M1064.9,535.2 C1066.3,539.0 1069.5,543.4 1069.8,548.9 C1070.1,554.4 1068.1,550.6 1065.9,554.7 C1063.7,558.8 1063.9,558.0 1062.0,563.5 C1060.1,569.0 1062.6,568.6 1059.0,574.3 C1055.4,580.0 1052.0,581.3 1049.3,584.0"/>
<path d="M270.0,516.6 C271.9,514.8 274.1,511.1 276.8,510.2 C279.5,509.3 277.1,512.0 279.8,513.3 C282.5,514.6 282.2,512.4 286.6,514.7 C291.0,517.0 288.0,518.8 295.4,521.5 C302.8,524.2 302.6,521.9 313.0,524.4 C323.4,526.9 324.0,527.3 332.5,530.3 C341.0,533.3 339.1,533.5 343.2,535.2 C347.3,536.9 345.2,534.3 347.1,536.2 C349.0,538.1 347.1,537.6 350.1,542.0 C353.1,546.4 354.1,546.6 357.9,551.8 C361.7,557.0 360.0,556.0 363.8,560.6 C367.6,565.2 367.2,565.1 371.6,568.4 C376.0,571.7 376.1,572.0 379.4,572.3 C382.7,572.6 378.9,570.9 383.3,569.4 C387.7,567.9 387.4,566.7 395.0,567.0 C402.6,567.3 405.1,566.6 410.6,570.3 C416.1,574.0 413.1,576.3 414.5,580.1 C415.9,583.9 415.2,582.9 415.5,584.0"/>
</g>
<g stroke="#c6b600" stroke-width="2.7">
<path d="M287.6,68.0 C288.7,68.8 289.0,69.6 291.5,71.0 C294.0,72.4 294.1,70.7 296.4,72.9 C298.7,75.1 297.9,73.9 299.7,78.7 C301.5,83.5 301.0,83.5 303.0,90.0 C305.0,96.5 304.5,95.8 307.0,102.0 C309.5,108.2 306.5,107.0 312.0,112.0 C317.5,117.0 320.0,117.5 326.6,119.8 C333.2,122.1 328.3,118.5 335.4,120.3 C342.5,122.1 346.2,125.1 352.0,126.2 C357.8,127.3 351.9,125.3 356.0,124.3 C360.1,123.3 362.6,124.2 366.7,122.7 C370.8,121.2 368.3,120.7 370.6,118.8 C372.9,116.9 373.6,118.1 375.0,115.9 C376.4,113.7 376.1,114.1 375.5,111.0 C374.9,107.9 373.0,107.2 373.0,105.0 C373.0,102.8 372.9,103.7 375.5,103.2 C378.1,102.7 377.4,104.4 382.3,103.2 C387.2,102.0 388.6,100.3 393.0,98.9 C397.4,97.5 395.3,97.4 398.0,98.3 C400.7,99.2 398.4,99.5 402.8,102.2 C407.2,104.9 409.8,105.3 413.6,108.0 C417.4,110.7 413.2,105.4 416.5,112.0 C419.8,118.6 422.0,125.5 425.3,131.5 C428.6,137.5 425.5,132.2 428.2,133.4 C430.9,134.6 431.7,135.4 435.0,135.8 C438.3,136.2 435.9,136.2 440.0,134.8 C444.1,133.4 445.4,132.1 449.7,130.9 C454.0,129.7 450.6,129.4 455.5,130.5 C460.4,131.6 462.5,133.3 467.3,134.8 C472.1,136.3 471.0,137.0 472.7,135.8 C474.4,134.6 472.7,133.9 473.5,130.5 C474.3,127.1 474.1,126.7 475.5,123.7 C476.9,120.7 476.8,120.6 478.6,119.8 C480.4,119.0 478.5,119.0 481.9,120.7 C485.3,122.4 486.9,124.6 490.7,126.0 C494.5,127.4 493.5,126.6 495.6,125.6 C497.7,124.6 496.2,123.0 498.1,122.3 C500.0,121.6 498.5,124.8 502.4,123.0 C506.3,121.2 508.4,118.4 512.2,115.9 C516.0,113.4 513.8,115.6 516.0,113.9 C518.2,112.2 516.1,112.4 520.0,110.0 C523.9,107.6 522.7,106.6 529.8,105.5 C536.9,104.4 537.8,106.1 545.4,106.0 C553.0,105.9 551.0,104.3 557.0,105.0 C563.0,105.7 561.5,107.2 567.0,108.6 C572.5,110.0 573.9,109.6 576.6,110.0"/>
<path d="M1010.0,218.4 C1012.8,219.5 1015.0,220.6 1020.0,222.3 C1025.0,224.0 1024.0,222.4 1027.8,224.3 C1031.6,226.2 1029.9,227.8 1033.7,229.1 C1037.5,230.4 1037.9,226.6 1041.5,229.1 C1045.1,231.6 1043.4,234.6 1046.4,237.9 C1049.4,241.2 1045.9,241.3 1052.2,240.9 C1058.5,240.5 1060.9,237.9 1068.8,236.4 C1076.7,234.9 1074.5,235.2 1080.5,235.6 C1086.5,236.0 1086.5,237.8 1090.3,237.9 C1094.1,238.0 1091.5,236.6 1094.2,236.0 C1096.9,235.4 1096.4,235.1 1100.0,235.6 C1103.6,236.1 1102.5,238.1 1106.9,237.9 C1111.3,237.7 1110.5,236.2 1115.7,235.0 C1120.9,233.8 1119.5,233.6 1125.5,233.6 C1131.5,233.6 1130.9,233.8 1137.2,235.0 C1143.5,236.2 1144.6,235.7 1147.9,237.9 C1151.2,240.1 1147.5,240.5 1148.9,243.0 C1150.3,245.5 1150.1,245.0 1152.8,246.9 C1155.5,248.8 1155.4,246.0 1158.7,249.8 C1162.0,253.6 1162.0,255.4 1164.5,260.6 C1167.0,265.8 1166.4,263.5 1167.5,268.4 C1168.6,273.3 1167.6,273.3 1168.4,278.2 C1169.2,283.1 1169.8,283.8 1170.4,286.0"/>
<path d="M550.3,246.0 C552.7,245.4 555.2,242.9 559.0,244.0 C562.8,245.1 560.9,248.1 564.0,249.8 C567.1,251.5 566.7,250.5 570.0,250.0 C573.3,249.5 571.9,248.7 575.7,247.9 C579.5,247.1 580.5,246.8 583.5,247.3 C586.5,247.8 582.8,248.5 586.4,249.8 C590.0,251.1 590.7,249.1 596.2,251.8 C601.7,254.5 601.6,254.4 606.0,259.6 C610.4,264.8 608.8,264.8 611.8,270.3 C614.8,275.8 613.4,274.5 616.7,279.1 C620.0,283.7 620.2,285.0 623.5,286.9 C626.8,288.8 625.1,284.6 628.4,286.0 C631.7,287.4 631.1,289.5 635.2,291.8 C639.3,294.1 639.4,294.7 643.0,294.2 C646.6,293.7 645.8,290.1 648.0,289.9 C650.2,289.7 649.0,292.2 650.9,293.4 C652.8,294.6 651.2,291.9 654.8,294.2 C658.4,296.5 657.6,297.1 663.6,301.6 C669.6,306.1 669.7,306.7 676.3,310.4 C682.9,314.1 681.8,313.3 687.0,314.9 C692.2,316.5 692.8,315.7 695.0,316.0"/>
<path d="M699.7,306.5 C700.0,310.1 699.1,312.9 700.7,319.2 C702.3,325.5 702.2,322.3 705.5,328.9 C708.8,335.5 709.9,336.3 712.4,342.6 C714.9,348.9 711.3,345.9 714.3,351.4 C717.3,356.9 718.7,355.8 723.1,362.1 C727.5,368.4 726.4,367.3 730.0,373.9 C733.6,380.5 733.8,378.5 735.8,385.6 C737.8,392.7 736.6,390.2 737.2,399.3 C737.8,408.4 737.6,410.6 737.8,418.0 C738.0,425.4 737.5,420.3 737.8,425.8 C738.1,431.3 737.6,429.3 738.7,437.5 C739.8,445.7 741.4,448.3 741.7,455.1 C742.0,461.9 739.4,457.5 739.7,461.9 C740.0,466.3 740.2,464.4 742.7,470.7 C745.2,477.0 744.1,475.9 748.5,484.4 C752.9,492.9 755.3,494.7 758.3,501.0 C761.3,507.3 756.0,503.3 759.3,506.9 C762.6,510.5 764.8,509.9 770.0,513.7 C775.2,517.5 773.7,517.5 777.8,520.5 C781.9,523.5 779.7,520.6 784.6,524.4 C789.5,528.2 789.6,530.4 795.4,534.2 C801.2,538.0 797.0,536.3 805.2,538.1 C813.4,539.9 816.5,540.9 824.7,540.7 C832.9,540.5 826.3,538.8 834.5,537.5 C842.7,536.2 843.1,538.7 854.0,536.2 C864.9,533.7 864.8,530.1 873.5,528.4 C882.2,526.7 879.0,524.5 885.0,530.0 C891.0,535.5 891.1,539.9 895.0,547.9 C898.9,555.9 895.6,553.4 898.9,558.6 C902.2,563.8 899.6,561.5 906.7,566.4 C913.8,571.3 915.0,571.3 924.3,576.2 C933.6,581.1 935.6,581.8 940.0,584.0"/>
<path d="M507.3,331.9 C508.4,335.7 507.6,340.3 511.2,345.5 C514.8,350.7 515.9,347.9 520.0,350.4 C524.1,352.9 522.1,348.8 525.9,354.3 C529.7,359.8 531.5,363.4 533.7,370.0 C535.9,376.6 532.1,372.9 533.7,377.8 C535.3,382.7 537.3,382.0 539.5,387.5 C541.7,393.0 540.7,391.3 541.5,397.3 C542.3,403.3 541.1,403.2 542.5,409.0 C543.9,414.8 543.1,413.3 546.4,418.0 C549.7,422.7 551.2,420.9 554.2,425.8 C557.2,430.7 556.0,427.9 557.1,435.6 C558.2,443.3 556.2,443.9 558.1,453.2 C560.0,462.5 559.3,462.0 563.9,468.8 C568.5,475.6 569.5,474.3 574.7,477.6 C579.9,480.9 579.8,476.4 582.5,480.5 C585.2,484.6 583.4,488.4 584.5,492.2 C585.6,496.0 579.3,491.3 586.4,494.2 C593.5,497.1 598.9,498.8 609.8,502.4 C620.7,506.0 616.2,504.4 625.5,506.9 C634.8,509.4 634.8,509.8 643.0,511.4 C651.2,513.0 651.5,512.3 654.8,512.7"/>
<path d="M690.9,500.0 C695.5,501.5 699.6,503.4 707.5,505.5 C715.4,507.6 712.1,506.0 719.2,507.5 C726.3,509.0 726.3,509.0 732.9,510.8 C739.5,512.6 738.3,513.8 742.7,514.1 C747.1,514.4 743.9,513.6 748.5,511.8 C753.1,510.0 756.3,508.7 759.3,507.5"/>
<path d="M810.0,329.9 C810.6,334.5 810.6,338.6 812.0,346.5 C813.4,354.4 814.4,352.2 814.9,358.2 C815.4,364.2 813.6,359.8 813.9,368.0 C814.2,376.2 815.9,378.7 815.9,387.5 C815.9,396.3 813.9,392.7 813.9,399.3 C813.9,405.9 817.0,406.9 815.9,411.0 C814.8,415.1 812.2,411.9 810.0,413.9 C807.8,415.9 809.2,415.2 808.1,418.0 C807.0,420.8 806.7,422.2 806.1,423.9"/>
<path d="M362.8,404.1 C363.1,408.0 362.7,412.5 363.8,418.0 C364.9,423.5 365.9,420.6 366.7,423.9 C367.5,427.2 366.7,428.1 366.7,429.7"/>
<path d="M391.0,443.4 C391.3,445.3 393.1,447.2 392.0,450.2 C390.9,453.2 388.5,450.0 387.2,454.1 C385.9,458.2 389.1,459.7 387.2,464.9 C385.3,470.1 382.3,466.7 380.4,472.7 C378.5,478.7 381.0,478.8 380.4,486.4 C379.8,494.0 379.8,494.8 378.4,500.0 C377.0,505.2 376.6,501.1 375.5,504.9 C374.4,508.7 377.0,508.8 374.5,513.7 C372.0,518.6 370.5,515.9 366.7,522.5 C362.9,529.1 363.0,531.4 360.8,537.1 C358.6,542.8 360.8,540.5 358.9,543.0 C357.0,545.5 355.4,545.1 354.0,545.9"/>
<path d="M434.1,539.1 C433.5,540.2 434.8,541.9 432.1,543.0 C429.4,544.1 428.1,541.9 424.3,543.0 C420.5,544.1 421.4,543.9 418.4,546.9 C415.4,549.9 415.3,550.4 413.6,553.7 C411.9,557.0 412.9,554.6 412.2,558.6 C411.5,562.6 411.3,565.4 411.0,568.0"/>
<path d="M788.6,535.2 C786.9,537.4 784.6,537.5 782.7,543.0 C780.8,548.5 782.3,547.6 781.7,554.7 C781.1,561.8 781.5,561.8 780.7,568.4 C779.9,575.0 779.3,573.8 778.8,578.2 C778.3,582.6 778.8,582.4 778.8,584.0"/>
<path d="M1066.9,535.2 C1068.5,534.5 1068.9,533.1 1072.7,532.8 C1076.5,532.5 1077.5,533.0 1080.5,534.2 C1083.5,535.4 1082.7,536.3 1083.5,537.1"/>
<path d="M1088.4,550.4 C1092.2,551.3 1095.7,552.5 1102.0,553.7 C1108.3,554.9 1105.9,552.9 1110.8,554.7 C1115.7,556.5 1118.2,557.7 1119.6,560.2 C1121.0,562.7 1117.9,564.2 1115.7,563.5 C1113.5,562.8 1112.9,559.3 1111.8,557.6"/>
<path d="M1063.9,563.5 C1067.5,566.0 1069.2,566.6 1076.6,572.3 C1084.0,578.0 1086.5,580.7 1090.3,584.0"/>
</g><g stroke="#ff7f00" stroke-width="3.1">
<path d="M532.0,68.0 C531.1,70.2 528.3,71.2 528.8,75.8 C529.3,80.4 531.0,80.2 533.7,84.6 C536.4,89.0 534.7,87.8 538.5,91.4 C542.3,95.0 541.0,95.6 547.3,97.3 C553.6,99.0 555.5,96.5 561.0,97.3 C566.5,98.1 565.0,98.0 566.9,100.2 C568.8,102.4 565.1,102.3 567.8,105.0 C570.5,107.7 571.9,107.2 576.6,110.0 C581.3,112.8 580.9,113.6 584.5,114.9 C588.1,116.2 586.6,113.0 589.3,114.5 C592.0,116.0 592.8,118.7 594.2,120.3"/>
<path d="M594.2,120.3 C595.3,119.6 594.7,118.8 598.0,117.8 C601.3,116.8 600.7,119.0 606.0,116.8 C611.3,114.6 610.7,114.6 617.0,110.0 C623.3,105.4 623.9,104.3 628.4,100.2 C632.9,96.1 632.0,98.9 632.9,95.3 C633.8,91.7 632.4,91.9 631.7,87.5 C631.0,83.1 627.8,80.5 630.4,79.7 C633.0,78.9 633.6,84.0 641.0,84.6 C648.4,85.2 649.0,82.3 656.7,82.0 C664.4,81.7 660.2,83.4 668.4,83.6 C676.6,83.8 676.7,83.1 686.0,82.6 C695.3,82.1 695.0,81.7 701.6,81.7 C708.2,81.7 705.1,81.4 709.5,82.6 C713.9,83.8 712.4,85.4 717.3,86.0 C722.2,86.6 722.1,84.2 727.0,84.6 C731.9,85.0 728.8,85.6 734.8,87.5 C740.8,89.4 742.2,91.4 748.5,91.4 C754.8,91.4 751.3,89.1 757.3,87.5 C763.3,85.9 765.4,85.6 770.0,85.6 C774.6,85.6 771.4,87.8 773.9,87.5 C776.4,87.2 775.5,84.3 778.8,84.6 C782.1,84.9 782.3,87.1 785.6,88.5 C788.9,89.9 789.1,89.2 790.5,89.5"/>
<path d="M790.5,89.5 C791.6,87.8 793.0,87.4 794.4,83.6 C795.8,79.8 794.3,80.2 795.4,75.8 C796.5,71.4 797.5,70.2 798.3,68.0"/>
<path d="M790.5,89.5 C791.9,87.7 790.8,85.3 795.4,83.2 C800.0,81.1 802.5,83.5 807.1,82.0 C811.7,80.5 803.2,79.8 812.0,77.8 C820.8,75.8 825.8,77.5 838.4,74.8 C851.0,72.1 851.7,69.9 856.9,68.0"/>
<path d="M790.5,89.5 C791.3,91.7 792.8,93.5 793.4,97.3 C794.0,101.1 794.4,99.1 792.5,103.2 C790.6,107.3 789.1,107.0 786.6,111.9 C784.1,116.8 785.4,114.4 783.7,120.7 C782.0,127.0 782.1,127.3 780.7,134.4 C779.3,141.5 778.8,140.6 778.8,146.1 C778.8,151.6 780.7,149.0 780.7,153.9 C780.7,158.8 780.7,158.0 778.8,163.7 C776.9,169.4 775.8,165.6 773.9,174.4 C772.0,183.2 773.1,187.3 772.0,195.0 C770.9,202.7 772.5,198.8 770.0,201.8 C767.5,204.8 767.0,200.0 763.2,205.7 C759.4,211.4 761.8,211.9 756.3,222.3 C750.8,232.7 749.1,234.7 743.6,243.0 C738.1,251.3 738.7,249.3 736.8,251.8"/>
<path d="M594.2,120.3 C592.3,124.0 589.6,126.5 587.4,133.4 C585.2,140.3 587.8,139.4 586.4,145.1 C585.0,150.8 582.5,148.1 582.5,153.9 C582.5,159.7 585.3,160.2 586.4,165.7 C587.5,171.2 589.7,167.5 586.4,173.5 C583.1,179.5 582.9,182.2 574.7,187.1 C566.5,192.0 562.5,189.1 557.1,191.0 C551.7,192.9 555.0,191.3 555.5,194.0 C556.0,196.7 559.1,195.6 559.0,200.8 C558.9,206.0 556.2,206.5 555.2,212.5 C554.2,218.5 556.9,213.8 555.5,222.3 C554.1,230.8 552.6,235.0 550.3,243.0 C548.0,251.0 550.3,248.3 547.3,250.8 C544.3,253.3 543.3,249.3 539.5,251.8 C535.7,254.3 536.7,256.0 533.7,259.6 C530.7,263.2 532.6,261.2 528.8,264.5 C525.0,267.8 524.1,268.6 520.0,271.3 C515.9,274.0 516.3,271.6 514.1,274.3 C511.9,277.0 515.2,278.4 512.2,281.1 C509.2,283.8 506.1,281.8 503.4,284.0 C500.7,286.2 502.1,284.5 502.4,288.9 C502.7,293.3 504.7,294.4 504.4,299.6 C504.1,304.8 501.7,302.6 501.4,307.5 C501.1,312.4 502.6,312.3 503.4,317.2 C504.2,322.1 504.1,320.9 504.4,325.0 C504.7,329.1 504.7,328.1 504.4,331.9 C504.1,335.7 505.6,334.1 503.4,338.7 C501.2,343.3 500.7,343.6 496.6,348.5 C492.5,353.4 492.6,353.3 488.8,356.3 C485.0,359.3 485.4,357.6 482.9,359.2 C480.4,360.8 481.9,362.0 480.0,362.1 C478.1,362.2 478.7,360.1 476.0,359.6 C473.3,359.1 473.2,359.8 470.2,360.2 C467.2,360.6 468.6,361.2 465.3,361.2 C462.0,361.2 460.7,359.1 458.5,360.2 C456.3,361.3 458.9,363.4 457.5,365.1 C456.1,366.8 456.9,366.3 453.6,366.4 C450.3,366.5 450.2,364.5 445.8,365.5 C441.4,366.5 440.9,369.1 438.0,370.0 C435.1,370.9 438.1,367.3 435.6,368.6 C433.1,369.9 431.4,371.7 429.2,374.8 C427.0,377.9 428.6,375.6 427.8,379.7 C427.0,383.8 425.9,384.0 426.3,389.5 C426.7,395.0 427.9,393.8 429.2,399.3 C430.5,404.8 430.8,404.4 431.1,409.0 C431.4,413.6 432.1,414.2 430.2,415.9 C428.3,417.6 426.2,414.3 424.3,414.9 C422.4,415.5 423.6,416.0 423.3,418.0 C423.0,420.0 424.7,418.1 423.3,421.9 C421.9,425.7 422.2,429.5 418.4,431.7 C414.6,433.9 413.7,432.2 409.6,429.7 C405.5,427.2 409.1,424.3 403.8,422.9 C398.5,421.5 394.7,422.9 390.7,424.8 C386.7,426.7 391.1,426.6 389.5,429.7 C387.9,432.8 386.3,434.2 385.0,436.0"/>
<path d="M512.2,281.1 C511.4,283.0 510.3,283.0 509.3,287.9 C508.3,292.8 510.1,294.9 508.7,298.7 C507.3,302.5 505.6,300.8 504.4,301.6"/>
<path d="M385.0,436.0 C382.6,435.0 380.7,434.8 376.4,432.6 C372.1,430.4 372.3,427.4 369.6,428.2 C366.9,429.0 368.9,432.7 366.7,435.6 C364.5,438.5 367.0,436.9 361.8,438.5 C356.6,440.1 355.2,439.7 348.1,441.4 C341.0,443.1 344.6,442.6 336.4,444.4 C328.2,446.2 330.3,448.3 318.8,447.7 C307.3,447.1 303.9,444.6 295.4,442.4 C286.9,440.2 292.7,439.3 288.6,439.9 C284.5,440.5 285.9,442.6 280.7,444.4 C275.5,446.2 273.0,445.8 270.0,446.3"/>
<path d="M594.2,120.3 C593.7,122.6 591.2,124.3 592.3,128.5 C593.4,132.7 594.3,132.4 598.1,135.4 C601.9,138.4 599.3,134.7 605.9,139.3 C612.5,143.9 613.4,146.5 621.6,152.0 C629.8,157.5 627.6,154.4 635.2,158.8 C642.8,163.2 644.0,163.5 648.9,167.6 C653.8,171.7 648.4,170.5 652.8,173.5 C657.2,176.5 659.6,173.8 664.5,178.4 C669.4,183.0 665.5,185.1 670.4,190.0 C675.3,194.9 676.1,193.7 682.1,195.9 C688.1,198.1 687.0,194.9 691.9,197.9 C696.8,200.9 696.7,202.3 699.7,206.7 C702.7,211.1 700.4,206.9 702.6,213.5 C704.8,220.1 701.2,221.8 707.5,230.1 C713.8,238.4 716.8,236.9 725.0,243.0 C733.2,249.1 733.5,249.3 736.8,251.8"/>
<path d="M736.8,251.8 C739.5,253.7 740.6,253.4 746.6,258.6 C752.6,263.8 751.7,263.2 758.3,270.3 C764.9,277.4 765.4,277.7 770.0,284.0 C774.6,290.3 771.9,289.2 774.9,292.8 C777.9,296.4 776.1,290.1 780.7,296.7 C785.3,303.3 785.7,308.8 791.5,316.2 C797.3,323.6 796.1,319.5 801.3,323.1 C806.5,326.7 805.6,327.5 810.0,328.9 C814.4,330.3 811.7,329.1 816.9,328.0 C822.1,326.9 822.6,327.2 828.6,325.0 C834.6,322.8 832.9,321.6 838.4,320.1 C843.9,318.6 844.6,319.0 848.1,319.6 C851.6,320.2 845.0,321.1 851.0,322.1 C857.0,323.1 862.7,322.0 869.6,323.1 C876.5,324.2 869.5,322.4 875.5,326.0 C881.5,329.6 882.4,332.0 891.1,335.8 C899.8,339.6 896.8,337.2 906.7,339.7 C916.6,342.2 915.4,341.5 926.3,344.6 C937.2,347.7 937.6,349.1 945.8,350.8 C954.0,352.5 948.4,351.8 955.5,350.8 C962.6,349.8 963.0,347.9 971.2,347.1 C979.4,346.3 978.0,347.5 984.8,348.1 C991.6,348.7 992.6,349.0 995.6,349.4"/>
<path d="M736.8,251.8 C736.5,252.9 737.5,254.3 735.8,255.7 C734.1,257.1 732.2,254.2 730.9,256.7 C729.6,259.2 731.8,260.1 731.3,264.5 C730.8,268.9 731.0,267.9 729.0,272.3 C727.0,276.7 728.9,274.9 724.1,280.1 C719.3,285.3 717.7,285.5 712.0,291.0 C706.3,296.5 706.5,295.5 703.6,299.6 C700.7,303.7 708.7,303.3 701.6,305.5 C694.5,307.7 688.6,307.9 678.2,307.5 C667.8,307.1 669.4,304.2 664.5,303.9 C659.6,303.6 663.1,303.9 660.6,306.5 C658.1,309.1 659.3,310.8 655.7,313.3 C652.1,315.8 650.3,311.5 647.9,315.3 C645.5,319.1 647.0,318.3 647.0,327.0 C647.0,335.7 648.7,337.5 647.9,346.5 C647.1,355.5 646.7,354.8 644.0,359.2 C641.3,363.6 641.8,357.5 638.2,362.1 C634.6,366.7 634.0,370.9 631.3,375.8 C628.6,380.7 631.1,374.8 628.4,379.7 C625.7,384.6 624.9,387.9 621.6,393.4 C618.3,398.9 618.4,394.4 616.7,399.3 C615.0,404.2 617.1,405.8 615.7,411.0 C614.3,416.2 612.9,413.3 611.8,418.0 C610.7,422.7 611.2,423.4 611.8,427.8 C612.4,432.2 614.6,429.2 613.8,433.6 C613.0,438.0 610.3,437.4 608.9,443.4 C607.5,449.4 610.0,449.6 608.9,455.1 C607.8,460.6 607.5,457.3 605.0,462.9 C602.5,468.5 602.7,468.7 600.0,475.0 C597.3,481.3 597.6,481.1 595.2,485.4 C592.8,489.7 594.3,488.1 591.3,490.3 C588.3,492.5 588.3,492.8 584.5,493.2 C580.7,493.6 581.4,490.4 577.6,491.8 C573.8,493.2 575.2,493.3 570.8,498.1 C566.4,502.9 565.6,503.9 562.0,508.8 C558.4,513.7 558.9,511.6 558.1,515.7 C557.3,519.8 559.7,518.6 559.1,523.5 C558.5,528.4 556.9,524.5 556.1,533.2 C555.3,541.9 557.2,545.9 556.1,554.7 C555.0,563.5 554.9,559.0 552.2,564.5 C549.5,570.0 548.3,568.8 546.4,574.3 C544.5,579.8 545.7,581.3 545.4,584.0"/>
<path d="M558.0,529.3 C563.2,528.8 567.0,528.9 576.6,527.4 C586.2,525.9 583.0,525.0 592.3,523.9 C601.6,522.8 600.5,523.1 609.8,523.5 C619.1,523.9 618.9,525.1 625.5,525.4 C632.1,525.7 627.8,526.6 633.3,524.4 C638.8,522.2 638.4,520.9 645.0,517.6 C651.6,514.3 651.2,513.0 656.7,512.7 C662.2,512.4 660.9,514.9 664.5,516.6 C668.1,518.3 666.1,518.6 669.4,518.6 C672.7,518.6 671.7,520.7 676.3,516.6 C680.9,512.5 682.2,508.8 686.0,503.9 C689.8,499.0 686.0,503.8 689.9,499.1 C693.8,494.4 694.3,493.4 700.0,487.0 C705.7,480.6 703.4,481.9 710.4,476.2 C717.4,470.5 716.6,472.1 725.1,466.8 C733.6,461.5 731.4,459.6 740.7,457.1 C750.0,454.6 750.1,458.8 758.3,458.0 C766.5,457.2 763.4,456.5 770.0,454.1 C776.6,451.7 774.6,452.0 781.7,449.3 C788.8,446.6 790.5,447.1 795.4,444.4 C800.3,441.7 797.1,443.9 799.3,439.5 C801.5,435.1 801.0,433.1 803.2,428.7 C805.4,424.3 799.5,426.3 807.1,423.9 C814.7,421.5 819.0,420.6 830.5,420.0 C842.0,419.4 838.8,420.2 848.1,421.9 C857.4,423.6 852.9,424.5 863.8,426.2 C874.7,427.9 875.7,426.2 887.2,427.8 C898.7,429.4 894.1,429.5 905.0,432.0 C915.9,434.5 916.0,434.8 926.3,436.6 C936.6,438.4 934.3,437.2 941.9,438.5 C949.5,439.8 946.0,438.1 953.6,441.4 C961.2,444.7 962.6,445.0 969.2,450.2 C975.8,455.4 972.6,454.5 977.0,460.0 C981.4,465.5 979.3,464.9 984.8,469.8 C990.3,474.7 990.0,472.4 996.6,477.6 C1003.2,482.8 1001.7,485.0 1008.3,488.3 C1014.9,491.6 1015.4,488.5 1020.0,489.3 C1024.6,490.1 1022.7,488.8 1024.9,491.2 C1027.1,493.6 1026.6,493.9 1028.0,498.0 C1029.4,502.1 1028.8,501.8 1029.8,505.9 C1030.8,510.0 1028.4,508.1 1031.7,512.7 C1035.0,517.3 1035.8,517.6 1041.5,522.5 C1047.2,527.4 1045.9,527.0 1052.2,530.3 C1058.5,533.6 1060.6,533.1 1063.9,534.2"/>
<path d="M953.0,68.0 C953.2,70.5 952.9,71.3 953.6,76.8 C954.3,82.3 953.8,81.2 955.5,87.5 C957.2,93.8 958.5,91.6 959.5,99.3 C960.5,107.0 960.5,107.3 959.1,114.9 C957.7,122.5 956.7,119.5 954.6,126.6 C952.5,133.7 952.4,134.3 951.6,140.3 C950.8,146.3 950.5,143.2 951.6,148.1 C952.7,153.0 951.7,152.3 955.5,157.8 C959.3,163.3 959.8,162.4 965.3,167.6 C970.8,172.8 971.5,172.6 975.1,176.4 C978.7,180.2 974.7,177.7 978.0,181.3 C981.3,184.9 983.0,184.5 986.8,189.1 C990.6,193.7 988.4,191.6 991.7,197.9 C995.0,204.2 993.3,205.9 998.5,211.6 C1003.7,217.3 1006.1,213.8 1010.2,218.4 C1014.3,223.0 1012.1,221.3 1013.2,228.2 C1014.3,235.1 1013.6,233.4 1014.1,243.0 C1014.6,252.6 1015.6,251.6 1015.1,262.5 C1014.6,273.4 1012.7,273.9 1012.2,282.1 C1011.7,290.3 1013.8,284.7 1013.2,291.8 C1012.6,298.9 1012.7,298.7 1010.2,307.5 C1007.7,316.3 1007.4,316.3 1004.4,323.1 C1001.4,329.9 1002.0,327.5 999.5,331.9 C997.0,336.3 996.7,333.8 995.6,338.7 C994.5,343.6 993.1,343.9 995.6,349.4 C998.1,354.9 999.2,351.9 1004.4,358.2 C1009.6,364.5 1010.3,364.8 1014.1,371.9 C1017.9,379.0 1016.3,378.7 1018.0,383.6 C1019.7,388.5 1017.8,382.4 1020.0,389.5 C1022.2,396.6 1022.9,401.4 1025.9,409.0 C1028.9,416.6 1025.2,414.3 1030.7,416.8 C1036.2,419.3 1040.2,416.6 1045.4,418.0 C1050.6,419.4 1048.3,418.6 1049.3,421.9 C1050.3,425.2 1049.7,424.8 1048.9,429.7 C1048.1,434.6 1048.2,434.6 1046.4,439.5 C1044.6,444.4 1043.3,442.4 1042.5,447.3 C1041.7,452.2 1042.9,450.5 1043.4,457.1 C1043.9,463.7 1044.9,464.1 1044.4,470.7 C1043.9,477.3 1040.9,474.5 1041.5,480.5 C1042.1,486.5 1043.7,485.6 1046.4,492.2 C1049.1,498.8 1048.0,496.8 1051.3,503.9 C1054.6,511.0 1054.6,510.5 1058.1,517.6 C1061.6,524.7 1062.0,524.4 1063.9,529.3 C1065.8,534.2 1064.6,533.5 1064.9,535.2"/>
<path d="M1030.7,416.8 C1032.1,419.9 1033.4,420.9 1035.6,427.8 C1037.8,434.7 1037.2,434.8 1038.6,441.4 C1040.0,448.0 1039.2,446.8 1040.5,451.2 C1041.8,455.6 1042.6,455.4 1043.4,457.1"/>
<path d="M1064.9,535.2 C1066.3,539.0 1069.5,543.4 1069.8,548.9 C1070.1,554.4 1068.1,550.6 1065.9,554.7 C1063.7,558.8 1063.9,558.0 1062.0,563.5 C1060.1,569.0 1062.6,568.6 1059.0,574.3 C1055.4,580.0 1052.0,581.3 1049.3,584.0"/>
<path d="M270.0,516.6 C271.9,514.8 274.1,511.1 276.8,510.2 C279.5,509.3 277.1,512.0 279.8,513.3 C282.5,514.6 282.2,512.4 286.6,514.7 C291.0,517.0 288.0,518.8 295.4,521.5 C302.8,524.2 302.6,521.9 313.0,524.4 C323.4,526.9 324.0,527.3 332.5,530.3 C341.0,533.3 339.1,533.5 343.2,535.2 C347.3,536.9 345.2,534.3 347.1,536.2 C349.0,538.1 347.1,537.6 350.1,542.0 C353.1,546.4 354.1,546.6 357.9,551.8 C361.7,557.0 360.0,556.0 363.8,560.6 C367.6,565.2 367.2,565.1 371.6,568.4 C376.0,571.7 376.1,572.0 379.4,572.3 C382.7,572.6 378.9,570.9 383.3,569.4 C387.7,567.9 387.4,566.7 395.0,567.0 C402.6,567.3 405.1,566.6 410.6,570.3 C416.1,574.0 413.1,576.3 414.5,580.1 C415.9,583.9 415.2,582.9 415.5,584.0"/>
</g></g>
<g font-family="Liberation Sans, sans-serif" font-weight="bold" font-size="12.2" fill="#0000f2" stroke="#fff" stroke-width="2.8" stroke-linejoin="round" paint-order="stroke" stroke-opacity=".9">
<text x="943.8" y="75.5" textLength="19.6" lengthAdjust="spacingAndGlyphs">Sur</text>
<text x="940.0" y="139.7" textLength="25.3" lengthAdjust="spacingAndGlyphs">Meh</text>
<text x="984.5" y="210.6" textLength="21.5" lengthAdjust="spacingAndGlyphs">Tbo</text>
<text x="498.0" y="328.9" textLength="14.5" lengthAdjust="spacingAndGlyphs">Stl</text>
<text x="688.0" y="320.6" textLength="22.4" lengthAdjust="spacingAndGlyphs">Äbg</text>
<text x="998.9" y="321.1" textLength="18.1" lengthAdjust="spacingAndGlyphs">Srv</text>
<text x="1060.0" y="349.3" textLength="19.6" lengthAdjust="spacingAndGlyphs">Alg</text>
<text x="378.0" y="440.4" textLength="23.3" lengthAdjust="spacingAndGlyphs">Nka</text>
<text x="784.6" y="531.3" textLength="10.8" lengthAdjust="spacingAndGlyphs">Et</text>
<text x="875.0" y="531.3" textLength="19.0" lengthAdjust="spacingAndGlyphs">Sgs</text>
<text x="889.0" y="432.6" textLength="12.0" lengthAdjust="spacingAndGlyphs">Ep</text>
<text x="1028.8" y="439.5" textLength="16.6" lengthAdjust="spacingAndGlyphs">Mr</text>
<text x="1016.0" y="502.8" textLength="21.6" lengthAdjust="spacingAndGlyphs">Khä</text>
<text x="1063.4" y="546.9" textLength="18.6" lengthAdjust="spacingAndGlyphs">Cst</text>
</g>
</svg>
<div class="mk" style="left:331.8px;top:33.0px;width:44.0px">DM16</div>
<div class="mk" style="left:627.3px;top:77.2px;width:43.8px">DM12</div>
<div class="mk" style="left:490.0px;top:107.0px;width:44.0px">DM19</div>
<div class="mk" style="left:573.1px;top:115.2px;width:46.3px">DM30</div>
<div class="mk" style="left:586.9px;top:130.3px;width:46.7px">DM03</div>
<div class="mk" style="left:425.8px;top:144.0px;width:46.9px">DM36</div>
<div class="mk" style="left:294.0px;top:147.5px;width:45.8px">DM39</div>
<div class="mk" style="left:629.9px;top:147.5px;width:46.3px">DM08</div>
<div class="mk" style="left:507.4px;top:157.2px;width:45.7px">DM37</div>
<div class="mk" style="left:279.7px;top:182.4px;width:42.6px">DM17</div>
<div class="mk" style="left:406.8px;top:211.1px;width:45.9px">DM25</div>
<div class="mk" style="left:295.9px;top:213.3px;width:46.3px">DM34</div>
<div class="mk" style="left:598.6px;top:226.2px;width:46.3px">DM40</div>
<div class="mk" style="left:349.1px;top:259.4px;width:43.8px">DM01</div>
<div class="mk" style="left:596.0px;top:276.2px;width:45.5px">DM26</div>
<div class="mk" style="left:368.2px;top:333.2px;width:45.5px">DM07</div>
<div class="mk" style="left:629.2px;top:351.0px;width:45.5px">DM29</div>
<div class="mk" style="left:693.9px;top:355.9px;width:46.3px">DM06</div>
<div class="mk" style="left:573.0px;top:362.1px;width:44.0px">DM14</div>
<div class="mk" style="left:606.9px;top:366.0px;width:45.7px">DM20</div>
<div class="mk" style="left:415.0px;top:377.3px;width:46.3px">DM05</div>
<div class="mk" style="left:349.1px;top:383.2px;width:46.5px">DM38</div>
<div class="mk" style="left:678.6px;top:383.2px;width:44.3px">DM27</div>
<div class="mk" style="left:318.9px;top:398.4px;width:46.2px">DM09</div>
<div class="mk" style="left:394.5px;top:408.2px;width:46.5px">DM04</div>
<div class="mk" style="left:251.0px;top:420.3px;width:45.1px">DM32</div>
<div class="mk" style="left:598.6px;top:462.3px;width:40.4px">DM11</div>
<div class="mk" style="left:633.1px;top:474.0px;width:45.7px">DM33</div>
<div class="mk" style="left:526.0px;top:477.3px;width:43.9px">DM10</div>
<div class="mk" style="left:573.2px;top:493.2px;width:44.0px">DM31</div>
<div class="mk" style="left:680.6px;top:494.1px;width:42.3px">DM28</div>
<div class="mk" style="left:443.0px;top:505.3px;width:46.0px">DM23</div>
<div class="mk" style="left:586.0px;top:507.0px;width:44.0px">DM24</div>
<div class="lbar" style="top:10.5px;height:63px"><div style="border-bottom:1px solid #ccc;height:30px"><svg width="30" height="29" viewBox="0 0 30 29" stroke="#000" stroke-width="2.2"><path d="M9.2,14.2 H21.2 M15.2,8.2 V20.2"/></svg></div><div><svg width="30" height="29" viewBox="0 0 30 29" stroke="#000" stroke-width="2.2"><path d="M9.8,14.2 H21.4"/></svg></div></div>
<div class="lbar" style="top:84.3px;height:33px"><div><svg width="30" height="29" viewBox="0 0 30 29" fill="none" stroke="#000" stroke-width="1"><circle cx="15" cy="13.4" r="6.6"/><circle cx="15" cy="13.4" r="1.9" fill="#000" stroke="none"/><path d="M15,5.6v1.8M15,19.4v1.8" stroke-width="1.2"/></svg></div></div>
<div class="lbar" style="top:128px;height:33px"><div><svg width="30" height="29" viewBox="0 0 30 29" fill="none" stroke="#000" stroke-width="1"><path d="M17.4,8.6 A5.7,5.7 0 1 0 20.6,12.6"/><path d="M15.2,5.6 L18.6,8 L15.6,10.6Z" fill="#000" stroke="none"/></svg></div></div>
<div class="abs" style="left:8px;top:486.5px;width:150px;height:21.5px;border-radius:4px;background:rgba(255,255,255,.88);color:#666;font-size:12.8px;line-height:21.5px;padding-left:8.5px;white-space:nowrap;letter-spacing:.09px" id="lu">Last updated: 20:49:47</div>
<div class="abs" id="attr" style="right:0;bottom:0;height:16.8px;background:rgba(255,255,255,.8);font-size:12px;line-height:15.4px;color:#333;padding:0 5px;white-space:nowrap"><svg width="12" height="8" viewBox="0 0 12 8" style="display:inline-block;vertical-align:baseline;margin-right:4px"><rect width="12" height="4" fill="#4c7be1"/><rect y="4" width="12" height="4" fill="#ffd500"/></svg><span style="color:#0078a8">Leaflet</span> <span>|</span> &copy; <span style="color:#0078a8">OpenStreetMap</span> contributors, &copy; <span style="color:#0078a8">OpenRailwayMap</span> contributors</div>
</div>

<div class="abs" style="left:270px;top:596px;width:86px;height:27px;border-radius:14px;background:#d4edda"></div>
<div class="abs" style="left:282px;top:605.5px;width:8px;height:8px;border-radius:50%;background:#155724"></div>
<div class="abs" id="p1" style="margin-top:.8px;left:296px;top:601px;font-size:13.5px;line-height:16px;color:#454b54;white-space:nowrap;letter-spacing:-1.2px">GPS</div>
<div class="abs" id="p2" style="margin-top:.8px;left:328px;top:601px;font-size:13.5px;line-height:16px;color:#3a4049;font-weight:bold;white-space:nowrap;letter-spacing:.5px">40</div>
<div class="abs" style="left:368px;top:596px;width:85px;height:27px;border-radius:14px;background:#fff3cd"></div>
<div class="abs" style="left:380px;top:605.5px;width:8px;height:8px;border-radius:50%;background:#856404"></div>
<div class="abs" id="p3" style="margin-top:.8px;left:394.5px;top:601px;font-size:13.5px;line-height:16px;color:#454b54;white-space:nowrap;letter-spacing:.25px">Stale</div>
<div class="abs" id="p4" style="margin-top:.8px;left:433px;top:601px;font-size:13.5px;line-height:16px;color:#3a4049;font-weight:bold;white-space:nowrap">0</div>
<div class="abs" id="fleet" style="left:270px;top:634.5px;font-size:16px;line-height:20px;font-weight:bold;color:#1d2130;white-space:nowrap">Fleet</div>
<div class="abs" id="info" style="left:270px;top:665px;font-size:12px;line-height:14px;color:#6c7078;white-space:nowrap;letter-spacing:.14px">&#9432; GPS position is considered stale after 1 hour without a new event with valid GPS data. No GPS: no event with valid GPS coordinates found within the search window.</div>
<div class="abs" style="left:270px;top:685px;width:990px;height:195px;overflow:hidden">
<div class="abs" style="left:0;top:0;width:990px;height:31px;background:#e9ecef;border-bottom:2px solid #dcdfe4"></div>
<div class="th" style="left:8px;letter-spacing:.8px">TRAIN</div><div class="th" style="left:162px;letter-spacing:.3px">GPS</div><div class="th" style="left:288px;letter-spacing:.9px">POSITION</div><div class="th" style="left:609px;letter-spacing:.72px;word-spacing:-1.5px">LAST EVENT</div>
<div class="row" style="top:34px"><div class="td" style="left:8px;top:5.8px">DM01</div><div class="yes">Yes</div><div class="td" style="left:288px;top:5.8px">59.8600, 15.6899</div><div class="td" style="left:609px;top:5.8px;word-spacing:2px;letter-spacing:.42px">2026-03-15 20:43:39</div></div>
<div class="row" style="top:65px"><div class="td" style="left:8px;top:5.8px">DM02</div><div class="yes">Yes</div><div class="td" style="left:288px;top:5.8px">59.0776, 17.3305</div><div class="td" style="left:609px;top:5.8px;word-spacing:2px;letter-spacing:.42px">2026-03-15 20:49:11</div></div>
<div class="row" style="top:96px"><div class="td" style="left:8px;top:5.8px">DM03</div><div class="yes">Yes</div><div class="td" style="left:288px;top:5.8px">60.2125, 17.0020</div><div class="td" style="left:609px;top:5.8px;word-spacing:2px;letter-spacing:.42px">2026-03-15 20:41:36</div></div>
<div class="row" style="top:127px"><div class="td" style="left:8px;top:5.8px">DM04</div><div class="yes">Yes</div><div class="td" style="left:288px;top:5.8px">59.4461, 15.9491</div><div class="td" style="left:609px;top:5.8px;word-spacing:2px;letter-spacing:.42px">2026-03-15 20:43:31</div></div>
<div class="row" style="top:158px"><div class="td" style="left:8px;top:5.8px">DM05</div><div class="yes">Yes</div><div class="td" style="left:288px;top:5.8px">59.5329, 16.0589</div><div class="td" style="left:609px;top:5.8px;word-spacing:2px;letter-spacing:.42px">2026-03-15 20:44:57</div></div>
<div class="row" style="top:189px"><div class="td" style="left:8px;top:5.8px">DM06</div><div class="yes">Yes</div><div class="td" style="left:288px;top:5.8px">59.6202, 17.5823</div><div class="td" style="left:609px;top:5.8px;word-spacing:2px;letter-spacing:.42px">2026-03-15 20:48:02</div></div>
</div>
</body></html>
